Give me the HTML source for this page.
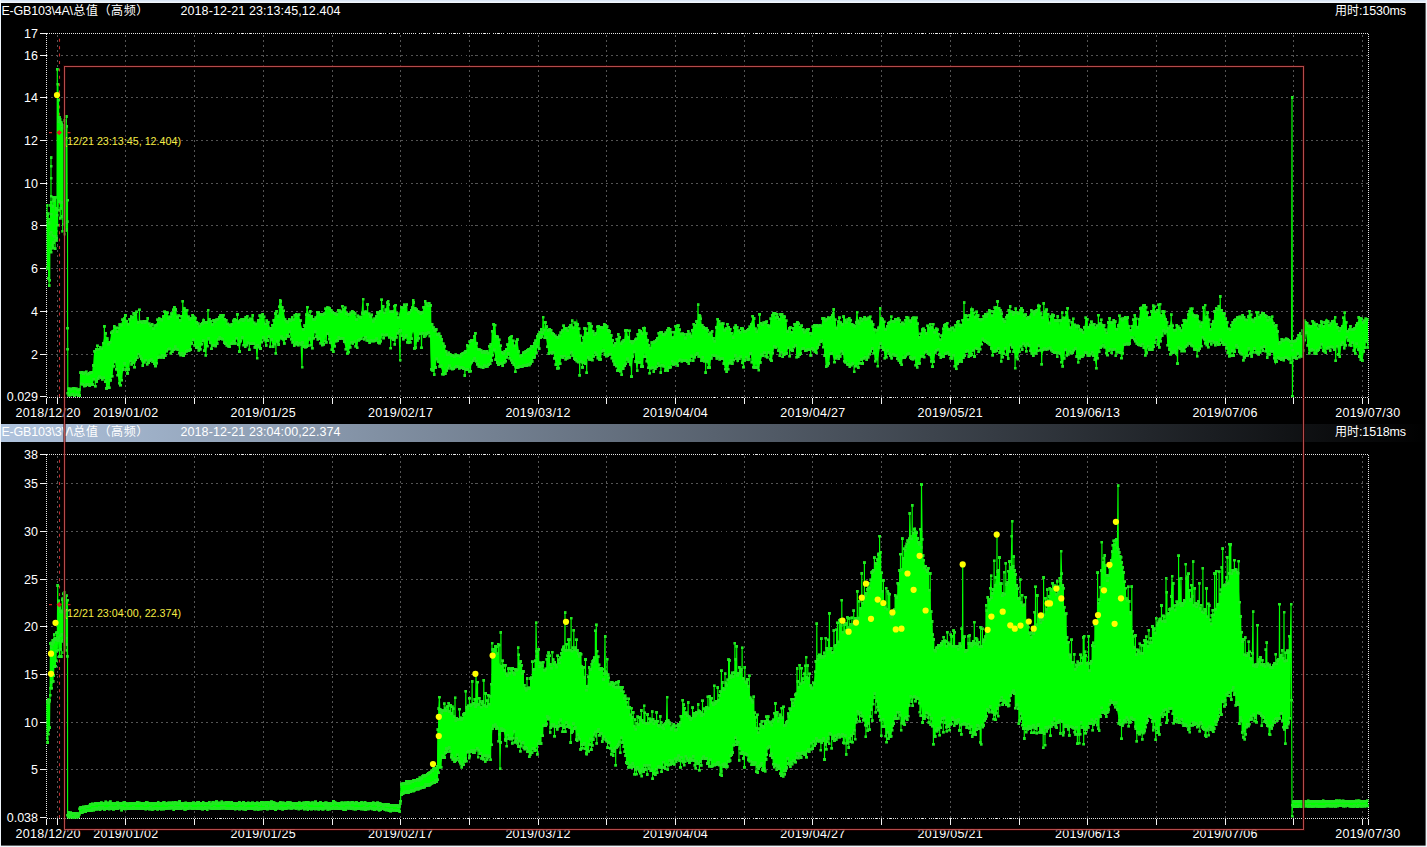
<!DOCTYPE html>
<html lang="zh"><head><meta charset="utf-8"><title>E-GB103 总值（高频）</title>
<style>html,body{margin:0;padding:0;background:#000;overflow:hidden}svg{display:block}text{font-family:"Liberation Sans","Noto Sans CJK SC",sans-serif;fill:#fff}.ax{font-size:12.5px}.hd{font-size:12.5px}.cj{font-size:12px}.an{font-size:10.7px;fill:#f4ec45}</style></head><body>
<svg width="1427" height="847" viewBox="0 0 1427 847">
<defs><linearGradient id="hg" x1="0" y1="0" x2="1" y2="0"><stop offset="0" stop-color="#b0c4de"/><stop offset="1" stop-color="#000"/></linearGradient><linearGradient id="tg" x1="0" y1="0" x2="0" y2="1"><stop offset="0" stop-color="#d3e1f2"/><stop offset="1" stop-color="#f6f9fd"/></linearGradient><marker id="m" markerWidth="3" markerHeight="3" refX="1.5" refY="1.5" markerUnits="userSpaceOnUse"><rect width="3" height="3" fill="#22e822"/></marker><clipPath id="c1"><rect x="46" y="33" width="1323.5" height="364.5"/></clipPath><clipPath id="c2"><rect x="46" y="454" width="1323.5" height="364.5"/></clipPath></defs>
<rect width="1427" height="847" fill="#000"/>
<path d="M57.5 34.5V397.5 M125.5 34.5V397.5 M194.5 34.5V397.5 M263.5 34.5V397.5 M332.5 34.5V397.5 M400.5 34.5V397.5 M469.5 34.5V397.5 M538.5 34.5V397.5 M606.5 34.5V397.5 M675.5 34.5V397.5 M744.5 34.5V397.5 M812.5 34.5V397.5 M881.5 34.5V397.5 M950.5 34.5V397.5 M1019.5 34.5V397.5 M1087.5 34.5V397.5 M1156.5 34.5V397.5 M1225.5 34.5V397.5 M1293.5 34.5V397.5 M1362.5 34.5V397.5 M45.5 55.5H1368.5 M45.5 97.5H1368.5 M45.5 140.5H1368.5 M45.5 183.5H1368.5 M45.5 225.5H1368.5 M45.5 268.5H1368.5 M45.5 311.5H1368.5 M45.5 354.5H1368.5" stroke="#545454" stroke-width="1" stroke-dasharray="2 3" fill="none" shape-rendering="crispEdges"/>
<path d="M46.5 33.5H1368.5 M46.5 397.5H1368.5 M46.5 33.5V397.5 M1368.5 33.5V397.5" stroke="#e6e6e6" stroke-width="1" stroke-dasharray="1 1" fill="none" shape-rendering="crispEdges"/>
<path d="M40 33.5H46.5 M40 55.5H46.5 M40 97.5H46.5 M40 140.5H46.5 M40 183.5H46.5 M40 225.5H46.5 M40 268.5H46.5 M40 311.5H46.5 M40 354.5H46.5 M40 396.5H46.5 M46.5 397.5V403.5 M57.5 397.5V403.5 M125.5 397.5V403.5 M194.5 397.5V403.5 M263.5 397.5V403.5 M332.5 397.5V403.5 M400.5 397.5V403.5 M469.5 397.5V403.5 M538.5 397.5V403.5 M606.5 397.5V403.5 M675.5 397.5V403.5 M744.5 397.5V403.5 M812.5 397.5V403.5 M881.5 397.5V403.5 M950.5 397.5V403.5 M1019.5 397.5V403.5 M1087.5 397.5V403.5 M1156.5 397.5V403.5 M1225.5 397.5V403.5 M1293.5 397.5V403.5 M1362.5 397.5V403.5 M1368.5 397.5V403.5" stroke="#f2f2f2" stroke-width="1" fill="none" shape-rendering="crispEdges"/>
<rect x="0" y="424" width="1427" height="18" fill="url(#hg)"/>
<path d="M57.5 455.5V818.5 M125.5 455.5V818.5 M194.5 455.5V818.5 M263.5 455.5V818.5 M332.5 455.5V818.5 M400.5 455.5V818.5 M469.5 455.5V818.5 M538.5 455.5V818.5 M606.5 455.5V818.5 M675.5 455.5V818.5 M744.5 455.5V818.5 M812.5 455.5V818.5 M881.5 455.5V818.5 M950.5 455.5V818.5 M1019.5 455.5V818.5 M1087.5 455.5V818.5 M1156.5 455.5V818.5 M1225.5 455.5V818.5 M1293.5 455.5V818.5 M1362.5 455.5V818.5 M45.5 483.5H1368.5 M45.5 531.5H1368.5 M45.5 579.5H1368.5 M45.5 626.5H1368.5 M45.5 674.5H1368.5 M45.5 722.5H1368.5 M45.5 769.5H1368.5" stroke="#545454" stroke-width="1" stroke-dasharray="2 3" fill="none" shape-rendering="crispEdges"/>
<path d="M46.5 454.5H1368.5 M46.5 818.5H1368.5 M46.5 454.5V818.5 M1368.5 454.5V818.5" stroke="#e6e6e6" stroke-width="1" stroke-dasharray="1 1" fill="none" shape-rendering="crispEdges"/>
<path d="M40 454.5H46.5 M40 483.5H46.5 M40 531.5H46.5 M40 579.5H46.5 M40 626.5H46.5 M40 674.5H46.5 M40 722.5H46.5 M40 769.5H46.5 M40 817.5H46.5 M46.5 818.5V824.5 M57.5 818.5V824.5 M125.5 818.5V824.5 M194.5 818.5V824.5 M263.5 818.5V824.5 M332.5 818.5V824.5 M400.5 818.5V824.5 M469.5 818.5V824.5 M538.5 818.5V824.5 M606.5 818.5V824.5 M675.5 818.5V824.5 M744.5 818.5V824.5 M812.5 818.5V824.5 M881.5 818.5V824.5 M950.5 818.5V824.5 M1019.5 818.5V824.5 M1087.5 818.5V824.5 M1156.5 818.5V824.5 M1225.5 818.5V824.5 M1293.5 818.5V824.5 M1362.5 818.5V824.5 M1368.5 818.5V824.5" stroke="#f2f2f2" stroke-width="1" fill="none" shape-rendering="crispEdges"/>
<text x="38" y="37.8" text-anchor="end" class="ax">17</text>
<text x="38" y="59.8" text-anchor="end" class="ax">16</text>
<text x="38" y="101.8" text-anchor="end" class="ax">14</text>
<text x="38" y="144.8" text-anchor="end" class="ax">12</text>
<text x="38" y="187.8" text-anchor="end" class="ax">10</text>
<text x="38" y="229.8" text-anchor="end" class="ax">8</text>
<text x="38" y="272.8" text-anchor="end" class="ax">6</text>
<text x="38" y="315.8" text-anchor="end" class="ax">4</text>
<text x="38" y="358.8" text-anchor="end" class="ax">2</text>
<text x="38" y="400.8" text-anchor="end" class="ax">0.029</text>
<text x="15.5" y="417" textLength="65" lengthAdjust="spacing" class="ax">2018/12/20</text>
<text x="93.2" y="417" textLength="65" lengthAdjust="spacing" class="ax">2019/01/02</text>
<text x="230.6" y="417" textLength="65" lengthAdjust="spacing" class="ax">2019/01/25</text>
<text x="368.0" y="417" textLength="65" lengthAdjust="spacing" class="ax">2019/02/17</text>
<text x="505.4" y="417" textLength="65" lengthAdjust="spacing" class="ax">2019/03/12</text>
<text x="642.8" y="417" textLength="65" lengthAdjust="spacing" class="ax">2019/04/04</text>
<text x="780.2" y="417" textLength="65" lengthAdjust="spacing" class="ax">2019/04/27</text>
<text x="917.6" y="417" textLength="65" lengthAdjust="spacing" class="ax">2019/05/21</text>
<text x="1055.0" y="417" textLength="65" lengthAdjust="spacing" class="ax">2019/06/13</text>
<text x="1192.4" y="417" textLength="65" lengthAdjust="spacing" class="ax">2019/07/06</text>
<text x="1335.2" y="417" textLength="65" lengthAdjust="spacing" class="ax">2019/07/30</text>
<text x="1.5" y="15" class="hd"><tspan textLength="71.5" lengthAdjust="spacing">E-GB103\4A\</tspan><tspan class="cj" dx="0.5" textLength="75" lengthAdjust="spacing">总值（高频）</tspan></text>
<text x="180.5" y="15" textLength="160" lengthAdjust="spacing" class="hd">2018-12-21 23:13:45,12.404</text>
<text x="1335" y="15" class="hd"><tspan class="cj">用时</tspan><tspan textLength="47" lengthAdjust="spacing">:1530ms</tspan></text>
<text x="38" y="458.8" text-anchor="end" class="ax">38</text>
<text x="38" y="487.8" text-anchor="end" class="ax">35</text>
<text x="38" y="535.8" text-anchor="end" class="ax">30</text>
<text x="38" y="583.8" text-anchor="end" class="ax">25</text>
<text x="38" y="630.8" text-anchor="end" class="ax">20</text>
<text x="38" y="678.8" text-anchor="end" class="ax">15</text>
<text x="38" y="726.8" text-anchor="end" class="ax">10</text>
<text x="38" y="773.8" text-anchor="end" class="ax">5</text>
<text x="38" y="821.8" text-anchor="end" class="ax">0.038</text>
<text x="15.5" y="838" textLength="65" lengthAdjust="spacing" class="ax">2018/12/20</text>
<text x="93.2" y="838" textLength="65" lengthAdjust="spacing" class="ax">2019/01/02</text>
<text x="230.6" y="838" textLength="65" lengthAdjust="spacing" class="ax">2019/01/25</text>
<text x="368.0" y="838" textLength="65" lengthAdjust="spacing" class="ax">2019/02/17</text>
<text x="505.4" y="838" textLength="65" lengthAdjust="spacing" class="ax">2019/03/12</text>
<text x="642.8" y="838" textLength="65" lengthAdjust="spacing" class="ax">2019/04/04</text>
<text x="780.2" y="838" textLength="65" lengthAdjust="spacing" class="ax">2019/04/27</text>
<text x="917.6" y="838" textLength="65" lengthAdjust="spacing" class="ax">2019/05/21</text>
<text x="1055.0" y="838" textLength="65" lengthAdjust="spacing" class="ax">2019/06/13</text>
<text x="1192.4" y="838" textLength="65" lengthAdjust="spacing" class="ax">2019/07/06</text>
<text x="1335.2" y="838" textLength="65" lengthAdjust="spacing" class="ax">2019/07/30</text>
<text x="1.5" y="436" class="hd"><tspan textLength="71.5" lengthAdjust="spacing">E-GB103\3V\</tspan><tspan class="cj" dx="0.5" textLength="75" lengthAdjust="spacing">总值（高频）</tspan></text>
<text x="180.5" y="436" textLength="160" lengthAdjust="spacing" class="hd">2018-12-21 23:04:00,22.374</text>
<text x="1335" y="436" class="hd"><tspan class="cj">用时</tspan><tspan textLength="47" lengthAdjust="spacing">:1518ms</tspan></text>
<path d="M59.5 38.8V397 M59.5 459.8V818" stroke="#c22c2c" stroke-width="1.1" stroke-dasharray="3 4.4" fill="none"/>
<g clip-path="url(#c1)">
<polygon points="68.0,389.2 68.7,389.2 69.4,389.2 70.1,389.2 70.8,389.2 71.5,389.2 72.2,389.2 72.9,389.2 73.6,389.1 74.3,389.1 75.0,389.2 75.7,389.2 76.4,389.1 77.1,389.1 77.8,389.1 78.5,389.0 79.2,389.0 79.9,389.1 80.6,372.6 81.3,372.8 82.0,373.1 82.7,373.4 83.4,373.7 84.1,373.5 84.8,373.1 85.5,372.6 86.2,372.2 86.9,372.7 87.6,373.3 88.3,373.8 89.0,374.1 89.7,373.6 90.4,373.0 91.1,372.5 91.8,372.3 92.5,372.3 93.2,365.3 93.9,353.4 94.6,352.1 95.3,350.6 96.0,349.1 96.7,348.0 97.4,348.5 98.1,348.9 98.8,349.3 99.5,349.5 100.2,349.4 100.9,349.0 101.6,348.6 102.3,346.0 103.0,342.8 103.7,339.6 104.4,336.6 105.1,336.7 105.8,336.8 106.5,336.9 107.2,337.4 107.9,338.5 108.6,340.2 109.3,342.0 110.0,340.5 110.7,337.3 111.4,334.1 112.1,330.8 112.8,329.4 113.5,328.1 114.2,326.9 114.9,326.1 115.6,327.3 116.3,328.4 117.0,329.5 117.7,329.4 118.4,328.1 119.1,326.8 119.8,325.5 120.5,324.3 121.2,323.2 121.9,322.1 122.6,320.9 123.3,319.0 124.0,317.1 124.7,315.2 125.4,315.3 126.1,318.5 126.8,321.6 127.5,324.7 128.2,324.1 128.9,321.9 129.6,319.6 130.3,317.3 131.0,317.4 131.7,317.4 132.4,317.5 133.1,317.1 133.8,315.5 134.5,313.9 135.2,312.3 135.9,313.3 136.6,316.3 137.3,319.3 138.0,322.3 138.7,322.5 139.4,322.1 140.1,321.7 140.8,321.4 141.5,322.1 142.2,322.8 142.9,323.4 143.6,323.3 144.3,322.2 145.0,321.1 145.7,319.9 146.4,320.4 147.1,321.3 147.8,322.3 148.5,323.2 149.2,324.0 149.9,324.7 150.6,325.5 151.3,326.1 152.0,326.4 152.7,326.8 153.4,327.2 154.1,326.7 154.8,325.6 155.5,324.5 156.2,323.4 156.9,322.8 157.6,322.1 158.3,321.5 159.0,320.9 159.7,320.4 160.4,319.9 161.1,319.4 161.8,318.6 162.5,317.5 163.2,316.3 163.9,315.2 164.6,314.3 165.3,313.4 166.0,312.5 166.7,311.8 167.4,313.2 168.1,314.5 168.8,315.8 169.5,316.4 170.2,315.8 170.9,315.1 171.6,314.5 172.3,312.8 173.0,310.7 173.7,308.5 174.4,306.3 175.1,308.5 175.8,311.2 176.5,313.8 177.2,316.3 177.9,318.0 178.6,319.7 179.3,321.3 180.0,321.1 180.7,319.1 181.4,317.1 182.1,315.1 182.8,312.9 183.5,310.6 184.2,308.3 184.9,306.4 185.6,308.8 186.3,311.2 187.0,313.6 187.7,315.6 188.4,316.9 189.1,318.2 189.8,319.5 190.5,319.4 191.2,318.7 191.9,318.1 192.6,317.5 193.3,316.9 194.0,316.2 194.7,315.6 195.4,315.9 196.1,319.2 196.8,322.4 197.5,325.7 198.2,327.3 198.9,327.6 199.6,327.9 200.3,328.1 201.0,325.8 201.7,322.9 202.4,320.0 203.1,317.7 203.8,318.7 204.5,320.0 205.2,321.3 205.9,321.9 206.6,321.5 207.3,321.0 208.0,320.6 208.7,320.6 209.4,320.9 210.1,321.2 210.8,321.5 211.5,322.2 212.2,322.8 212.9,323.4 213.6,323.4 214.3,322.3 215.0,321.3 215.7,320.3 216.4,319.7 217.1,319.2 217.8,318.6 218.5,318.1 219.2,317.6 219.9,317.1 220.6,316.6 221.3,316.2 222.0,316.4 222.7,316.5 223.4,316.7 224.1,317.3 224.8,318.3 225.5,319.4 226.2,320.5 226.9,321.9 227.6,323.4 228.3,324.9 229.0,326.4 229.7,325.5 230.4,324.7 231.1,323.8 231.8,323.1 232.5,322.5 233.2,322.0 233.9,321.5 234.6,321.3 235.3,321.2 236.0,321.2 236.7,321.2 237.4,320.8 238.1,320.3 238.8,319.8 239.5,319.6 240.2,320.6 240.9,321.7 241.6,322.7 242.3,322.5 243.0,321.1 243.7,319.6 244.4,318.1 245.1,317.3 245.8,316.8 246.5,316.3 247.2,315.9 247.9,317.2 248.6,318.5 249.3,319.8 250.0,320.1 250.7,318.8 251.4,317.5 252.1,316.1 252.8,317.4 253.5,320.2 254.2,322.9 254.9,326.1 255.6,324.8 256.3,322.8 257.0,320.9 257.7,319.3 258.4,319.5 259.1,319.6 259.8,319.8 260.5,319.1 261.2,317.6 261.9,316.2 262.6,314.8 263.3,316.6 264.0,319.2 264.7,321.8 265.4,324.0 266.1,322.9 266.8,321.9 267.5,320.8 268.2,321.1 268.9,323.6 269.6,326.1 270.3,328.6 271.0,328.4 271.7,327.1 272.4,325.7 273.1,324.4 273.8,321.3 274.5,318.3 275.2,315.3 275.9,313.3 276.6,313.9 277.3,314.5 278.0,315.2 278.7,313.3 279.4,309.4 280.1,305.6 280.8,301.9 281.5,303.7 282.2,306.5 282.9,309.4 283.6,312.2 284.3,314.9 285.0,317.7 285.7,320.4 286.4,321.9 287.1,321.6 287.8,321.2 288.5,320.9 289.2,320.4 289.9,319.9 290.6,319.4 291.3,318.8 292.0,318.8 292.7,318.8 293.4,318.8 294.1,318.4 294.8,317.2 295.5,316.0 296.2,314.8 296.9,314.7 297.6,315.5 298.3,316.2 299.0,316.9 299.7,319.5 300.4,322.3 301.1,325.1 301.8,327.5 302.5,328.4 303.2,329.2 303.9,330.0 304.6,327.4 305.3,320.8 306.0,314.3 306.7,307.7 307.4,308.0 308.1,310.5 308.8,313.0 309.5,315.4 310.2,315.8 310.9,316.2 311.6,316.5 312.3,317.0 313.0,317.9 313.7,318.7 314.4,319.6 315.1,318.6 315.8,316.6 316.5,314.5 317.2,312.5 317.9,312.6 318.6,313.0 319.3,313.4 320.0,313.8 320.7,314.5 321.4,315.2 322.1,315.8 322.8,315.4 323.5,313.8 324.2,312.3 324.9,310.8 325.6,310.1 326.3,309.6 327.0,309.1 327.7,308.7 328.4,309.0 329.1,309.3 329.8,309.6 330.5,310.1 331.2,311.0 331.9,311.9 332.6,312.8 333.3,313.4 334.0,313.9 334.7,314.4 335.4,314.8 336.1,314.2 336.8,313.5 337.5,312.9 338.2,312.4 338.9,312.4 339.6,312.4 340.3,312.4 341.0,311.9 341.7,310.9 342.4,309.9 343.1,308.9 343.8,308.7 344.5,308.7 345.2,308.7 345.9,309.0 346.6,311.5 347.3,314.0 348.0,316.6 348.7,317.4 349.4,315.8 350.1,314.3 350.8,312.7 351.5,312.2 352.2,312.2 352.9,312.2 353.6,312.2 354.3,313.5 355.0,314.9 355.7,316.3 356.4,317.4 357.1,317.5 357.8,317.7 358.5,317.8 359.2,317.8 359.9,317.6 360.6,317.4 361.3,317.2 362.0,315.9 362.7,314.5 363.4,313.1 364.1,311.9 364.8,311.9 365.5,311.8 366.2,311.8 366.9,312.3 367.6,313.4 368.3,314.4 369.0,315.5 369.7,316.1 370.4,316.6 371.1,317.0 371.8,317.5 372.5,318.5 373.2,319.5 373.9,320.5 374.6,320.5 375.3,318.4 376.0,316.3 376.7,314.1 377.4,313.2 378.1,313.0 378.8,312.9 379.5,312.7 380.2,312.0 380.9,311.2 381.6,310.4 382.3,310.1 383.0,312.1 383.7,314.1 384.4,316.1 385.1,314.9 385.8,310.4 386.5,305.9 387.2,301.3 387.9,302.8 388.6,306.0 389.3,309.1 390.0,312.1 390.7,312.5 391.4,312.9 392.1,313.3 392.8,312.6 393.5,309.9 394.2,307.2 394.9,304.5 395.6,306.5 396.3,310.9 397.0,315.4 397.7,319.9 398.4,317.2 399.1,314.1 399.8,311.0 400.5,308.6 401.2,308.6 401.9,308.6 402.6,308.6 403.3,308.0 404.0,306.8 404.7,305.6 405.4,304.4 406.1,306.4 406.8,309.1 407.5,311.8 408.2,314.1 408.9,313.3 409.6,312.5 410.3,311.6 411.0,310.6 411.7,309.3 412.4,307.9 413.1,306.6 413.8,306.7 414.5,307.6 415.2,308.4 415.9,309.3 416.6,309.7 417.3,310.1 418.0,310.4 418.7,310.9 419.4,311.7 420.1,312.5 420.8,313.2 421.5,312.9 422.2,311.6 422.9,310.3 423.6,309.0 424.3,307.5 425.0,306.0 425.7,304.4 426.4,303.3 427.1,304.2 427.8,305.1 428.5,306.1 429.2,305.8 429.9,303.8 430.6,316.3 431.3,323.7 432.0,324.3 432.7,326.1 433.4,328.0 434.1,329.8 434.8,331.0 435.5,332.1 436.2,333.2 436.9,333.6 437.6,332.4 438.3,332.4 439.0,334.1 439.7,335.6 440.4,336.8 441.1,338.1 441.8,339.4 442.5,340.9 443.2,342.5 443.9,344.1 444.6,346.1 445.3,349.5 446.0,351.9 446.7,353.9 447.4,354.6 448.1,354.3 448.8,354.2 449.5,354.3 450.2,355.1 450.9,355.4 451.6,355.7 452.3,356.0 453.0,355.9 453.7,355.8 454.4,355.6 455.1,355.5 455.8,355.1 456.5,354.8 457.2,354.5 457.9,354.8 458.6,355.5 459.3,356.3 460.0,357.0 460.7,356.0 461.4,354.9 462.1,353.8 462.8,352.9 463.5,352.8 464.2,352.7 464.9,352.6 465.6,352.7 466.3,352.2 467.0,350.5 467.7,349.0 468.4,346.9 469.1,344.6 469.8,342.3 470.5,340.2 471.2,339.0 471.9,339.0 472.6,339.1 473.3,338.8 474.0,338.0 474.7,337.2 475.4,337.7 476.1,340.5 476.8,343.8 477.5,346.8 478.2,349.6 478.9,350.1 479.6,350.9 480.3,351.3 481.0,351.1 481.7,351.5 482.4,352.0 483.1,352.4 483.8,352.3 484.5,351.7 485.2,351.2 485.9,350.7 486.6,351.2 487.3,351.9 488.0,352.5 488.7,349.8 489.4,347.8 490.1,346.4 490.8,345.7 491.5,343.6 492.2,338.2 492.9,332.6 493.6,326.9 494.3,325.7 495.0,326.4 495.7,332.0 496.4,337.5 497.1,337.3 497.8,337.1 498.5,337.1 499.2,338.7 499.9,343.1 500.6,347.1 501.3,350.4 502.0,352.4 502.7,354.0 503.4,353.8 504.1,352.1 504.8,351.0 505.5,350.1 506.2,349.3 506.9,348.3 507.6,346.1 508.3,343.6 509.0,340.8 509.7,338.7 510.4,337.7 511.1,336.9 511.8,337.4 512.5,339.3 513.2,341.6 513.9,343.9 514.6,346.1 515.3,343.7 516.0,341.4 516.7,339.1 517.4,340.3 518.1,345.8 518.8,350.3 519.5,354.0 520.2,355.7 520.9,357.2 521.6,356.4 522.3,355.0 523.0,354.1 523.7,353.1 524.4,352.1 525.1,351.3 525.8,351.0 526.5,350.8 527.2,350.6 527.9,350.1 528.6,349.2 529.3,348.4 530.0,347.4 530.7,347.7 531.4,347.8 532.1,347.7 532.8,347.6 533.5,345.6 534.2,343.7 534.9,341.7 535.6,340.0 536.3,338.8 537.0,337.6 537.7,336.4 538.4,334.9 539.1,333.2 539.8,331.4 540.5,329.6 541.2,330.0 541.9,330.6 542.6,331.3 543.3,331.9 544.0,330.6 544.7,329.3 545.4,328.0 546.1,327.5 546.8,327.8 547.5,328.7 548.2,329.9 548.9,330.1 549.6,330.0 550.3,329.7 551.0,329.6 551.7,330.6 552.4,331.7 553.1,332.7 553.8,334.3 554.5,335.5 555.2,336.1 555.9,336.8 556.6,337.1 557.3,337.4 558.0,337.7 558.7,337.9 559.4,337.2 560.1,336.4 560.8,335.6 561.5,334.5 562.2,331.5 562.9,328.5 563.6,325.5 564.3,325.1 565.0,326.9 565.7,328.6 566.4,330.3 567.1,330.3 567.8,329.8 568.5,329.4 569.2,328.8 569.9,327.1 570.6,325.3 571.3,323.6 572.0,323.5 572.7,325.8 573.4,328.0 574.1,330.2 574.8,328.5 575.5,325.2 576.2,321.9 576.9,318.6 577.6,322.5 578.3,326.4 579.0,330.2 579.7,334.0 580.4,337.4 581.1,340.8 581.8,344.2 582.5,342.9 583.2,338.2 583.9,333.6 584.6,328.9 585.3,329.6 586.0,331.1 586.7,332.5 587.4,333.3 588.1,330.7 588.8,328.2 589.5,325.7 590.2,324.9 590.9,326.3 591.6,327.6 592.3,329.0 593.0,330.7 593.7,332.5 594.4,334.4 595.1,336.0 595.8,333.4 596.5,330.8 597.2,328.2 597.9,326.7 598.6,327.6 599.3,328.5 600.0,329.3 600.7,329.1 601.4,328.1 602.1,327.2 602.8,326.3 603.5,325.7 604.2,325.2 604.9,324.7 605.6,324.6 606.3,326.0 607.0,327.5 607.7,329.0 608.4,330.3 609.1,331.5 609.8,332.6 610.5,333.7 611.2,335.3 611.9,337.0 612.6,340.6 613.3,344.2 614.0,345.5 614.7,344.6 615.4,343.8 616.1,342.5 616.8,340.3 617.5,338.2 618.2,336.0 618.9,336.9 619.6,339.2 620.3,341.6 621.0,344.0 621.7,343.8 622.4,343.5 623.1,343.2 623.8,342.0 624.5,338.1 625.2,334.3 625.9,330.4 626.6,330.2 627.3,333.1 628.0,336.0 628.7,338.9 629.4,339.6 630.1,339.8 630.8,340.1 631.5,340.3 632.2,340.5 632.9,340.7 633.6,340.9 634.3,340.8 635.0,340.3 635.7,339.7 636.4,339.2 637.1,337.2 637.8,334.7 638.5,332.1 639.2,329.5 639.9,330.8 640.6,332.1 641.3,333.4 642.0,333.6 642.7,331.1 643.4,328.6 644.1,326.0 644.8,326.7 645.5,329.8 646.2,332.8 646.9,335.9 647.6,339.1 648.3,342.3 649.0,345.5 649.7,347.9 650.4,346.5 651.1,345.1 651.8,343.8 652.5,343.1 653.2,343.3 653.9,343.5 654.6,343.7 655.3,342.4 656.0,340.6 656.7,338.7 657.4,336.9 658.1,336.2 658.8,335.5 659.5,334.9 660.2,334.2 660.9,333.5 661.6,332.8 662.3,332.1 663.0,332.4 663.7,333.4 664.4,334.4 665.1,335.4 665.8,333.8 666.5,331.9 667.2,330.1 667.9,328.7 668.6,329.1 669.3,329.5 670.0,329.9 670.7,331.4 671.4,334.0 672.1,336.6 672.8,339.2 673.5,337.0 674.2,333.5 674.9,329.9 675.6,326.6 676.3,327.2 677.0,327.7 677.7,328.3 678.4,329.0 679.1,330.2 679.8,331.4 680.5,332.6 681.2,333.5 681.9,334.1 682.6,334.8 683.3,335.5 684.0,335.7 684.7,335.9 685.4,336.0 686.1,335.8 686.8,334.3 687.5,332.9 688.2,331.4 688.9,331.9 689.6,334.2 690.3,335.7 691.0,336.0 691.7,333.3 692.4,329.9 693.1,326.8 693.8,325.7 694.5,325.5 695.2,325.3 695.9,325.1 696.6,324.0 697.3,321.2 698.0,318.4 698.7,315.6 699.4,316.5 700.1,319.0 700.8,321.6 701.5,324.1 702.2,324.9 702.9,325.6 703.6,327.1 704.3,328.3 705.0,328.7 705.7,329.1 706.4,329.5 707.1,330.6 707.8,332.2 708.5,333.2 709.2,333.9 709.9,333.8 710.6,333.5 711.3,333.2 712.0,333.3 712.7,336.0 713.4,338.7 714.1,341.4 714.8,340.2 715.5,333.7 716.2,327.2 716.9,320.7 717.6,320.1 718.3,321.9 719.0,323.7 719.7,325.5 720.4,324.7 721.1,323.8 721.8,323.0 722.5,323.0 723.2,324.8 723.9,326.7 724.6,328.5 725.3,329.0 726.0,328.7 726.7,328.3 727.4,327.9 728.1,328.2 728.8,328.6 729.5,329.0 730.2,329.7 730.9,331.5 731.6,333.3 732.3,335.1 733.0,334.7 733.7,331.8 734.4,328.9 735.1,326.0 735.8,326.3 736.5,327.6 737.2,328.9 737.9,330.2 738.6,330.8 739.3,331.5 740.0,332.1 740.7,331.8 741.4,330.2 742.1,328.5 742.8,326.8 743.5,327.3 744.2,329.0 744.9,330.8 745.6,332.6 746.3,332.1 747.0,331.5 747.7,330.9 748.4,330.1 749.1,328.1 749.8,326.2 750.5,324.2 751.2,322.2 751.9,320.3 752.6,318.3 753.3,316.3 754.0,319.4 754.7,323.8 755.4,328.2 756.1,332.1 756.8,330.5 757.5,328.9 758.2,327.2 758.9,326.1 759.6,325.9 760.3,325.7 761.0,325.5 761.7,325.1 762.4,324.5 763.1,323.8 763.8,323.2 764.5,323.0 765.2,322.7 765.9,322.5 766.6,322.6 767.3,323.6 768.0,324.6 768.7,325.6 769.4,325.3 770.1,323.8 770.8,321.6 771.5,319.5 772.2,317.5 772.9,315.7 773.6,314.6 774.3,314.0 775.0,315.8 775.7,317.5 776.4,319.2 777.1,320.0 777.8,319.4 778.5,318.9 779.2,318.3 779.9,317.6 780.6,316.8 781.3,316.0 782.0,315.2 782.7,315.3 783.4,315.4 784.1,315.6 784.8,316.4 785.5,320.1 786.2,324.2 786.9,328.3 787.6,330.3 788.3,330.1 789.0,329.3 789.7,328.5 790.4,329.8 791.1,331.4 791.8,333.0 792.5,333.9 793.2,330.8 793.9,327.7 794.6,324.6 795.3,322.8 796.0,322.7 796.7,322.5 797.4,322.3 798.1,323.5 798.8,325.1 799.5,326.7 800.2,328.3 800.9,329.7 801.6,331.1 802.3,332.5 803.0,333.1 803.7,332.3 804.4,331.4 805.1,330.5 805.8,330.2 806.5,330.1 807.2,330.0 807.9,330.0 808.6,331.8 809.3,333.9 810.0,336.0 810.7,337.2 811.4,334.0 812.1,330.8 812.8,327.7 813.5,325.9 814.2,325.4 814.9,325.0 815.6,324.6 816.3,324.7 817.0,325.1 817.7,325.4 818.4,325.7 819.1,325.9 819.8,326.1 820.5,326.3 821.2,325.8 821.9,323.2 822.6,320.6 823.3,319.4 824.0,319.9 824.7,320.3 825.4,320.7 826.1,321.1 826.8,319.9 827.5,318.6 828.2,317.3 828.9,316.5 829.6,317.6 830.3,318.6 831.0,319.7 831.7,318.9 832.4,316.5 833.1,314.0 833.8,311.6 834.5,314.7 835.2,319.1 835.9,323.5 836.6,327.2 837.3,324.3 838.0,321.4 838.7,318.4 839.4,317.5 840.1,319.9 840.8,322.2 841.5,325.3 842.2,324.9 842.9,322.8 843.6,319.8 844.3,316.6 845.0,317.8 845.7,319.2 846.4,320.6 847.1,321.6 847.8,321.5 848.5,321.4 849.2,321.3 849.9,321.7 850.6,322.7 851.3,323.6 852.0,324.5 852.7,325.2 853.4,325.8 854.1,326.4 854.8,326.7 855.5,325.0 856.2,323.3 856.9,321.7 857.6,320.6 858.3,320.5 859.0,320.3 859.7,320.1 860.4,320.1 861.1,320.3 861.8,321.3 862.5,322.3 863.2,321.3 863.9,320.3 864.6,318.5 865.3,317.5 866.0,318.4 866.7,319.4 867.4,320.3 868.1,320.1 868.8,319.0 869.5,318.0 870.2,317.0 870.9,318.7 871.6,320.8 872.3,322.9 873.0,325.1 873.7,328.0 874.4,330.9 875.1,333.8 875.8,334.4 876.5,332.3 877.2,330.2 877.9,328.1 878.6,326.0 879.3,323.8 880.0,321.7 880.7,319.6 881.4,319.9 882.1,320.1 882.8,320.4 883.5,321.3 884.2,323.6 884.9,325.9 885.6,328.2 886.3,328.0 887.0,326.3 887.7,324.7 888.4,323.0 889.1,321.7 889.8,320.5 890.5,319.3 891.2,318.5 891.9,319.6 892.6,320.7 893.3,321.7 894.0,322.1 894.7,321.6 895.4,321.1 896.1,320.6 896.8,320.2 897.5,319.8 898.2,319.4 898.9,319.2 899.6,321.1 900.3,322.9 901.0,324.8 901.7,325.7 902.4,325.1 903.1,324.5 903.8,323.8 904.5,322.3 905.2,320.4 905.9,318.5 906.6,316.6 907.3,317.9 908.0,319.3 908.7,320.8 909.4,321.7 910.1,320.9 910.8,320.1 911.5,319.3 912.2,318.9 912.9,318.8 913.6,318.8 914.3,318.7 915.0,318.3 915.7,318.0 916.4,317.6 917.1,318.0 917.8,324.4 918.5,330.7 919.2,336.5 919.9,337.8 920.6,334.9 921.3,332.0 922.0,329.1 922.7,328.9 923.4,330.0 924.1,331.0 924.8,332.1 925.5,332.1 926.2,332.1 926.9,332.1 927.6,331.5 928.3,329.4 929.0,327.3 929.7,325.2 930.4,324.8 931.1,325.6 931.8,326.4 932.5,327.3 933.2,327.9 933.9,328.5 934.6,329.0 935.3,329.5 936.0,329.7 936.7,329.8 937.4,330.0 938.1,331.5 938.8,334.7 939.5,337.9 940.2,341.1 940.9,339.5 941.6,336.3 942.3,333.0 943.0,329.8 943.7,328.4 944.4,327.0 945.1,325.6 945.8,324.8 946.5,325.2 947.2,325.7 947.9,326.1 948.6,327.4 949.3,329.3 950.0,331.1 950.7,332.9 951.4,332.4 952.1,331.7 952.8,330.9 953.5,330.0 954.2,328.3 954.9,326.6 955.6,324.9 956.3,323.9 957.0,323.6 957.7,323.4 958.4,323.1 959.1,323.1 959.8,323.3 960.5,323.4 961.2,323.6 961.9,324.2 962.6,322.0 963.3,319.3 964.0,317.0 964.7,315.3 965.4,315.5 966.1,317.1 966.8,318.1 967.5,318.9 968.2,319.6 968.9,320.4 969.6,316.6 970.3,312.6 971.0,308.5 971.7,306.0 972.4,309.1 973.1,312.2 973.8,315.2 974.5,316.0 975.2,314.6 975.9,313.1 976.6,311.7 977.3,313.4 978.0,315.8 978.7,318.3 979.4,320.5 980.1,320.8 980.8,321.0 981.5,321.3 982.2,320.5 982.9,318.1 983.6,315.8 984.3,313.4 985.0,312.9 985.7,313.3 986.4,313.7 987.1,314.1 987.8,313.3 988.5,312.5 989.2,311.7 989.9,311.6 990.6,313.3 991.3,315.0 992.0,316.7 992.7,315.9 993.4,313.1 994.1,310.3 994.8,307.4 995.5,307.3 996.2,307.7 996.9,308.1 997.6,308.4 998.3,308.7 999.0,309.1 999.7,309.4 1000.4,310.5 1001.1,312.8 1001.8,315.1 1002.5,317.4 1003.2,319.4 1003.9,321.3 1004.6,323.2 1005.3,325.0 1006.0,322.1 1006.7,319.2 1007.4,316.3 1008.1,313.8 1008.8,312.4 1009.5,311.0 1010.2,309.7 1010.9,310.0 1011.6,311.5 1012.3,313.0 1013.0,314.5 1013.7,313.3 1014.4,311.8 1015.1,310.3 1015.8,309.3 1016.5,310.8 1017.2,312.3 1017.9,313.8 1018.6,313.9 1019.3,312.1 1020.0,310.4 1020.7,308.7 1021.4,309.3 1022.1,310.6 1022.8,312.0 1023.5,313.4 1024.2,314.3 1024.9,315.1 1025.6,316.0 1026.3,316.6 1027.0,316.6 1027.7,316.6 1028.4,316.7 1029.1,315.8 1029.8,314.3 1030.5,312.8 1031.2,311.3 1031.9,312.2 1032.6,313.3 1033.3,314.4 1034.0,315.1 1034.7,313.9 1035.4,312.7 1036.1,311.5 1036.8,309.8 1037.5,307.6 1038.2,305.3 1038.9,303.1 1039.6,305.8 1040.3,309.8 1041.0,313.9 1041.7,317.5 1042.4,316.0 1043.1,314.5 1043.8,313.0 1044.5,312.0 1045.2,311.6 1045.9,311.3 1046.6,310.9 1047.3,312.8 1048.0,315.9 1048.7,319.0 1049.4,322.1 1050.1,319.4 1050.8,317.3 1051.5,315.2 1052.2,314.3 1052.9,317.1 1053.6,318.8 1054.3,320.4 1055.0,320.7 1055.7,319.8 1056.4,318.9 1057.1,318.0 1057.8,319.7 1058.5,321.9 1059.2,324.2 1059.9,325.9 1060.6,323.1 1061.3,320.3 1062.0,317.4 1062.7,315.9 1063.4,316.2 1064.1,316.5 1064.8,316.8 1065.5,315.8 1066.2,314.4 1066.9,312.9 1067.6,311.5 1068.3,316.0 1069.0,320.5 1069.7,325.1 1070.4,327.7 1071.1,325.0 1071.8,322.4 1072.5,319.8 1073.2,320.2 1073.9,322.9 1074.6,325.7 1075.3,328.4 1076.0,329.1 1076.7,329.4 1077.4,329.7 1078.1,330.1 1078.8,330.3 1079.5,330.5 1080.2,330.8 1080.9,331.2 1081.6,332.0 1082.3,332.8 1083.0,333.5 1083.7,330.8 1084.4,326.8 1085.1,322.7 1085.8,318.8 1086.5,320.9 1087.2,323.1 1087.9,325.2 1088.6,326.4 1089.3,325.8 1090.0,325.2 1090.7,324.6 1091.4,324.4 1092.1,324.5 1092.8,324.6 1093.5,324.8 1094.2,325.4 1094.9,326.0 1095.6,326.7 1096.3,327.1 1097.0,326.2 1097.7,325.4 1098.4,324.5 1099.1,323.7 1099.8,322.9 1100.5,322.1 1101.2,321.4 1101.9,322.3 1102.6,323.8 1103.3,325.2 1104.0,326.7 1104.7,328.5 1105.4,330.2 1106.1,332.0 1106.8,331.8 1107.5,327.7 1108.2,323.6 1108.9,319.5 1109.6,318.9 1110.3,320.2 1111.0,321.5 1111.7,322.7 1112.4,321.8 1113.1,320.8 1113.8,319.7 1114.5,319.6 1115.2,322.7 1115.9,325.9 1116.6,329.1 1117.3,328.9 1118.0,325.6 1118.7,322.2 1119.4,318.9 1120.1,319.3 1120.8,320.0 1121.5,320.6 1122.2,321.0 1122.9,320.2 1123.6,320.0 1124.3,320.0 1125.0,320.0 1125.7,319.9 1126.4,319.9 1127.1,319.9 1127.8,321.9 1128.5,324.8 1129.2,327.7 1129.9,330.7 1130.6,329.6 1131.3,328.4 1132.0,327.2 1132.7,325.4 1133.4,321.8 1134.1,318.2 1134.8,314.6 1135.5,315.3 1136.2,319.4 1136.9,323.6 1137.6,327.7 1138.3,324.5 1139.0,319.8 1139.7,315.2 1140.4,311.0 1141.1,309.9 1141.8,308.8 1142.5,307.8 1143.2,307.3 1143.9,307.7 1144.6,308.2 1145.3,308.6 1146.0,310.3 1146.7,312.5 1147.4,314.7 1148.1,316.9 1148.8,317.2 1149.5,317.6 1150.2,318.0 1150.9,317.2 1151.6,313.6 1152.3,310.0 1153.0,306.5 1153.7,305.9 1154.4,308.3 1155.1,310.7 1155.8,313.2 1156.5,312.6 1157.2,311.9 1157.9,311.2 1158.6,310.9 1159.3,312.3 1160.0,313.7 1160.7,315.0 1161.4,315.2 1162.1,313.8 1162.8,312.4 1163.5,311.0 1164.2,312.0 1164.9,313.8 1165.6,315.6 1166.3,319.1 1167.0,322.8 1167.7,326.6 1168.4,327.9 1169.1,326.9 1169.8,324.5 1170.5,322.2 1171.2,319.8 1171.9,321.1 1172.6,324.6 1173.3,328.2 1174.0,331.7 1174.7,330.4 1175.4,328.6 1176.1,326.8 1176.8,325.5 1177.5,326.1 1178.2,326.7 1178.9,327.3 1179.6,327.9 1180.3,328.5 1181.0,329.1 1181.7,329.7 1182.4,327.4 1183.1,324.3 1183.8,321.3 1184.5,318.5 1185.2,319.6 1185.9,320.8 1186.6,320.3 1187.3,318.8 1188.0,315.9 1188.7,313.0 1189.4,311.1 1190.1,310.6 1190.8,310.4 1191.5,310.2 1192.2,310.0 1192.9,311.5 1193.6,313.1 1194.3,314.6 1195.0,315.9 1195.7,315.9 1196.4,316.0 1197.1,316.0 1197.8,316.9 1198.5,318.5 1199.2,320.2 1199.9,321.8 1200.6,322.4 1201.3,322.8 1202.0,323.1 1202.7,323.3 1203.4,321.7 1204.1,320.1 1204.8,318.5 1205.5,316.9 1206.2,315.3 1206.9,313.7 1207.6,312.1 1208.3,315.0 1209.0,320.0 1209.7,324.9 1210.4,329.9 1211.1,328.1 1211.8,326.2 1212.5,324.2 1213.2,322.0 1213.9,318.9 1214.6,315.8 1215.3,312.8 1216.0,310.8 1216.7,309.6 1217.4,308.5 1218.1,307.3 1218.8,307.7 1219.5,308.3 1220.2,309.0 1220.9,309.7 1221.6,310.8 1222.3,311.9 1223.0,313.0 1223.7,314.2 1224.4,315.5 1225.1,316.8 1225.8,318.1 1226.5,320.7 1227.2,323.9 1227.9,327.1 1228.6,330.3 1229.3,330.9 1230.0,329.3 1230.7,327.8 1231.4,326.2 1232.1,324.5 1232.8,322.8 1233.5,321.1 1234.2,320.2 1234.9,320.0 1235.6,319.7 1236.3,319.5 1237.0,318.8 1237.7,318.0 1238.4,317.3 1239.1,316.8 1239.8,317.2 1240.5,317.6 1241.2,318.0 1241.9,318.1 1242.6,317.7 1243.3,317.4 1244.0,317.1 1244.7,318.1 1245.4,319.4 1246.1,320.6 1246.8,321.6 1247.5,318.8 1248.2,315.9 1248.9,313.0 1249.6,312.0 1250.3,314.5 1251.0,317.0 1251.7,319.4 1252.4,320.2 1253.1,320.0 1253.8,319.8 1254.5,319.6 1255.2,318.3 1255.9,316.9 1256.6,315.5 1257.3,314.6 1258.0,315.6 1258.7,316.6 1259.4,317.7 1260.1,317.6 1260.8,316.4 1261.5,315.3 1262.2,314.1 1262.9,314.4 1263.6,314.9 1264.3,315.5 1265.0,316.1 1265.7,316.6 1266.4,317.2 1267.1,317.7 1267.8,318.2 1268.5,318.5 1269.2,318.7 1269.9,319.0 1270.6,319.0 1271.3,318.8 1272.0,318.6 1272.7,318.4 1273.4,320.8 1274.1,323.3 1274.8,325.7 1275.5,327.2 1276.2,325.7 1276.9,324.3 1277.6,329.1 1278.3,335.4 1279.0,342.0 1279.7,342.0 1280.4,341.9 1281.1,341.8 1281.8,341.6 1282.5,341.5 1283.2,341.3 1283.9,340.7 1284.6,340.1 1285.3,339.6 1286.0,339.2 1286.7,339.1 1287.4,339.0 1288.1,338.9 1288.8,339.7 1289.5,340.9 1290.2,342.0 1290.9,343.2 1290.9,360.0 1290.2,359.5 1289.5,359.1 1288.8,358.7 1288.1,358.3 1287.4,357.9 1286.7,357.6 1286.0,357.3 1285.3,357.5 1284.6,358.1 1283.9,358.8 1283.2,359.4 1282.5,359.1 1281.8,358.6 1281.1,358.2 1280.4,357.8 1279.7,357.9 1279.0,358.0 1278.3,357.3 1277.6,357.6 1276.9,358.9 1276.2,362.0 1275.5,365.1 1274.8,363.1 1274.1,359.4 1273.4,355.7 1272.7,352.2 1272.0,351.9 1271.3,351.7 1270.6,351.5 1269.9,351.7 1269.2,352.7 1268.5,353.8 1267.8,354.8 1267.1,354.0 1266.4,352.1 1265.7,350.1 1265.0,348.2 1264.3,347.9 1263.6,347.9 1262.9,347.9 1262.2,348.1 1261.5,349.7 1260.8,351.3 1260.1,352.9 1259.4,353.8 1258.7,354.1 1258.0,354.4 1257.3,354.7 1256.6,353.3 1255.9,351.5 1255.2,349.6 1254.5,348.1 1253.8,350.4 1253.1,352.7 1252.4,355.0 1251.7,355.9 1251.0,354.0 1250.3,352.2 1249.6,350.4 1248.9,350.6 1248.2,352.0 1247.5,353.3 1246.8,354.7 1246.1,354.9 1245.4,354.9 1244.7,355.0 1244.0,355.1 1243.3,355.2 1242.6,355.4 1241.9,355.5 1241.2,355.0 1240.5,353.8 1239.8,352.7 1239.1,351.5 1238.4,350.3 1237.7,349.1 1237.0,347.9 1236.3,347.0 1235.6,348.5 1234.9,350.0 1234.2,351.5 1233.5,352.4 1232.8,352.5 1232.1,352.5 1231.4,352.6 1230.7,353.6 1230.0,354.9 1229.3,356.3 1228.6,355.9 1227.9,352.7 1227.2,349.5 1226.5,346.4 1225.8,344.1 1225.1,344.2 1224.4,344.3 1223.7,344.4 1223.0,343.9 1222.3,343.1 1221.6,342.3 1220.9,341.4 1220.2,342.4 1219.5,343.7 1218.8,345.1 1218.1,346.1 1217.4,345.4 1216.7,344.6 1216.0,343.9 1215.3,343.4 1214.6,343.2 1213.9,343.0 1213.2,342.8 1212.5,342.1 1211.8,341.2 1211.1,340.3 1210.4,339.4 1209.7,340.9 1209.0,342.3 1208.3,343.8 1207.6,344.7 1206.9,344.3 1206.2,343.9 1205.5,343.5 1204.8,342.4 1204.1,340.9 1203.4,339.4 1202.7,337.9 1202.0,340.3 1201.3,343.2 1200.6,346.1 1199.9,348.6 1199.2,349.4 1198.5,350.2 1197.8,351.0 1197.1,351.3 1196.4,351.0 1195.7,350.7 1195.0,350.4 1194.3,349.4 1193.6,348.3 1192.9,347.2 1192.2,346.1 1191.5,345.8 1190.8,345.6 1190.1,345.3 1189.4,344.4 1188.7,342.9 1188.0,342.5 1187.3,342.1 1186.6,344.3 1185.9,347.8 1185.2,349.7 1184.5,351.6 1183.8,351.1 1183.1,350.4 1182.4,349.7 1181.7,348.9 1181.0,348.1 1180.3,347.2 1179.6,346.3 1178.9,347.5 1178.2,350.5 1177.5,353.6 1176.8,356.6 1176.1,355.7 1175.4,353.7 1174.7,351.8 1174.0,350.1 1173.3,351.2 1172.6,352.3 1171.9,353.4 1171.2,353.6 1170.5,352.4 1169.8,351.2 1169.1,350.1 1168.4,347.6 1167.7,343.4 1167.0,338.0 1166.3,332.7 1165.6,331.8 1164.9,331.7 1164.2,331.7 1163.5,332.2 1162.8,334.3 1162.1,336.4 1161.4,338.5 1160.7,340.8 1160.0,343.3 1159.3,345.8 1158.6,348.3 1157.9,345.6 1157.2,341.9 1156.5,338.1 1155.8,335.5 1155.1,339.0 1154.4,342.5 1153.7,346.0 1153.0,348.7 1152.3,349.1 1151.6,349.4 1150.9,349.8 1150.2,349.4 1149.5,348.7 1148.8,348.0 1148.1,347.3 1147.4,349.4 1146.7,351.5 1146.0,353.6 1145.3,354.1 1144.6,350.6 1143.9,347.0 1143.2,343.5 1142.5,342.7 1141.8,344.0 1141.1,345.2 1140.4,346.4 1139.7,345.9 1139.0,345.0 1138.3,344.2 1137.6,343.1 1136.9,341.3 1136.2,339.4 1135.5,337.5 1134.8,336.3 1134.1,335.9 1133.4,335.4 1132.7,335.0 1132.0,336.6 1131.3,339.0 1130.6,341.4 1129.9,343.7 1129.2,343.6 1128.5,343.5 1127.8,343.5 1127.1,343.4 1126.4,343.5 1125.7,343.6 1125.0,343.7 1124.3,345.7 1123.6,348.9 1122.9,352.4 1122.2,357.9 1121.5,356.7 1120.8,354.9 1120.1,353.0 1119.4,350.2 1118.7,351.3 1118.0,352.4 1117.3,353.4 1116.6,353.3 1115.9,351.8 1115.2,350.2 1114.5,348.7 1113.8,348.2 1113.1,348.0 1112.4,347.8 1111.7,347.6 1111.0,348.3 1110.3,349.0 1109.6,349.7 1108.9,350.3 1108.2,350.9 1107.5,351.5 1106.8,352.1 1106.1,350.4 1105.4,347.5 1104.7,344.6 1104.0,341.7 1103.3,342.7 1102.6,343.8 1101.9,345.0 1101.2,346.2 1100.5,347.4 1099.8,348.7 1099.1,350.0 1098.4,352.8 1097.7,357.1 1097.0,361.3 1096.3,365.5 1095.6,363.8 1094.9,360.8 1094.2,357.7 1093.5,354.9 1092.8,353.5 1092.1,352.1 1091.4,350.7 1090.7,350.5 1090.0,352.2 1089.3,354.0 1088.6,355.7 1087.9,355.5 1087.2,354.5 1086.5,353.4 1085.8,352.4 1085.1,353.1 1084.4,353.7 1083.7,354.4 1083.0,355.1 1082.3,355.6 1081.6,356.2 1080.9,356.7 1080.2,357.6 1079.5,358.7 1078.8,359.8 1078.1,360.9 1077.4,358.2 1076.7,354.8 1076.0,351.4 1075.3,348.7 1074.6,349.8 1073.9,351.0 1073.2,352.1 1072.5,352.3 1071.8,351.5 1071.1,350.6 1070.4,349.7 1069.7,351.0 1069.0,353.3 1068.3,355.5 1067.6,357.6 1066.9,355.3 1066.2,353.0 1065.5,350.8 1064.8,350.7 1064.1,355.6 1063.4,360.5 1062.7,365.4 1062.0,365.3 1061.3,361.7 1060.6,358.1 1059.9,354.5 1059.2,354.0 1058.5,353.8 1057.8,353.7 1057.1,353.5 1056.4,353.3 1055.7,353.1 1055.0,352.8 1054.3,352.4 1053.6,351.8 1052.9,351.2 1052.2,350.4 1051.5,349.9 1050.8,349.5 1050.1,349.1 1049.4,349.0 1048.7,349.2 1048.0,349.4 1047.3,349.6 1046.6,349.7 1045.9,349.6 1045.2,349.5 1044.5,349.4 1043.8,350.4 1043.1,352.0 1042.4,353.6 1041.7,355.2 1041.0,352.8 1040.3,350.1 1039.6,347.5 1038.9,345.8 1038.2,347.7 1037.5,349.7 1036.8,351.6 1036.1,352.8 1035.4,353.1 1034.7,353.4 1034.0,353.8 1033.3,354.1 1032.6,354.4 1031.9,354.7 1031.2,354.7 1030.5,351.8 1029.8,349.0 1029.1,346.2 1028.4,344.9 1027.7,346.4 1027.0,347.9 1026.3,349.4 1025.6,348.8 1024.9,347.2 1024.2,345.6 1023.5,344.1 1022.8,344.9 1022.1,345.9 1021.4,346.8 1020.7,348.0 1020.0,350.0 1019.3,351.9 1018.6,353.9 1017.9,355.2 1017.2,356.0 1016.5,356.8 1015.8,357.6 1015.1,355.8 1014.4,353.5 1013.7,351.1 1013.0,349.0 1012.3,347.9 1011.6,346.9 1010.9,345.8 1010.2,346.8 1009.5,350.7 1008.8,354.7 1008.1,358.6 1007.4,357.6 1006.7,354.6 1006.0,351.6 1005.3,348.6 1004.6,350.4 1003.9,352.2 1003.2,354.1 1002.5,355.0 1001.8,353.8 1001.1,352.6 1000.4,351.3 999.7,350.4 999.0,349.8 998.3,349.2 997.6,348.6 996.9,348.9 996.2,349.3 995.5,349.6 994.8,350.2 994.1,351.4 993.4,352.6 992.7,353.9 992.0,353.3 991.3,350.6 990.6,347.9 989.9,345.2 989.2,343.9 988.5,343.2 987.8,342.6 987.1,341.9 986.4,341.9 985.7,341.9 985.0,342.0 984.3,341.9 983.6,341.6 982.9,341.3 982.2,340.9 981.5,342.4 980.8,344.9 980.1,347.5 979.4,350.1 978.7,349.9 978.0,349.5 977.3,349.0 976.6,348.7 975.9,348.9 975.2,349.2 974.5,349.4 973.8,349.9 973.1,350.7 972.4,351.5 971.7,352.3 971.0,352.9 970.3,353.4 969.6,354.0 968.9,354.4 968.2,353.1 967.5,351.9 966.8,350.7 966.1,350.2 965.4,351.0 964.7,352.7 964.0,355.4 963.3,357.8 962.6,360.0 961.9,361.9 961.2,362.2 960.5,361.8 959.8,361.4 959.1,361.0 958.4,361.4 957.7,364.4 957.0,367.4 956.3,370.4 955.6,369.5 954.9,365.1 954.2,360.7 953.5,356.3 952.8,355.9 952.1,356.4 951.4,357.0 950.7,357.3 950.0,355.5 949.3,353.6 948.6,351.8 947.9,351.1 947.2,352.3 946.5,353.4 945.8,354.5 945.1,354.7 944.4,354.3 943.7,354.0 943.0,353.6 942.3,354.5 941.6,355.4 940.9,356.3 940.2,356.4 939.5,354.3 938.8,352.1 938.1,349.9 937.4,349.8 936.7,351.2 936.0,352.6 935.3,353.9 934.6,356.6 933.9,359.4 933.2,362.3 932.5,364.4 931.8,362.6 931.1,360.7 930.4,358.8 929.7,356.8 929.0,354.6 928.3,352.4 927.6,350.1 926.9,350.6 926.2,352.0 925.5,353.5 924.8,354.9 924.1,354.8 923.4,354.6 922.7,354.5 922.0,355.0 921.3,357.0 920.6,359.1 919.9,361.1 919.2,363.0 918.5,364.3 917.8,365.4 917.1,366.5 916.4,364.9 915.7,363.1 915.0,361.2 914.3,359.6 913.6,359.2 912.9,358.9 912.2,358.5 911.5,357.7 910.8,356.2 910.1,354.8 909.4,353.4 908.7,353.7 908.0,354.6 907.3,355.4 906.6,356.2 905.9,355.4 905.2,354.5 904.5,353.7 903.8,354.0 903.1,356.6 902.4,359.2 901.7,361.7 901.0,362.1 900.3,361.1 899.6,360.2 898.9,359.2 898.2,358.3 897.5,357.4 896.8,356.5 896.1,355.6 895.4,354.6 894.7,353.7 894.0,352.8 893.3,353.4 892.6,355.7 891.9,357.9 891.2,360.2 890.5,358.5 889.8,355.9 889.1,353.3 888.4,351.0 887.7,353.4 887.0,355.8 886.3,358.1 885.6,358.6 884.9,355.8 884.2,353.1 883.5,350.4 882.8,348.4 882.1,346.8 881.4,345.1 880.7,343.5 880.0,347.4 879.3,351.4 878.6,355.5 877.9,358.7 877.2,359.3 876.5,359.8 875.8,360.4 875.1,358.8 874.4,355.5 873.7,352.2 873.0,348.9 872.3,349.3 871.6,350.4 870.9,351.6 870.2,352.8 869.5,354.4 868.8,356.0 868.1,357.6 867.4,358.1 866.7,357.1 866.0,356.1 865.3,355.1 864.6,356.1 863.9,357.8 863.2,359.5 862.5,361.2 861.8,361.1 861.1,360.9 860.4,360.8 859.7,361.1 859.0,362.7 858.3,364.3 857.6,365.9 856.9,366.1 856.2,365.4 855.5,364.6 854.8,363.9 854.1,363.9 853.4,364.1 852.7,364.2 852.0,364.3 851.3,364.3 850.6,364.4 849.9,364.4 849.2,364.1 848.5,363.2 847.8,362.4 847.1,361.6 846.4,361.8 845.7,362.4 845.0,362.9 844.3,363.3 843.6,358.2 842.9,353.3 842.2,349.8 841.5,348.8 840.8,352.2 840.1,354.4 839.4,356.6 838.7,357.2 838.0,356.9 837.3,356.5 836.6,356.2 835.9,357.5 835.2,359.0 834.5,360.6 833.8,361.1 833.1,357.6 832.4,354.1 831.7,350.5 831.0,350.7 830.3,354.7 829.6,358.6 828.9,362.6 828.2,364.1 827.5,364.8 826.8,365.5 826.1,365.7 825.4,360.1 824.7,354.5 824.0,348.8 823.3,345.5 822.6,343.9 821.9,340.5 821.2,337.6 820.5,339.6 819.8,342.6 819.1,345.5 818.4,348.5 817.7,349.7 817.0,350.7 816.3,351.8 815.6,352.5 814.9,351.9 814.2,351.2 813.5,350.6 812.8,350.3 812.1,350.2 811.4,350.1 810.7,350.1 810.0,349.9 809.3,349.8 808.6,349.6 807.9,349.5 807.2,349.8 806.5,350.0 805.8,350.2 805.1,350.0 804.4,349.0 803.7,348.1 803.0,347.1 802.3,348.1 801.6,350.0 800.9,351.9 800.2,353.8 799.5,354.8 798.8,355.8 798.1,356.8 797.4,356.6 796.7,352.8 796.0,349.0 795.3,345.2 794.6,344.4 793.9,346.0 793.2,347.6 792.5,349.2 791.8,348.4 791.1,347.2 790.4,345.9 789.7,345.1 789.0,346.5 788.3,347.9 787.6,349.6 786.9,351.2 786.2,352.5 785.5,353.7 784.8,354.8 784.1,354.7 783.4,354.2 782.7,353.6 782.0,353.1 781.3,353.4 780.6,353.6 779.9,353.8 779.2,353.4 778.5,351.3 777.8,349.3 777.1,347.3 776.4,346.6 775.7,346.8 775.0,347.1 774.3,347.3 773.6,350.1 772.9,353.4 772.2,358.2 771.5,361.9 770.8,360.0 770.1,358.1 769.4,354.7 768.7,353.0 768.0,353.6 767.3,354.2 766.6,354.8 765.9,354.1 765.2,353.0 764.5,351.9 763.8,350.9 763.1,353.2 762.4,355.5 761.7,357.7 761.0,360.2 760.3,362.9 759.6,365.6 758.9,368.4 758.2,368.3 757.5,366.7 756.8,365.1 756.1,363.4 755.4,364.5 754.7,365.7 754.0,366.9 753.3,367.1 752.6,363.2 751.9,359.3 751.2,355.4 750.5,354.6 749.8,356.9 749.1,359.2 748.4,361.4 747.7,360.6 747.0,358.9 746.3,357.2 745.6,355.9 744.9,358.7 744.2,361.6 743.5,364.4 742.8,365.0 742.1,361.5 741.4,358.1 740.7,354.7 740.0,355.2 739.3,357.8 738.6,360.3 737.9,362.9 737.2,361.4 736.5,359.7 735.8,358.1 735.1,357.2 734.4,358.8 733.7,360.3 733.0,361.9 732.3,362.4 731.6,362.0 730.9,361.6 730.2,361.2 729.5,362.8 728.8,364.8 728.1,366.8 727.4,368.6 726.7,368.6 726.0,368.6 725.3,368.5 724.6,367.3 723.9,364.3 723.2,361.4 722.5,358.4 721.8,357.7 721.1,357.9 720.4,358.1 719.7,358.4 719.0,358.5 718.3,358.7 717.6,358.8 716.9,358.8 716.2,358.0 715.5,357.3 714.8,356.6 714.1,356.1 713.4,356.0 712.7,355.8 712.0,355.6 711.3,358.4 710.6,361.8 709.9,365.2 709.2,367.8 708.5,366.5 707.8,365.0 707.1,362.7 706.4,361.3 705.7,361.1 705.0,360.9 704.3,360.7 703.6,360.4 702.9,360.2 702.2,360.8 701.5,361.4 700.8,359.9 700.1,358.4 699.4,356.9 698.7,355.4 698.0,354.1 697.3,352.7 696.6,351.3 695.9,352.5 695.2,355.3 694.5,358.1 693.8,361.0 693.1,358.8 692.4,358.2 691.7,358.0 691.0,358.2 690.3,360.5 689.6,361.3 688.9,361.0 688.2,361.0 687.5,361.2 686.8,361.4 686.1,361.6 685.4,361.5 684.7,361.3 684.0,361.1 683.3,360.9 682.6,360.0 681.9,359.1 681.2,358.1 680.5,358.2 679.8,359.9 679.1,361.5 678.4,363.2 677.7,363.7 677.0,363.5 676.3,363.3 675.6,363.0 674.9,363.4 674.2,363.7 673.5,364.1 672.8,364.5 672.1,365.1 671.4,365.6 670.7,366.1 670.0,367.0 669.3,368.1 668.6,369.2 667.9,370.3 667.2,370.4 666.5,370.3 665.8,370.2 665.1,369.9 664.4,368.1 663.7,366.4 663.0,364.6 662.3,363.5 661.6,363.4 660.9,363.4 660.2,363.3 659.5,362.9 658.8,362.5 658.1,362.0 657.4,361.5 656.7,363.9 656.0,366.4 655.3,368.9 654.6,370.4 653.9,369.2 653.2,368.0 652.5,366.8 651.8,366.7 651.1,367.7 650.4,368.6 649.7,369.4 649.0,367.9 648.3,366.0 647.6,364.0 646.9,362.0 646.2,359.0 645.5,356.0 644.8,353.1 644.1,353.5 643.4,358.3 642.7,363.1 642.0,367.9 641.3,367.4 640.6,364.8 639.9,362.2 639.2,359.7 638.5,362.5 637.8,365.3 637.1,368.1 636.4,368.4 635.7,362.9 635.0,357.3 634.3,351.8 633.6,352.7 632.9,358.1 632.2,363.5 631.5,368.9 630.8,367.5 630.1,365.2 629.4,362.9 628.7,360.9 628.0,360.9 627.3,360.9 626.6,360.9 625.9,361.8 625.2,363.9 624.5,366.1 623.8,368.2 623.1,369.1 622.4,369.6 621.7,370.1 621.0,370.6 620.3,370.4 619.6,370.3 618.9,370.2 618.2,369.6 617.5,368.1 616.8,366.7 616.1,365.2 615.4,364.7 614.7,364.6 614.0,364.6 613.3,362.8 612.6,359.9 611.9,357.2 611.2,356.1 610.5,355.1 609.8,354.8 609.1,354.5 608.4,354.3 607.7,354.5 607.0,355.3 606.3,356.1 605.6,356.9 604.9,354.7 604.2,351.8 603.5,348.8 602.8,346.4 602.1,350.4 601.4,354.5 600.7,358.5 600.0,360.9 599.3,360.5 598.6,360.0 597.9,359.6 597.2,358.2 596.5,356.4 595.8,354.6 595.1,352.7 594.4,354.6 593.7,356.6 593.0,358.7 592.3,360.1 591.6,359.5 590.9,358.9 590.2,358.4 589.5,358.1 588.8,358.1 588.1,358.1 587.4,358.1 586.7,359.2 586.0,360.4 585.3,361.6 584.6,362.8 583.9,363.3 583.2,363.8 582.5,364.3 581.8,364.2 581.1,363.2 580.4,362.1 579.7,361.1 579.0,361.1 578.3,361.6 577.6,362.0 576.9,362.5 576.2,361.7 575.5,361.0 574.8,360.2 574.1,359.0 573.4,357.0 572.7,355.0 572.0,352.9 571.3,352.8 570.6,354.1 569.9,355.5 569.2,356.8 568.5,357.3 567.8,357.7 567.1,358.1 566.4,358.3 565.7,357.9 565.0,357.4 564.3,356.9 563.6,356.9 562.9,357.3 562.2,357.8 561.5,358.2 560.8,359.8 560.1,362.0 559.4,364.1 558.7,366.2 558.0,365.7 557.3,365.2 556.6,364.7 555.9,363.5 555.2,360.7 554.5,358.0 553.8,354.7 553.1,352.9 552.4,352.7 551.7,352.4 551.0,352.0 550.3,352.5 549.6,353.0 548.9,353.2 548.2,352.2 547.5,346.9 546.8,342.3 546.1,338.8 545.4,336.6 544.7,336.2 544.0,335.8 543.3,335.4 542.6,335.3 541.9,335.9 541.2,336.5 540.5,337.4 539.8,340.0 539.1,342.6 538.4,344.9 537.7,347.4 537.0,350.3 536.3,353.1 535.6,355.9 534.9,357.3 534.2,357.9 533.5,358.6 532.8,359.3 532.1,360.8 531.4,362.3 530.7,363.4 530.0,363.8 529.3,364.2 528.6,364.5 527.9,364.9 527.2,365.0 526.5,365.0 525.8,365.1 525.1,365.2 524.4,365.2 523.7,365.2 523.0,365.3 522.3,365.5 521.6,366.3 520.9,366.8 520.2,365.9 519.5,365.4 518.8,365.7 518.1,366.6 517.4,368.3 516.7,369.0 516.0,368.6 515.3,368.3 514.6,367.9 513.9,366.0 513.2,364.1 512.5,362.2 511.8,360.2 511.1,358.2 510.4,356.8 509.7,355.9 509.0,355.7 508.3,355.9 507.6,356.2 506.9,356.7 506.2,358.3 505.5,360.0 504.8,361.4 504.1,362.8 503.4,364.3 502.7,364.8 502.0,364.7 501.3,364.5 500.6,363.8 499.9,363.1 499.2,362.3 498.5,362.1 497.8,362.5 497.1,363.1 496.4,363.6 495.7,359.5 495.0,355.4 494.3,352.4 493.6,351.1 492.9,353.9 492.2,356.9 491.5,360.3 490.8,362.4 490.1,363.8 489.4,364.9 488.7,365.9 488.0,366.6 487.3,366.3 486.6,366.1 485.9,365.8 485.2,365.7 484.5,365.6 483.8,365.5 483.1,365.7 482.4,366.1 481.7,366.6 481.0,367.1 480.3,367.2 479.6,367.0 478.9,366.6 478.2,366.2 477.5,364.8 476.8,363.0 476.1,360.8 475.4,359.2 474.7,359.8 474.0,360.9 473.3,362.1 472.6,363.3 471.9,364.5 471.2,365.7 470.5,366.9 469.8,368.0 469.1,368.8 468.4,369.4 467.7,369.9 467.0,370.4 466.3,370.6 465.6,371.0 464.9,370.6 464.2,369.3 463.5,367.9 462.8,366.6 462.1,366.6 461.4,366.9 460.7,367.2 460.0,367.5 459.3,367.2 458.6,366.9 457.9,366.7 457.2,366.5 456.5,366.5 455.8,366.5 455.1,366.5 454.4,366.9 453.7,367.5 453.0,368.2 452.3,368.8 451.6,368.3 450.9,367.8 450.2,367.3 449.5,367.0 448.8,367.5 448.1,368.2 447.4,369.1 446.7,370.0 446.0,370.9 445.3,372.0 444.6,373.6 443.9,374.0 443.2,373.3 442.5,371.5 441.8,369.8 441.1,368.3 440.4,366.9 439.7,365.6 439.0,364.2 438.3,362.6 437.6,361.2 436.9,360.0 436.2,362.1 435.5,365.6 434.8,369.2 434.1,372.7 433.4,372.0 432.7,371.2 432.0,370.4 431.3,369.4 430.6,354.9 429.9,333.8 429.2,332.4 428.5,332.7 427.8,334.3 427.1,335.9 426.4,337.6 425.7,336.2 425.0,334.4 424.3,332.6 423.6,331.1 422.9,331.5 422.2,331.8 421.5,332.2 420.8,332.9 420.1,334.0 419.4,335.1 418.7,336.2 418.0,338.5 417.3,341.3 416.6,344.1 415.9,346.7 415.2,342.5 414.5,338.3 413.8,334.1 413.1,331.8 412.4,333.6 411.7,335.4 411.0,337.2 410.3,339.0 409.6,340.8 408.9,342.6 408.2,344.4 407.5,342.6 406.8,340.3 406.1,338.1 405.4,336.5 404.7,337.6 404.0,338.8 403.3,340.0 402.6,338.9 401.9,335.3 401.2,331.7 400.5,328.1 399.8,328.2 399.1,329.3 398.4,330.5 397.7,331.8 397.0,334.8 396.3,337.8 395.6,340.8 394.9,342.2 394.2,340.6 393.5,339.0 392.8,337.4 392.1,336.7 391.4,336.5 390.7,336.3 390.0,336.1 389.3,336.2 388.6,336.3 387.9,336.4 387.2,336.4 386.5,336.2 385.8,336.1 385.1,335.9 384.4,336.0 383.7,336.2 383.0,336.4 382.3,336.6 381.6,338.0 380.9,339.7 380.2,341.4 379.5,342.9 378.8,342.4 378.1,341.8 377.4,341.3 376.7,341.1 376.0,341.7 375.3,342.2 374.6,342.7 373.9,342.3 373.2,341.4 372.5,340.6 371.8,339.7 371.1,340.1 370.4,340.5 369.7,340.9 369.0,341.0 368.3,340.0 367.6,338.9 366.9,337.9 366.2,337.2 365.5,336.9 364.8,336.6 364.1,336.2 363.4,336.7 362.7,337.4 362.0,338.1 361.3,338.7 360.6,338.8 359.9,339.0 359.2,339.1 358.5,340.2 357.8,342.7 357.1,345.2 356.4,347.6 355.7,346.7 355.0,344.3 354.3,342.0 353.6,339.7 352.9,340.7 352.2,341.8 351.5,342.9 350.8,344.3 350.1,346.6 349.4,348.9 348.7,351.2 348.0,351.5 347.3,350.3 346.6,349.1 345.9,348.0 345.2,346.1 344.5,344.1 343.8,342.1 343.1,340.4 342.4,339.7 341.7,339.1 341.0,338.4 340.3,338.3 339.6,338.9 338.9,339.4 338.2,339.9 337.5,340.3 336.8,340.5 336.1,340.8 335.4,341.1 334.7,344.1 334.0,347.0 333.3,350.0 332.6,351.2 331.9,348.8 331.2,346.4 330.5,344.0 329.8,341.5 329.1,339.0 328.4,336.4 327.7,333.9 327.0,334.5 326.3,335.4 325.6,336.3 324.9,337.6 324.2,340.2 323.5,342.8 322.8,345.3 322.1,345.7 321.4,343.9 320.7,342.0 320.0,340.2 319.3,339.7 318.6,339.6 317.9,339.5 317.2,339.3 316.5,337.2 315.8,335.0 315.1,332.8 314.4,332.9 313.7,336.9 313.0,340.9 312.3,344.9 311.6,345.2 310.9,343.6 310.2,342.0 309.5,340.4 308.8,341.7 308.1,343.1 307.4,344.5 306.7,345.7 306.0,346.1 305.3,346.6 304.6,347.0 303.9,346.5 303.2,345.0 302.5,343.6 301.8,342.1 301.1,342.1 300.4,342.5 299.7,342.8 299.0,343.2 298.3,343.6 297.6,344.0 296.9,344.4 296.2,344.4 295.5,344.0 294.8,343.6 294.1,343.2 293.4,342.5 292.7,341.6 292.0,340.7 291.3,339.7 290.6,337.0 289.9,334.3 289.2,331.7 288.5,330.5 287.8,333.0 287.1,335.4 286.4,337.9 285.7,339.5 285.0,340.4 284.3,341.2 283.6,342.1 282.9,341.5 282.2,340.6 281.5,339.7 280.8,339.2 280.1,340.6 279.4,342.4 278.7,344.2 278.0,344.8 277.3,343.6 276.6,342.3 275.9,341.1 275.2,341.8 274.5,343.2 273.8,344.6 273.1,346.0 272.4,344.2 271.7,342.3 271.0,340.4 270.3,338.9 269.6,338.5 268.9,338.1 268.2,337.6 267.5,338.6 266.8,340.5 266.1,342.3 265.4,344.2 264.7,342.5 264.0,340.4 263.3,338.3 262.6,337.1 261.9,339.9 261.2,342.8 260.5,345.6 259.8,346.6 259.1,345.7 258.4,344.7 257.7,343.8 257.0,344.8 256.3,345.0 255.6,345.2 254.9,345.1 254.2,343.8 253.5,343.5 252.8,343.6 252.1,343.7 251.4,344.0 250.7,344.3 250.0,344.5 249.3,344.6 248.6,344.6 247.9,344.5 247.2,344.5 246.5,344.9 245.8,345.4 245.1,345.8 244.4,345.7 243.7,343.5 243.0,341.3 242.3,339.2 241.6,339.8 240.9,343.1 240.2,346.3 239.5,349.6 238.8,347.7 238.1,344.5 237.4,341.3 236.7,338.5 236.0,339.2 235.3,339.9 234.6,340.6 233.9,341.3 233.2,342.0 232.5,342.7 231.8,343.4 231.1,344.0 230.4,344.7 229.7,345.3 229.0,346.0 228.3,345.3 227.6,344.6 226.9,343.9 226.2,343.2 225.5,342.6 224.8,342.0 224.1,341.4 223.4,340.7 222.7,340.0 222.0,339.2 221.3,338.4 220.6,338.3 219.9,338.4 219.2,338.4 218.5,338.7 217.8,340.7 217.1,342.8 216.4,344.8 215.7,346.0 215.0,346.1 214.3,346.1 213.6,346.0 212.9,345.8 212.2,345.5 211.5,345.1 210.8,344.7 210.1,343.3 209.4,341.9 208.7,340.6 208.0,340.8 207.3,345.1 206.6,349.3 205.9,353.5 205.2,352.8 204.5,348.5 203.8,344.2 203.1,339.6 202.4,341.6 201.7,344.6 201.0,347.6 200.3,350.0 199.6,349.4 198.9,348.8 198.2,348.2 197.5,347.6 196.8,347.1 196.1,346.5 195.4,346.0 194.7,344.5 194.0,342.6 193.3,340.8 192.6,339.1 191.9,342.4 191.2,345.7 190.5,349.4 189.8,352.0 189.1,351.7 188.4,351.5 187.7,351.3 187.0,351.5 186.3,352.1 185.6,352.6 184.9,353.2 184.2,353.5 183.5,353.8 182.8,354.2 182.1,354.4 181.4,354.0 180.7,353.6 180.0,353.2 179.3,352.5 178.6,351.2 177.9,349.7 177.2,348.2 176.5,348.4 175.8,349.0 175.1,349.7 174.4,350.3 173.7,350.3 173.0,350.3 172.3,350.4 171.6,350.2 170.9,349.7 170.2,349.2 169.5,348.7 168.8,349.0 168.1,349.7 167.4,350.5 166.7,351.2 166.0,353.0 165.3,354.9 164.6,356.8 163.9,358.2 163.2,357.8 162.5,357.4 161.8,357.0 161.1,356.2 160.4,355.1 159.7,354.0 159.0,352.8 158.3,355.8 157.6,359.8 156.9,363.7 156.2,367.1 155.5,365.9 154.8,364.8 154.1,363.6 153.4,362.5 152.7,361.3 152.0,360.1 151.3,359.0 150.6,359.4 149.9,360.6 149.2,361.8 148.5,362.9 147.8,361.9 147.1,360.8 146.4,359.7 145.7,359.5 145.0,361.4 144.3,363.3 143.6,365.2 142.9,365.2 142.2,363.6 141.5,362.0 140.8,360.4 140.1,358.3 139.4,356.0 138.7,353.7 138.0,352.2 137.3,355.4 136.6,358.7 135.9,361.9 135.2,363.7 134.5,363.5 133.8,363.4 133.1,363.2 132.4,362.6 131.7,361.8 131.0,361.0 130.3,360.2 129.6,364.3 128.9,368.4 128.2,372.5 127.5,374.5 126.8,371.7 126.1,369.0 125.4,366.3 124.7,366.6 124.0,368.8 123.3,371.1 122.6,373.1 121.9,376.7 121.2,380.5 120.5,384.3 119.8,386.8 119.1,383.1 118.4,379.5 117.7,375.9 117.0,372.3 116.3,368.7 115.6,365.1 114.9,361.4 114.2,363.7 113.5,367.8 112.8,371.9 112.1,375.9 111.4,378.2 110.7,380.6 110.0,382.9 109.3,384.7 108.6,385.7 107.9,386.8 107.2,387.8 106.5,386.1 105.8,382.8 105.1,379.5 104.4,376.3 103.7,376.9 103.0,377.9 102.3,378.9 101.6,379.5 100.9,378.6 100.2,377.7 99.5,376.7 98.8,376.8 98.1,377.9 97.4,379.1 96.7,380.2 96.0,379.7 95.3,378.7 94.6,377.9 93.9,377.3 93.2,381.7 92.5,384.4 91.8,384.4 91.1,384.3 90.4,384.5 89.7,384.6 89.0,384.7 88.3,384.7 87.6,384.7 86.9,384.7 86.2,384.8 85.5,385.0 84.8,385.2 84.1,385.4 83.4,385.4 82.7,384.9 82.0,384.4 81.3,383.9 80.6,383.9 79.9,395.0 79.2,395.0 78.5,395.1 77.8,395.1 77.1,395.1 76.4,395.1 75.7,395.1 75.0,395.0 74.3,395.0 73.6,395.0 72.9,395.0 72.2,395.0 71.5,395.0 70.8,395.0 70.1,395.0 69.4,395.0 68.7,395.1 68.0,395.1" fill="#00ff00"/>
<polygon points="1293.0,340.2 1293.7,340.6 1294.4,341.0 1295.1,341.4 1295.8,341.2 1296.5,339.5 1297.2,337.6 1297.9,335.7 1298.6,335.4 1299.3,336.1 1300.0,336.9 1300.7,337.6 1301.4,336.7 1302.1,335.2 1302.8,331.6 1303.5,328.2 1304.2,325.6 1304.9,323.0 1305.6,322.9 1306.3,323.4 1307.0,324.0 1307.7,324.6 1308.4,325.5 1309.1,325.7 1309.8,325.8 1310.5,325.9 1311.2,325.8 1311.9,325.0 1312.6,324.3 1313.3,323.5 1314.0,323.3 1314.7,323.6 1315.4,323.9 1316.1,324.4 1316.8,325.4 1317.5,326.5 1318.2,327.6 1318.9,328.4 1319.6,326.6 1320.3,324.8 1321.0,323.1 1321.7,322.7 1322.4,324.3 1323.1,325.7 1323.8,326.4 1324.5,324.8 1325.2,322.5 1325.9,320.1 1326.6,317.9 1327.3,320.6 1328.0,323.2 1328.7,325.8 1329.4,326.8 1330.1,324.6 1330.8,323.2 1331.5,322.5 1332.2,321.5 1332.9,320.4 1333.6,319.4 1334.3,318.3 1335.0,320.1 1335.7,321.9 1336.4,323.8 1337.1,325.8 1337.8,328.3 1338.5,329.6 1339.2,330.6 1339.9,330.3 1340.6,329.0 1341.3,327.7 1342.0,326.5 1342.7,323.4 1343.4,320.2 1344.1,317.0 1344.8,315.2 1345.5,319.3 1346.2,324.6 1346.9,329.8 1347.6,331.7 1348.3,330.3 1349.0,329.0 1349.7,327.7 1350.4,328.2 1351.1,329.1 1351.8,330.0 1352.5,330.7 1353.2,330.0 1353.9,328.6 1354.6,327.2 1355.3,325.8 1356.0,324.7 1356.7,323.5 1357.4,322.3 1358.1,320.9 1358.8,319.5 1359.5,318.0 1360.2,316.8 1360.9,318.5 1361.6,320.3 1362.3,322.0 1363.0,322.8 1363.7,322.1 1364.4,321.3 1365.1,320.6 1365.8,319.8 1366.5,319.0 1367.2,318.2 1367.9,317.4 1367.9,345.5 1367.2,344.3 1366.5,343.1 1365.8,341.8 1365.1,342.6 1364.4,347.7 1363.7,352.8 1363.0,357.9 1362.3,359.5 1361.6,359.0 1360.9,358.6 1360.2,357.9 1359.5,355.2 1358.8,352.2 1358.1,349.3 1357.4,347.3 1356.7,348.2 1356.0,349.0 1355.3,349.8 1354.6,349.2 1353.9,347.3 1353.2,345.4 1352.5,343.6 1351.8,344.0 1351.1,344.6 1350.4,345.3 1349.7,345.4 1349.0,342.5 1348.3,339.6 1347.6,336.7 1346.9,337.0 1346.2,340.8 1345.5,344.5 1344.8,348.8 1344.1,348.0 1343.4,345.9 1342.7,343.7 1342.0,342.2 1341.3,346.3 1340.6,350.4 1339.9,354.5 1339.2,355.7 1338.5,352.8 1337.8,349.7 1337.1,346.0 1336.4,345.6 1335.7,346.4 1335.0,347.2 1334.3,348.0 1333.6,347.0 1332.9,346.0 1332.2,344.9 1331.5,344.6 1330.8,345.6 1330.1,346.8 1329.4,348.3 1328.7,348.5 1328.0,348.0 1327.3,347.4 1326.6,346.9 1325.9,348.6 1325.2,350.3 1324.5,352.0 1323.8,352.6 1323.1,350.1 1322.4,347.4 1321.7,344.8 1321.0,344.7 1320.3,346.4 1319.6,348.1 1318.9,349.8 1318.2,350.9 1317.5,352.0 1316.8,353.0 1316.1,353.6 1315.4,352.8 1314.7,351.6 1314.0,350.5 1313.3,349.7 1312.6,349.0 1311.9,348.4 1311.2,347.8 1310.5,348.7 1309.8,349.8 1309.1,351.0 1308.4,351.3 1307.7,345.7 1307.0,340.2 1306.3,334.6 1305.6,333.5 1304.9,338.1 1304.2,344.8 1303.5,351.1 1302.8,354.1 1302.1,356.2 1301.4,356.4 1300.7,356.3 1300.0,355.9 1299.3,355.5 1298.6,355.2 1297.9,355.2 1297.2,355.8 1296.5,356.3 1295.8,356.8 1295.1,357.2 1294.4,357.5 1293.7,357.9 1293.0,358.2" fill="#00ff00"/>
<polyline points="47.0,205.3 47.3,268.2 47.6,214.4 47.9,268.3 48.2,213.7 48.5,278.3 48.8,219.2 49.1,285.6 49.4,223.3 49.7,280.2 50.0,222.5 50.3,233.9 50.6,205.3 50.9,249.3 51.2,202.2 51.5,235.0 51.8,205.8 52.1,245.1 52.4,206.3 52.7,247.0 53.0,197.1 53.3,248.1 53.6,200.8 53.9,242.6 54.2,199.7 54.5,236.3 54.8,198.7 55.1,248.7 55.4,197.3 55.7,240.2 56.0,208.0 56.3,240.2 56.6,209.0 56.9,238.0 57.0,215.0 57.3,69.2 57.6,225.0 57.9,84.0 58.2,210.0 58.5,100.0 58.8,121.5 59.1,201.8 59.4,117.3 59.7,201.6 60.0,119.6 60.3,218.2 60.6,122.1 60.9,208.4 61.2,122.7 61.5,202.4 61.8,124.4 62.1,216.5 62.4,128.1 62.7,231.1 63.0,125.3 63.3,224.3 64.5,120.5 64.8,234.0 65.1,130.5 65.4,230.7 65.7,121.1 66.0,222.8 66.3,116.5 66.6,229.5 66.9,126.2 67.2,221.7 67.5,200.0 67.6,328.0 67.7,349.0 67.8,393.0 68.0,388.9 68.7,395.2 69.4,388.8 70.1,395.1 70.8,389.1 71.5,394.8 72.2,388.9 72.9,393.9 73.6,388.4 74.3,395.8 75.0,388.8 75.7,394.9 76.4,388.9 77.1,394.9 77.8,390.0 78.5,395.5 79.2,389.6 79.9,395.5 80.6,372.6 81.3,383.9 82.0,372.5 82.7,384.3 83.4,373.5 84.1,386.0 84.8,372.7 85.5,385.5 86.2,371.9 86.9,384.4 87.6,374.0 88.3,384.5 89.0,373.5 89.7,385.6 90.4,372.7 91.1,384.6 91.8,372.3 92.5,384.6 93.2,365.4 93.9,379.1 94.6,351.3 95.3,386.1 96.0,349.5 96.7,381.5 97.4,345.9 98.1,378.6 98.8,349.1 99.5,376.8 100.2,347.5 100.9,377.8 101.6,348.9 102.3,379.3 103.0,343.0 103.7,377.8 104.4,326.3 105.1,381.8 105.8,333.3 106.5,388.4 107.2,338.6 107.9,387.1 108.6,344.1 109.3,387.9 110.0,342.2 110.7,380.3 111.4,332.8 112.1,376.1 112.8,331.3 113.5,366.2 114.2,326.4 114.9,361.7 115.6,327.9 116.3,369.2 117.0,331.9 117.7,375.0 118.4,327.9 119.1,383.1 119.8,324.6 120.5,385.1 121.2,325.0 121.9,380.1 122.6,319.7 123.3,369.5 124.0,318.6 124.7,363.5 125.4,315.5 126.1,369.6 126.8,321.3 127.5,373.4 128.2,324.1 128.9,369.4 129.6,319.1 130.3,361.1 131.0,316.6 131.7,364.3 132.4,317.1 133.1,362.8 133.8,313.4 134.5,367.1 135.2,314.9 135.9,359.6 136.6,311.9 137.3,357.8 138.0,322.5 138.7,354.0 139.4,309.9 140.1,356.2 140.8,321.7 141.5,358.8 142.2,322.9 142.9,365.6 143.6,321.0 144.3,362.2 145.0,322.4 145.7,360.0 146.4,321.1 147.1,364.2 147.8,318.4 148.5,362.9 149.2,323.8 149.9,360.6 150.6,325.6 151.3,359.7 152.0,324.4 152.7,361.5 153.4,328.9 154.1,363.5 154.8,325.7 155.5,366.0 156.2,325.1 156.9,363.1 157.6,319.8 158.3,357.6 159.0,318.6 159.7,356.9 160.4,319.2 161.1,357.4 161.8,320.0 162.5,355.1 163.2,316.4 163.9,357.6 164.6,311.8 165.3,355.9 166.0,312.0 166.7,351.1 167.4,312.8 168.1,349.1 168.8,318.5 169.5,348.9 170.2,316.8 170.9,353.2 171.6,313.6 172.3,351.8 173.0,309.8 173.7,349.9 174.4,307.2 175.1,346.6 175.8,309.5 176.5,349.0 177.2,317.2 177.9,349.9 178.6,315.7 179.3,353.1 180.0,320.4 180.7,355.0 181.4,316.0 182.1,353.2 182.8,301.1 183.5,355.8 184.2,308.6 184.9,353.8 185.6,310.5 186.3,351.4 187.0,310.0 187.7,350.6 188.4,316.8 189.1,350.7 189.8,319.2 190.5,349.6 191.2,318.0 191.9,343.4 192.6,315.3 193.3,339.9 194.0,317.9 194.7,345.3 195.4,318.1 196.1,347.7 196.8,322.2 197.5,347.7 198.2,323.7 198.9,350.3 199.6,326.0 200.3,349.2 201.0,324.2 201.7,344.1 202.4,323.2 203.1,340.6 203.8,320.3 204.5,350.7 205.2,322.2 205.9,355.3 206.6,322.4 207.3,346.0 208.0,310.0 208.7,338.3 209.4,319.5 210.1,342.8 210.8,321.0 211.5,348.8 212.2,324.7 212.9,345.4 213.6,320.5 214.3,345.0 215.0,321.9 215.7,346.0 216.4,319.9 217.1,343.5 217.8,319.0 218.5,339.2 219.2,317.5 219.9,337.0 220.6,315.5 221.3,338.7 222.0,316.6 222.7,339.2 223.4,315.1 224.1,342.6 224.8,319.1 225.5,343.6 226.2,320.3 226.9,345.3 227.6,323.9 228.3,346.2 229.0,324.9 229.7,346.8 230.4,325.7 231.1,343.9 231.8,324.0 232.5,343.4 233.2,320.9 233.9,341.4 234.6,319.4 235.3,343.4 236.0,320.0 236.7,338.1 237.4,314.4 238.1,344.7 238.8,322.0 239.5,351.5 240.2,320.1 240.9,341.1 241.6,319.3 242.3,337.5 243.0,320.6 243.7,345.0 244.4,319.0 245.1,346.5 245.8,317.4 246.5,345.0 247.2,316.0 247.9,342.8 248.6,320.4 249.3,349.8 250.0,318.9 250.7,343.5 251.4,319.1 252.1,343.7 252.8,315.3 253.5,343.5 254.2,322.9 254.9,347.4 255.6,324.0 256.3,346.1 257.0,358.0 257.7,345.3 258.4,320.2 259.1,347.0 259.8,315.6 260.5,348.5 261.2,316.1 261.9,342.0 262.6,314.1 263.3,337.6 264.0,316.9 264.7,339.7 265.4,323.9 266.1,345.4 266.8,320.7 267.5,340.6 268.2,322.3 268.9,336.4 269.6,328.6 270.3,346.9 271.0,328.5 271.7,339.4 272.4,325.1 273.1,346.5 273.8,320.3 274.5,344.0 275.2,313.6 275.9,353.3 276.6,311.3 277.3,341.3 278.0,316.4 278.7,344.5 279.4,306.9 280.0,300.0 280.8,301.4 281.5,336.7 282.2,307.2 282.9,338.3 283.6,310.9 284.3,343.4 285.0,319.6 285.7,338.5 286.4,321.1 287.1,335.4 287.8,322.1 288.5,336.4 289.2,319.5 289.9,331.8 290.6,320.5 291.3,339.2 292.0,317.5 292.7,342.3 293.4,319.9 294.1,345.5 294.8,315.1 295.5,344.2 296.2,314.3 296.9,342.2 297.6,315.7 298.3,345.1 299.0,314.7 299.7,343.2 300.4,320.6 301.1,344.4 302.0,367.0 302.5,342.5 303.2,329.3 303.9,346.5 304.6,325.6 305.3,347.2 306.0,314.7 306.7,346.9 307.4,307.0 308.1,345.8 308.8,315.1 309.5,338.7 310.2,311.4 310.9,345.1 311.6,316.3 312.3,348.1 313.0,319.3 313.7,338.2 314.4,319.8 315.1,331.6 315.8,317.7 316.5,336.6 317.2,312.0 317.9,339.3 318.6,312.6 319.3,338.9 320.0,314.8 320.7,343.2 321.4,314.2 322.1,345.0 322.8,314.7 323.5,344.3 324.2,313.8 324.9,341.0 325.6,308.8 326.3,342.3 327.0,307.7 327.7,333.8 328.4,307.9 329.1,339.0 329.8,308.6 330.5,342.7 331.2,310.4 331.9,349.8 332.6,312.1 333.3,351.5 334.0,313.1 334.7,346.2 335.4,313.7 336.1,341.1 336.8,314.8 337.5,340.5 338.2,310.4 338.9,337.2 339.6,310.8 340.3,338.6 341.0,311.9 341.7,338.0 342.4,306.1 343.1,338.3 343.8,309.3 344.5,341.9 345.2,307.8 345.9,349.1 346.6,313.6 347.3,353.8 348.0,314.6 348.7,352.0 349.4,314.3 350.1,347.3 350.8,312.8 351.5,342.2 352.2,311.1 352.9,343.4 353.6,312.2 354.3,341.8 355.0,313.6 355.7,346.2 356.4,319.9 357.1,347.9 357.8,315.9 358.5,340.3 359.2,316.9 359.9,339.2 360.6,317.5 361.3,338.9 362.0,313.3 363.0,299.0 363.4,313.8 364.1,339.2 364.8,311.9 365.5,337.4 366.2,311.8 366.9,340.3 367.6,304.4 368.3,340.8 369.0,313.8 369.7,342.5 370.4,316.4 371.1,340.0 371.8,314.9 372.5,341.1 373.2,321.3 373.9,340.8 374.6,318.8 375.3,340.6 376.0,316.3 376.7,338.7 377.4,312.4 378.1,342.4 378.8,313.1 379.5,343.1 380.2,311.0 380.9,341.2 381.6,299.8 382.3,334.8 383.0,306.4 383.7,338.0 384.4,312.9 385.1,335.2 385.8,309.7 386.5,334.8 387.2,302.7 388.0,301.0 388.6,304.6 389.3,337.3 390.0,311.9 390.7,348.0 391.4,311.9 392.1,338.1 392.8,311.7 393.5,339.5 394.2,306.0 394.9,344.3 395.6,305.0 396.3,337.3 397.0,313.6 397.7,333.2 398.4,317.7 399.1,331.3 400.0,360.0 400.5,330.5 401.2,307.3 401.9,335.9 402.6,307.7 403.3,339.1 404.0,304.8 404.7,337.4 405.4,306.4 406.1,335.7 406.8,304.7 407.5,342.2 408.2,313.8 408.9,342.7 409.6,312.1 410.3,342.2 411.0,310.3 411.7,338.7 412.4,307.6 413.0,300.0 413.8,302.5 414.5,348.4 415.2,308.2 415.9,347.6 416.6,309.7 417.3,340.4 418.0,311.4 418.7,338.2 419.4,312.1 420.1,333.9 420.8,313.6 421.5,347.9 422.2,312.6 422.9,333.4 423.6,307.2 424.3,336.5 425.0,301.4 425.7,333.7 426.4,303.6 427.1,333.6 427.8,305.8 428.5,332.7 429.2,303.0 429.9,336.0 430.6,305.4 431.3,369.3 432.0,324.4 432.7,370.4 433.4,327.6 434.1,374.6 434.8,330.5 435.5,367.5 436.2,329.5 436.9,358.9 437.6,334.6 438.3,361.9 439.0,333.8 439.7,366.4 440.4,336.4 441.1,365.8 441.8,339.4 442.5,374.0 443.2,343.8 443.9,374.1 444.6,346.3 445.3,373.5 446.0,351.5 446.7,370.7 447.4,354.6 448.1,368.2 448.8,352.8 449.5,365.9 450.2,354.2 450.9,368.2 451.6,355.5 452.3,369.0 453.0,355.6 453.7,368.9 454.4,356.6 455.1,367.1 455.8,354.7 456.5,366.2 457.2,355.7 457.9,366.7 458.6,355.8 459.3,368.3 460.0,356.4 460.7,367.5 461.4,354.4 462.1,367.5 462.8,353.0 463.5,368.5 464.2,352.9 464.9,375.5 465.6,351.5 466.3,369.7 467.0,345.3 467.7,369.3 468.4,346.2 469.1,371.4 469.8,341.7 470.5,371.1 471.2,340.3 471.9,362.0 472.6,340.0 473.3,360.7 474.0,336.1 474.7,358.4 475.4,333.3 476.1,361.3 476.8,343.3 477.5,364.3 478.2,349.2 478.9,366.4 479.6,349.7 480.3,366.9 481.0,350.1 481.7,367.0 482.4,352.4 483.1,367.6 483.8,351.2 484.5,365.7 485.2,352.7 485.9,366.5 486.6,351.0 487.3,366.4 488.0,353.1 488.7,364.7 489.4,346.3 490.1,363.8 490.8,344.5 491.5,360.4 492.2,331.2 492.9,355.1 493.6,324.3 494.3,349.9 495.0,325.0 495.7,359.7 496.4,336.5 497.1,362.5 497.8,336.9 498.5,364.6 499.2,339.9 499.9,363.6 500.6,345.8 501.3,363.8 502.0,352.4 502.7,365.7 503.4,353.3 504.1,362.4 504.8,351.0 505.5,361.1 506.2,349.0 506.9,357.3 507.6,344.6 508.3,353.5 509.0,338.4 509.7,358.2 510.4,337.1 511.1,360.2 511.8,336.1 512.5,362.9 513.2,340.9 513.9,364.5 514.6,345.9 515.3,371.9 516.0,341.8 516.7,367.9 517.4,339.6 518.1,367.4 518.8,351.3 519.5,366.6 520.2,356.0 520.9,366.7 521.6,355.4 522.3,366.7 523.0,352.8 523.7,365.7 524.4,352.6 525.1,365.5 525.8,351.5 526.5,365.9 527.2,350.5 527.9,364.6 528.6,349.0 529.3,365.0 530.0,348.8 530.7,363.3 531.4,346.2 532.1,361.4 532.8,346.5 533.5,357.8 534.2,343.3 534.9,357.2 535.6,340.7 536.3,352.8 537.0,336.1 537.7,346.7 538.4,334.6 539.1,348.7 539.8,332.0 540.5,337.5 541.2,329.0 541.9,336.5 542.6,332.7 543.0,317.0 544.0,330.0 544.7,337.9 545.4,322.4 546.1,337.9 546.8,326.6 547.5,346.9 548.2,330.3 548.9,353.5 549.6,329.4 550.3,352.2 551.0,330.0 551.7,353.0 552.4,333.3 553.1,352.3 553.8,334.2 554.5,358.3 555.2,335.9 555.9,364.7 556.6,337.1 557.3,368.3 558.0,337.5 558.7,368.0 559.4,335.7 560.1,363.8 560.8,332.7 561.5,356.3 562.2,330.7 562.9,357.8 563.6,325.8 564.3,356.1 565.0,328.2 565.7,359.2 566.4,328.5 567.1,358.3 567.8,330.8 568.5,357.0 569.2,327.0 569.9,357.4 570.6,325.2 571.3,352.4 572.0,320.7 572.7,355.8 573.4,327.8 574.1,358.8 574.8,322.8 575.5,359.5 576.2,324.5 576.9,361.0 577.6,324.4 578.3,362.0 579.0,328.8 579.7,375.3 580.4,335.9 581.1,361.4 581.8,343.0 582.5,367.4 583.2,337.7 583.9,362.7 584.6,328.4 585.3,363.6 586.0,328.9 586.7,372.8 587.4,333.5 588.1,357.4 588.8,323.4 589.5,359.3 590.2,323.9 590.9,359.6 591.6,326.2 592.3,360.0 593.0,331.5 593.7,356.3 594.4,334.8 595.1,352.7 595.8,333.4 596.5,354.9 597.2,326.9 597.9,358.0 598.6,326.1 599.3,359.4 600.0,327.6 600.7,359.4 601.4,327.5 602.1,351.2 602.8,327.9 603.5,350.5 604.2,324.4 604.9,354.5 605.6,325.2 606.3,356.1 607.0,326.6 607.7,355.6 608.4,330.4 609.1,354.3 609.8,331.4 610.5,354.0 611.2,335.4 611.9,358.1 612.6,340.4 613.3,361.0 614.0,345.6 614.7,364.5 615.4,343.0 616.1,366.0 616.8,339.1 617.5,370.6 618.2,334.4 618.9,370.6 619.6,337.3 620.3,371.3 621.0,343.8 621.7,374.8 622.4,341.9 623.1,368.5 623.8,340.5 624.5,365.9 625.2,330.6 625.9,363.8 626.6,330.3 627.3,358.8 628.0,337.0 628.7,361.9 629.4,330.9 630.1,364.4 630.8,341.7 631.5,376.6 632.2,343.0 632.9,356.7 633.6,341.0 634.3,351.8 635.0,339.9 635.7,361.5 636.4,338.9 637.1,370.8 637.8,334.4 638.5,362.3 639.2,330.0 639.9,362.2 640.6,331.4 641.3,366.7 642.0,333.6 642.7,366.6 643.4,328.1 644.1,356.6 644.8,328.0 645.5,356.9 646.2,333.6 646.9,361.1 647.6,340.3 648.3,367.9 649.0,345.0 649.7,373.1 650.4,348.0 651.1,368.2 651.8,342.6 652.5,367.8 653.2,342.8 653.9,371.6 654.6,341.7 655.3,368.9 656.0,340.4 656.7,366.8 657.4,338.4 658.1,363.6 658.8,333.2 659.5,365.8 660.2,332.6 660.9,372.6 661.6,332.0 662.3,365.3 663.0,334.7 663.7,366.2 664.4,334.3 665.1,370.8 665.8,332.7 666.5,369.7 667.2,330.0 667.9,370.8 668.6,328.0 669.3,367.5 670.0,329.4 670.7,367.1 671.4,332.0 672.1,361.2 672.8,337.6 673.5,364.4 674.2,332.0 674.9,362.9 675.6,326.1 676.3,363.5 677.0,325.9 677.7,365.4 678.4,325.6 679.1,360.9 679.8,329.7 680.5,359.9 681.2,334.0 681.9,361.3 682.6,333.7 683.3,360.4 684.0,334.4 684.7,360.9 685.4,338.2 686.1,360.5 686.8,334.3 687.5,361.9 688.2,331.0 688.9,363.7 689.6,333.8 690.3,360.4 691.0,336.5 691.7,355.9 692.4,330.4 693.1,360.8 693.8,324.2 694.5,357.2 695.2,325.3 695.9,354.9 696.6,321.4 697.3,353.5 698.0,304.7 698.7,356.4 699.4,315.1 700.0,316.6 700.8,318.9 701.5,360.8 702.2,325.0 702.9,357.4 703.6,327.3 704.3,361.2 705.0,328.8 705.7,372.6 706.4,328.3 707.1,361.4 707.8,330.2 708.5,367.6 709.2,334.0 709.9,367.6 710.6,332.9 711.3,358.3 712.0,331.4 712.7,355.3 713.4,338.3 714.1,355.9 714.8,341.2 715.5,355.9 716.2,327.4 716.9,358.4 717.6,319.1 718.3,356.9 719.0,321.3 719.7,359.3 720.4,324.1 721.1,358.6 721.8,323.7 722.5,358.7 723.2,323.7 723.9,363.6 724.6,330.3 725.3,369.0 726.0,328.6 726.7,371.7 727.4,324.0 728.1,369.1 728.8,327.1 729.5,363.2 730.2,329.0 730.9,360.7 731.6,333.1 732.3,363.5 733.0,337.7 733.7,360.0 734.4,327.8 735.1,355.3 735.8,325.6 736.5,358.8 737.2,327.1 737.9,360.6 738.6,330.7 739.3,358.6 740.0,332.3 740.7,356.7 741.4,328.5 742.1,362.8 742.8,328.9 743.5,367.1 744.2,331.4 744.9,360.4 745.6,331.1 746.3,357.2 747.0,330.0 747.7,359.8 748.4,329.5 749.1,359.4 749.8,326.8 750.5,353.5 751.2,324.4 751.9,362.1 752.6,316.1 753.3,367.1 754.0,318.5 754.7,367.6 755.4,328.8 756.1,367.8 756.8,331.6 757.5,367.6 758.2,325.3 758.9,370.0 759.6,314.3 760.3,362.4 761.0,323.2 761.7,354.7 762.4,324.8 763.1,355.7 763.8,322.7 764.5,352.6 765.2,322.7 765.9,356.2 766.6,321.7 767.3,357.2 768.0,325.3 768.7,352.4 769.4,326.3 770.1,359.1 770.8,318.7 771.5,360.8 772.2,315.3 772.9,353.1 773.6,313.5 774.3,346.3 775.0,313.5 775.7,347.4 776.4,317.9 777.0,314.0 777.8,317.2 778.5,350.7 779.2,319.2 779.9,355.6 780.6,314.5 781.3,352.3 782.0,314.0 782.7,356.9 783.4,316.6 784.1,354.5 784.8,316.8 785.5,353.9 786.2,320.8 786.9,353.1 787.6,331.6 788.3,347.9 789.0,328.4 789.7,356.1 790.4,327.6 791.1,349.9 791.8,332.2 792.5,350.6 793.2,328.3 793.9,347.0 794.6,324.3 795.3,345.4 796.0,324.3 796.7,357.1 797.4,322.4 798.1,356.7 798.8,323.8 799.5,354.5 800.2,327.1 800.9,353.5 801.6,325.7 802.3,348.8 803.0,329.6 803.7,348.2 804.4,332.1 805.1,350.7 805.8,330.6 806.5,350.2 807.2,329.2 807.9,349.5 808.6,329.1 809.3,349.7 810.0,333.5 810.7,355.3 811.4,333.7 812.1,348.4 812.8,326.8 813.5,349.8 814.2,325.4 814.9,351.4 815.6,325.8 816.3,352.8 817.0,325.3 817.7,347.4 818.4,326.2 819.1,344.7 819.8,325.4 820.5,341.5 821.2,325.9 821.9,340.8 822.6,318.5 823.3,347.0 824.0,318.5 824.7,355.5 825.4,320.3 826.1,366.6 826.8,319.1 827.5,365.3 828.2,317.7 828.9,363.4 829.6,318.3 830.3,353.9 831.0,317.2 831.7,353.4 832.4,315.5 833.0,313.0 833.8,309.4 834.5,362.0 835.2,319.8 835.9,358.2 836.6,328.2 837.3,356.5 838.0,321.7 838.7,358.6 839.4,317.7 840.1,356.4 840.8,322.7 841.5,351.1 842.2,324.5 842.9,353.6 843.6,316.6 844.3,361.1 845.0,320.3 845.7,362.3 846.4,322.3 847.1,364.3 847.8,319.6 848.5,364.5 849.2,318.0 849.9,366.7 850.6,320.1 851.3,365.1 852.0,324.1 852.7,363.6 853.4,325.2 854.1,371.9 854.8,326.3 855.5,366.1 856.2,322.4 857.0,312.0 857.6,320.9 858.3,367.6 859.0,323.4 859.7,363.3 860.4,318.2 861.1,359.5 861.8,320.8 862.5,363.5 863.2,319.1 863.9,358.3 864.6,317.4 865.3,357.0 866.0,319.5 866.7,359.5 867.4,318.8 868.1,357.2 868.8,317.8 869.5,354.2 870.2,316.9 870.9,351.3 871.6,321.9 872.3,348.5 873.0,324.5 873.7,353.1 874.4,329.7 875.1,361.1 875.8,330.1 876.5,359.1 877.2,330.0 877.9,366.0 878.6,327.9 879.3,347.7 880.0,308.4 880.7,343.5 881.4,318.3 882.1,347.6 882.8,319.7 883.5,349.9 884.2,321.9 884.9,358.1 885.6,329.8 886.3,357.1 887.0,326.1 887.7,350.7 888.4,323.1 889.1,353.8 889.8,322.2 890.5,355.8 891.2,316.8 891.9,358.1 892.6,321.1 893.3,354.0 894.0,321.6 894.7,355.4 895.4,319.2 896.1,355.9 896.8,319.7 897.5,358.9 898.2,318.6 898.9,360.4 899.6,320.1 900.3,362.5 901.0,324.0 901.7,364.9 902.4,322.9 903.1,357.8 903.8,324.0 904.5,357.9 905.2,320.0 905.9,356.1 906.6,317.0 907.3,354.2 908.0,317.9 908.7,353.6 909.4,320.6 910.1,357.4 910.8,321.8 911.5,358.9 912.2,318.6 912.9,359.2 913.6,317.7 914.3,357.9 915.0,318.5 915.7,365.1 916.4,317.8 917.1,367.3 917.8,323.7 918.5,363.9 919.2,337.2 919.9,363.3 920.6,333.9 921.3,356.2 922.0,329.6 922.7,356.2 923.4,328.8 924.1,357.0 924.8,330.3 925.5,352.0 926.2,333.4 926.9,351.4 927.6,325.9 928.3,353.9 929.0,328.4 929.7,354.6 930.4,324.0 931.1,361.3 931.8,327.5 932.5,366.7 933.2,324.1 933.9,361.8 934.6,332.2 935.3,352.3 936.0,328.8 936.7,350.0 937.4,329.7 938.1,349.0 938.8,334.0 939.5,354.6 940.2,339.8 940.9,357.5 941.6,335.7 942.3,356.4 943.0,328.8 943.7,356.6 944.4,325.5 945.1,353.9 945.8,324.0 946.5,353.2 947.2,323.1 947.9,352.6 948.6,329.7 949.3,354.5 950.0,329.6 950.7,358.2 951.4,328.1 952.1,358.4 952.8,327.8 953.5,355.3 954.2,330.3 954.9,366.1 955.6,325.2 956.3,368.9 957.0,322.0 957.7,363.5 958.4,321.1 959.1,361.6 959.8,325.6 960.5,360.3 961.2,325.2 961.9,361.6 962.6,320.0 963.3,357.9 964.0,302.6 964.7,355.6 965.4,315.0 966.1,351.5 966.8,315.9 967.5,350.9 968.2,319.7 968.9,356.5 969.6,315.4 970.3,355.8 971.0,309.7 971.7,354.5 972.4,309.7 973.1,350.3 973.8,312.9 974.5,356.5 975.2,317.1 975.9,348.0 976.6,311.9 977.3,348.9 978.0,315.5 978.7,351.9 979.4,319.0 980.1,349.1 980.8,320.0 981.5,344.0 982.2,319.1 982.9,338.9 983.6,316.0 984.3,340.8 985.0,314.2 985.7,341.7 986.4,316.7 987.1,342.5 987.8,313.8 988.5,343.2 989.2,310.4 989.9,344.8 990.6,311.2 991.3,348.4 992.0,315.7 992.7,355.2 993.4,311.6 994.1,351.5 994.8,307.7 995.5,351.1 996.2,307.2 996.9,350.6 997.6,301.4 998.3,348.6 999.0,308.1 999.7,352.6 1000.4,310.3 1001.1,361.3 1001.8,313.7 1002.5,357.1 1003.2,319.2 1003.9,353.6 1004.6,321.5 1005.3,348.3 1006.0,317.2 1006.7,354.7 1007.4,315.4 1008.1,358.6 1008.8,310.1 1009.5,351.4 1010.0,306.5 1010.9,344.9 1011.6,311.8 1012.3,347.2 1013.0,314.6 1013.7,351.8 1014.4,312.5 1015.1,368.0 1015.8,308.7 1016.5,357.1 1017.2,312.5 1017.9,359.0 1018.6,313.6 1019.3,351.7 1020.0,310.0 1020.7,346.0 1021.4,308.2 1022.1,349.5 1022.8,310.5 1023.5,343.8 1024.2,315.8 1024.9,345.4 1025.6,314.6 1026.3,351.2 1027.0,318.6 1027.7,343.9 1028.4,317.3 1029.1,345.5 1029.8,317.1 1030.5,350.9 1031.2,310.2 1031.9,353.4 1032.6,311.7 1033.3,355.5 1034.0,314.3 1034.7,353.0 1035.4,311.5 1036.1,353.2 1036.8,310.3 1037.5,350.8 1038.2,305.8 1038.9,345.4 1039.6,306.0 1040.3,350.2 1041.0,313.6 1041.7,364.2 1042.4,317.8 1043.1,349.7 1043.8,303.4 1044.5,348.6 1045.2,311.8 1045.9,349.3 1046.6,309.7 1047.3,349.2 1048.0,314.1 1048.7,348.3 1049.4,323.0 1050.1,347.8 1050.8,316.6 1051.5,350.1 1052.2,314.8 1052.9,351.8 1053.6,315.5 1054.3,352.9 1055.0,320.4 1055.7,352.5 1056.4,320.5 1057.1,356.9 1057.8,316.5 1058.5,352.8 1059.2,320.6 1059.9,353.6 1060.6,320.6 1061.3,362.0 1062.0,312.7 1062.7,366.3 1063.4,318.6 1064.1,358.3 1064.8,318.2 1065.5,349.7 1066.2,312.4 1066.9,355.3 1067.6,308.2 1068.3,354.2 1069.0,320.6 1069.7,351.4 1070.4,327.8 1071.1,353.1 1071.8,322.2 1072.5,352.5 1073.2,318.9 1073.9,350.1 1074.6,324.9 1075.3,348.5 1076.0,327.0 1076.7,356.6 1077.4,325.8 1078.1,362.2 1078.8,326.5 1079.5,358.2 1080.2,329.6 1080.9,356.6 1081.6,330.4 1082.3,356.6 1083.0,332.5 1083.7,355.0 1084.4,327.4 1085.1,352.3 1085.8,317.8 1086.5,352.6 1087.2,319.3 1087.9,355.4 1088.6,327.1 1089.3,355.8 1090.0,324.9 1090.7,354.0 1091.4,321.8 1092.1,352.3 1092.8,324.6 1093.5,355.7 1094.2,324.1 1094.9,359.8 1095.6,327.7 1096.3,368.1 1097.0,325.7 1097.7,358.1 1098.4,315.0 1099.1,351.8 1099.8,323.7 1100.5,347.9 1101.2,319.9 1101.9,346.2 1102.6,325.1 1103.3,345.2 1104.0,325.4 1104.7,347.2 1105.4,329.8 1106.1,353.0 1106.8,332.9 1107.5,355.0 1108.2,322.5 1108.9,350.9 1109.6,318.3 1110.3,349.4 1111.0,322.8 1111.7,352.8 1112.4,322.7 1113.1,349.6 1113.8,320.3 1114.5,349.0 1115.2,321.6 1115.9,355.8 1116.6,329.2 1117.3,352.0 1118.0,325.5 1118.7,352.0 1119.4,315.8 1120.1,352.5 1120.8,318.8 1121.5,358.0 1122.2,320.0 1122.9,353.3 1123.6,318.6 1124.3,344.9 1125.0,317.2 1125.7,344.2 1126.4,318.5 1127.1,343.7 1127.8,317.5 1128.5,344.3 1129.2,326.0 1129.9,343.6 1130.6,330.1 1131.3,337.6 1132.0,326.1 1132.7,337.8 1133.4,319.7 1134.1,339.0 1134.8,315.0 1135.5,341.1 1136.2,318.9 1136.9,343.4 1137.6,327.3 1138.3,344.9 1139.0,319.1 1139.7,345.0 1140.4,308.5 1141.1,345.5 1141.8,307.9 1142.5,344.0 1143.2,305.7 1143.9,347.6 1144.6,305.0 1145.3,355.3 1146.0,307.2 1146.7,352.7 1147.4,312.6 1148.1,346.0 1148.8,317.8 1149.5,349.5 1150.2,317.5 1150.9,349.8 1151.6,311.5 1152.3,349.5 1153.0,305.7 1153.7,346.8 1154.4,306.8 1155.1,342.5 1155.8,311.9 1156.5,337.4 1157.2,310.4 1157.9,344.6 1158.6,304.9 1159.3,347.3 1160.0,304.0 1160.7,341.1 1161.4,315.6 1162.1,335.8 1162.8,311.5 1163.5,330.8 1164.2,311.7 1164.9,333.1 1165.6,319.3 1166.3,331.3 1167.0,322.2 1167.7,345.1 1168.4,328.1 1169.1,349.4 1169.8,326.4 1170.5,354.2 1171.2,314.7 1171.9,351.9 1172.6,325.8 1173.3,352.9 1174.0,330.2 1174.7,351.3 1175.4,330.0 1176.1,353.4 1176.8,325.3 1177.5,363.6 1178.2,326.7 1178.9,347.4 1179.6,328.3 1180.3,348.6 1181.0,330.8 1181.7,351.0 1182.4,325.0 1183.1,349.9 1183.8,320.5 1184.5,351.0 1185.2,320.5 1185.9,346.7 1186.6,321.1 1187.3,345.2 1188.0,314.6 1188.7,343.1 1189.4,311.1 1190.1,343.9 1190.8,308.9 1191.5,345.2 1192.2,308.8 1192.9,346.0 1193.6,315.2 1194.3,349.4 1195.0,316.8 1195.7,349.6 1196.4,315.7 1197.1,356.1 1197.8,316.3 1198.5,350.3 1199.2,321.9 1199.9,348.8 1200.6,326.4 1201.3,346.0 1202.0,322.7 1202.7,337.0 1203.4,307.6 1204.1,339.0 1205.0,305.0 1205.5,343.2 1206.2,317.7 1206.9,345.0 1207.6,312.6 1208.3,347.1 1209.0,319.9 1209.7,341.3 1210.4,329.4 1211.1,344.2 1211.8,324.2 1212.5,341.0 1213.2,321.6 1213.9,342.4 1214.6,311.5 1215.3,345.1 1216.0,308.2 1216.7,342.6 1217.4,309.2 1218.1,344.9 1218.8,306.2 1219.5,344.2 1220.2,296.5 1220.9,339.9 1221.6,310.0 1222.3,342.5 1223.0,313.1 1223.7,344.5 1224.4,313.6 1225.1,344.8 1225.8,318.7 1226.5,348.3 1227.2,322.2 1227.9,352.6 1228.6,328.9 1229.3,356.2 1230.0,329.5 1230.7,355.8 1231.4,325.0 1232.1,350.7 1232.8,322.4 1233.5,355.5 1234.2,320.6 1234.9,351.7 1235.6,319.7 1236.3,345.5 1237.0,317.6 1237.7,347.5 1238.4,317.7 1239.1,351.5 1239.8,316.9 1240.5,353.1 1241.2,318.0 1241.9,354.1 1242.6,315.5 1243.3,360.2 1244.0,317.1 1244.7,357.4 1245.4,319.8 1246.1,355.9 1246.8,320.0 1247.5,355.3 1248.2,316.6 1248.9,348.4 1249.6,311.0 1250.3,353.8 1251.0,314.8 1251.7,356.4 1252.4,319.9 1253.1,352.2 1253.8,321.8 1254.5,348.5 1255.2,318.5 1255.9,352.3 1256.6,312.0 1257.3,352.6 1258.0,312.1 1258.7,354.3 1259.4,317.2 1260.1,352.3 1260.8,315.0 1261.5,347.6 1262.2,313.1 1262.9,350.5 1263.6,313.4 1264.3,346.5 1265.0,315.5 1265.7,351.1 1266.4,316.5 1267.1,357.5 1267.8,320.3 1268.5,354.2 1269.2,317.1 1269.9,354.3 1270.6,319.0 1271.3,351.3 1272.0,316.8 1272.7,351.0 1273.4,323.0 1274.1,358.1 1274.8,326.0 1275.5,361.3 1276.2,325.4 1276.9,361.8 1277.6,331.4 1278.3,357.7 1279.0,343.4 1279.7,358.7 1280.4,342.2 1281.1,359.7 1281.8,339.4 1282.5,358.4 1283.2,340.8 1283.9,360.1 1284.6,339.9 1285.3,357.7 1286.0,338.8 1286.7,357.8 1287.4,339.1 1288.1,358.7 1288.8,340.1 1289.5,359.2 1290.2,341.3 1290.9,362.7 1291.6,345.0 1292.0,97.5 1292.4,396.0 1292.8,350.0 1293.0,341.3 1293.7,357.8 1294.4,341.1 1295.1,357.4 1295.8,340.7 1296.5,358.4 1297.2,338.8 1297.9,353.7 1298.6,335.1 1299.3,357.0 1300.0,333.4 1300.7,355.9 1301.4,336.4 1302.1,356.3 1302.8,330.7 1303.5,350.3 1304.2,320.7 1304.9,340.0 1305.6,322.2 1306.3,332.7 1307.0,323.3 1307.7,345.3 1308.4,325.9 1309.1,353.2 1309.8,326.4 1310.5,350.4 1311.2,326.0 1311.9,349.3 1312.6,321.1 1313.3,350.2 1314.0,322.9 1314.7,353.4 1315.4,324.8 1316.1,353.5 1316.8,324.0 1317.5,350.5 1318.2,328.8 1318.9,349.9 1319.6,325.6 1320.3,347.9 1321.0,321.6 1321.7,344.3 1322.4,322.4 1323.1,350.6 1323.8,326.2 1324.5,351.1 1325.2,322.5 1325.9,352.8 1326.6,320.9 1327.3,348.3 1328.0,321.6 1328.7,347.4 1329.4,325.2 1330.1,350.6 1330.8,323.7 1331.5,346.8 1332.2,321.2 1332.9,347.3 1333.6,321.0 1334.3,349.9 1335.0,317.2 1335.7,360.9 1336.4,324.0 1337.1,346.1 1337.8,327.4 1338.5,354.5 1339.2,330.8 1339.9,356.7 1340.6,328.2 1341.3,344.9 1342.0,326.2 1342.7,342.8 1343.4,317.8 1344.1,348.1 1344.8,312.7 1345.5,345.3 1346.2,322.2 1346.9,337.1 1347.6,331.1 1348.3,340.4 1349.0,329.7 1349.7,345.0 1350.4,326.3 1351.1,345.9 1351.8,329.6 1352.5,342.8 1353.2,329.7 1353.9,350.6 1354.6,328.3 1355.3,353.4 1356.0,325.3 1356.7,343.8 1357.4,323.5 1358.1,349.7 1358.8,317.4 1359.5,356.6 1360.2,318.5 1360.9,359.5 1361.6,318.9 1362.3,360.6 1363.0,322.4 1363.7,351.4 1364.4,320.8 1365.1,347.7 1365.8,318.8 1366.5,341.1 1367.2,319.1 1367.9,347.4" fill="none" stroke="#00ff00" stroke-width="1.15" stroke-linejoin="round" marker-start="url(#m)" marker-mid="url(#m)" marker-end="url(#m)"/>
<polyline points="51.0,252.0 51.0,232.0 51.0,214.0 51.0,196.0 51.0,178.0 51.0,166.0 51.0,157.6" fill="none" stroke="#00ff00" stroke-width="1.15" stroke-linejoin="round" marker-start="url(#m)" marker-mid="url(#m)" marker-end="url(#m)"/>
</g>
<g clip-path="url(#c2)">
<polygon points="68.0,813.1 68.9,813.1 69.8,813.1 70.7,813.1 71.6,813.1 72.5,813.1 73.4,813.0 74.3,813.0 75.2,813.1 76.1,813.1 77.0,813.1 77.9,813.1 78.8,813.0 79.7,809.5 80.6,807.9 81.5,807.7 82.4,807.5 83.3,807.3 84.2,807.1 85.1,806.8 86.0,806.6 86.9,806.3 87.8,806.1 88.7,805.8 89.6,805.6 90.5,805.3 91.4,805.0 92.3,804.7 93.2,804.4 94.1,804.2 95.0,803.9 95.9,803.6 96.8,803.3 97.7,803.3 98.6,803.3 99.5,803.3 100.4,803.4 101.3,803.4 102.2,803.4 103.1,803.4 104.0,803.3 104.9,803.4 105.8,803.4 106.7,803.4 107.6,803.4 108.5,803.4 109.4,803.4 110.3,803.4 111.2,803.4 112.1,803.4 113.0,803.4 113.9,803.4 114.8,803.4 115.7,803.4 116.6,803.4 117.5,803.3 118.4,803.3 119.3,803.3 120.2,803.3 121.1,803.3 122.0,803.3 122.9,803.3 123.8,803.3 124.7,803.4 125.6,803.3 126.5,803.3 127.4,803.3 128.3,803.3 129.2,803.3 130.1,803.4 131.0,803.4 131.9,803.4 132.8,803.4 133.7,803.4 134.6,803.4 135.5,803.4 136.4,803.4 137.3,803.4 138.2,803.4 139.1,803.3 140.0,803.3 140.9,803.3 141.8,803.3 142.7,803.4 143.6,803.3 144.5,803.3 145.4,803.2 146.3,803.2 147.2,803.3 148.1,803.3 149.0,803.4 149.9,803.4 150.8,803.3 151.7,803.3 152.6,803.3 153.5,803.3 154.4,803.3 155.3,803.3 156.2,803.3 157.1,803.4 158.0,803.4 158.9,803.3 159.8,803.3 160.7,803.3 161.6,803.3 162.5,803.3 163.4,803.3 164.3,803.3 165.2,803.3 166.1,803.3 167.0,803.4 167.9,803.3 168.8,803.3 169.7,803.3 170.6,803.3 171.5,803.3 172.4,803.3 173.3,803.3 174.2,803.3 175.1,803.4 176.0,803.4 176.9,803.4 177.8,803.4 178.7,803.3 179.6,803.3 180.5,803.3 181.4,803.3 182.3,803.3 183.2,803.3 184.1,803.3 185.0,803.3 185.9,803.4 186.8,803.4 187.7,803.4 188.6,803.4 189.5,803.4 190.4,803.4 191.3,803.4 192.2,803.4 193.1,803.4 194.0,803.4 194.9,803.4 195.8,803.4 196.7,803.4 197.6,803.3 198.5,803.3 199.4,803.3 200.3,803.2 201.2,803.3 202.1,803.3 203.0,803.3 203.9,803.3 204.8,803.3 205.7,803.3 206.6,803.3 207.5,803.3 208.4,803.3 209.3,803.3 210.2,803.3 211.1,803.4 212.0,803.4 212.9,803.4 213.8,803.3 214.7,803.3 215.6,803.3 216.5,803.3 217.4,803.4 218.3,803.4 219.2,803.3 220.1,803.3 221.0,803.3 221.9,803.3 222.8,803.3 223.7,803.3 224.6,803.3 225.5,803.3 226.4,803.3 227.3,803.3 228.2,803.2 229.1,803.2 230.0,803.2 230.9,803.2 231.8,803.3 232.7,803.3 233.6,803.3 234.5,803.3 235.4,803.4 236.3,803.4 237.2,803.4 238.1,803.4 239.0,803.4 239.9,803.4 240.8,803.3 241.7,803.3 242.6,803.3 243.5,803.3 244.4,803.3 245.3,803.3 246.2,803.3 247.1,803.3 248.0,803.3 248.9,803.3 249.8,803.3 250.7,803.3 251.6,803.4 252.5,803.4 253.4,803.4 254.3,803.4 255.2,803.4 256.1,803.4 257.0,803.3 257.9,803.3 258.8,803.3 259.7,803.2 260.6,803.2 261.5,803.2 262.4,803.2 263.3,803.2 264.2,803.2 265.1,803.3 266.0,803.3 266.9,803.3 267.8,803.3 268.7,803.3 269.6,803.4 270.5,803.4 271.4,803.4 272.3,803.4 273.2,803.4 274.1,803.4 275.0,803.3 275.9,803.3 276.8,803.3 277.7,803.3 278.6,803.4 279.5,803.4 280.4,803.4 281.3,803.3 282.2,803.3 283.1,803.3 284.0,803.3 284.9,803.3 285.8,803.3 286.7,803.3 287.6,803.3 288.5,803.3 289.4,803.4 290.3,803.4 291.2,803.3 292.1,803.3 293.0,803.3 293.9,803.3 294.8,803.3 295.7,803.3 296.6,803.3 297.5,803.3 298.4,803.4 299.3,803.4 300.2,803.4 301.1,803.4 302.0,803.4 302.9,803.4 303.8,803.4 304.7,803.3 305.6,803.3 306.5,803.3 307.4,803.2 308.3,803.2 309.2,803.3 310.1,803.3 311.0,803.3 311.9,803.3 312.8,803.3 313.7,803.3 314.6,803.3 315.5,803.3 316.4,803.4 317.3,803.3 318.2,803.3 319.1,803.3 320.0,803.3 320.9,803.3 321.8,803.3 322.7,803.3 323.6,803.3 324.5,803.3 325.4,803.3 326.3,803.4 327.2,803.4 328.1,803.4 329.0,803.3 329.9,803.3 330.8,803.3 331.7,803.3 332.6,803.3 333.5,803.3 334.4,803.3 335.3,803.2 336.2,803.3 337.1,803.3 338.0,803.3 338.9,803.3 339.8,803.3 340.7,803.4 341.6,803.3 342.5,803.3 343.4,803.3 344.3,803.3 345.2,803.3 346.1,803.3 347.0,803.3 347.9,803.3 348.8,803.3 349.7,803.3 350.6,803.3 351.5,803.3 352.4,803.3 353.3,803.3 354.2,803.3 355.1,803.3 356.0,803.3 356.9,803.3 357.8,803.3 358.7,803.3 359.6,803.3 360.5,803.3 361.4,803.3 362.3,803.3 363.2,803.3 364.1,803.4 365.0,803.4 365.9,803.4 366.8,803.4 367.7,803.4 368.6,803.3 369.5,803.3 370.4,803.3 371.3,803.5 372.2,803.6 373.1,803.8 374.0,803.9 374.9,803.9 375.8,804.0 376.7,804.0 377.6,804.2 378.5,804.3 379.4,804.5 380.3,804.6 381.2,804.6 382.1,804.7 383.0,804.8 383.9,804.9 384.8,805.0 385.7,805.2 386.6,805.2 387.5,805.2 388.4,805.2 389.3,805.3 390.2,805.4 391.1,805.5 392.0,805.5 392.9,805.6 393.8,805.6 394.7,805.7 395.6,805.7 396.5,805.8 397.4,805.9 398.3,805.9 399.2,806.0 400.1,803.8 401.0,784.4 401.9,784.2 402.8,784.0 403.7,783.7 404.6,783.4 405.5,783.2 406.4,782.9 407.3,782.6 408.2,782.3 409.1,782.1 410.0,781.8 410.9,781.5 411.8,781.2 412.7,780.9 413.6,780.7 414.5,780.5 415.4,780.3 416.3,779.9 417.2,779.6 418.1,779.2 419.0,778.8 419.9,778.6 420.8,778.3 421.7,778.0 422.6,777.5 423.5,776.8 424.4,776.2 425.3,775.6 426.2,775.1 427.1,774.5 428.0,773.9 428.9,773.2 429.8,772.5 430.7,771.8 431.6,771.1 432.5,770.5 433.4,769.9 434.3,769.2 435.2,768.6 436.1,768.0 437.0,767.4 437.9,732.9 438.8,710.5 439.7,711.0 440.6,711.3 441.5,711.6 442.4,711.8 443.3,711.9 444.2,712.0 445.1,712.0 446.0,711.7 446.9,711.1 447.8,710.5 448.7,710.2 449.6,712.1 450.5,714.0 451.4,716.0 452.3,716.3 453.2,716.3 454.1,716.2 455.0,717.1 455.9,718.9 456.8,720.7 457.7,722.2 458.6,721.8 459.5,721.4 460.4,721.0 461.3,721.0 462.2,720.7 463.1,719.0 464.0,716.8 464.9,714.2 465.8,711.6 466.7,709.4 467.6,709.2 468.5,709.0 469.4,708.9 470.3,708.0 471.2,707.0 472.1,705.9 473.0,706.0 473.9,707.1 474.8,708.2 475.7,708.9 476.6,708.0 477.5,707.0 478.4,706.1 479.3,706.4 480.2,706.9 481.1,707.3 482.0,707.5 482.9,707.3 483.8,706.7 484.7,706.3 485.6,706.8 486.5,707.2 487.4,707.6 488.3,707.0 489.2,706.2 490.1,705.3 491.0,693.8 491.9,673.7 492.8,655.9 493.7,655.5 494.6,654.9 495.5,654.3 496.4,653.7 497.3,656.4 498.2,659.6 499.1,662.9 500.0,663.9 500.9,665.3 501.8,666.7 502.7,668.2 503.6,670.1 504.5,672.1 505.4,674.0 506.3,676.1 507.2,675.5 508.1,674.0 509.0,672.9 509.9,672.2 510.8,671.6 511.7,671.3 512.6,672.6 513.5,674.0 514.4,675.3 515.3,674.5 516.2,672.9 517.1,671.3 518.0,669.8 518.9,668.4 519.8,667.0 520.7,665.7 521.6,669.3 522.5,675.1 523.4,681.0 524.3,684.8 525.2,688.3 526.1,688.7 527.0,688.1 527.9,688.8 528.8,689.4 529.7,689.7 530.6,688.8 531.5,688.0 532.4,684.8 533.3,678.9 534.2,673.1 535.1,667.2 536.0,660.9 536.9,660.4 537.8,659.8 538.7,659.8 539.6,661.7 540.5,663.5 541.4,665.3 542.3,667.5 543.2,669.7 544.1,671.9 545.0,671.8 545.9,669.7 546.8,667.6 547.7,666.0 548.6,665.9 549.5,665.9 550.4,665.8 551.3,665.0 552.2,664.1 553.1,663.2 554.0,663.4 554.9,664.5 555.8,665.6 556.7,666.1 557.6,665.1 558.5,663.5 559.4,662.0 560.3,659.2 561.2,656.3 562.1,653.5 563.0,651.7 563.9,650.7 564.8,649.6 565.7,648.9 566.6,649.7 567.5,650.9 568.4,652.2 569.3,651.4 570.2,650.5 571.1,649.6 572.0,649.5 572.9,649.9 573.8,650.2 574.7,650.9 575.6,652.3 576.5,653.6 577.4,655.0 578.3,655.0 579.2,656.9 580.1,660.3 581.0,663.2 581.9,665.7 582.8,668.3 583.7,671.7 584.6,677.0 585.5,682.4 586.4,687.7 587.3,686.6 588.2,681.4 589.1,676.1 590.0,671.8 590.9,668.0 591.8,664.1 592.7,661.2 593.6,660.2 594.5,659.3 595.4,658.3 596.3,658.8 597.2,660.7 598.1,662.6 599.0,665.3 599.9,668.4 600.8,671.5 601.7,673.9 602.6,674.6 603.5,675.4 604.4,675.8 605.3,676.2 606.2,676.6 607.1,677.0 608.0,678.7 608.9,681.0 609.8,683.4 610.7,685.1 611.6,685.2 612.5,685.4 613.4,685.1 614.3,686.6 615.2,688.2 616.1,689.7 617.0,690.6 617.9,691.2 618.8,691.8 619.7,691.8 620.6,690.8 621.5,691.1 622.4,692.6 623.3,694.1 624.2,695.6 625.1,697.1 626.0,700.2 626.9,704.0 627.8,707.6 628.7,710.4 629.6,712.7 630.5,715.0 631.4,717.4 632.3,720.7 633.2,724.0 634.1,727.0 635.0,726.8 635.9,725.9 636.8,725.0 637.7,724.6 638.6,724.9 639.5,725.3 640.4,725.6 641.3,724.9 642.2,724.1 643.1,723.4 644.0,723.4 644.9,723.8 645.8,724.1 646.7,723.9 647.6,722.8 648.5,721.7 649.4,720.7 650.3,721.2 651.2,721.7 652.1,722.2 653.0,722.4 653.9,722.7 654.8,723.0 655.7,723.8 656.6,725.4 657.5,727.1 658.4,728.6 659.3,728.4 660.2,728.3 661.1,728.2 662.0,727.6 662.9,727.0 663.8,726.3 664.7,725.5 665.6,725.0 666.5,724.5 667.4,724.0 668.3,724.8 669.2,725.7 670.1,726.5 671.0,727.2 671.9,727.8 672.8,728.4 673.7,729.1 674.6,729.6 675.5,730.0 676.4,730.2 677.3,728.1 678.2,726.0 679.1,723.8 680.0,722.5 680.9,721.3 681.8,720.2 682.7,719.1 683.6,718.2 684.5,717.3 685.4,716.5 686.3,716.9 687.2,717.2 688.1,717.5 689.0,717.7 689.9,717.9 690.8,718.1 691.7,717.9 692.6,717.3 693.5,716.8 694.4,716.2 695.3,715.6 696.2,715.1 697.1,714.6 698.0,714.4 698.9,714.3 699.8,714.3 700.7,714.3 701.6,714.3 702.5,714.4 703.4,714.2 704.3,712.2 705.2,710.2 706.1,708.2 707.0,708.2 707.9,708.9 708.8,709.6 709.7,709.5 710.6,708.5 711.5,707.6 712.4,706.6 713.3,705.8 714.2,705.0 715.1,704.2 716.0,703.4 716.9,702.4 717.8,700.5 718.7,698.1 719.6,695.2 720.5,692.3 721.4,689.9 722.3,690.2 723.2,690.5 724.1,690.8 725.0,689.0 725.9,686.7 726.8,684.4 727.7,682.4 728.6,680.4 729.5,678.4 730.4,677.2 731.3,677.1 732.2,677.0 733.1,676.9 734.0,676.3 734.9,675.5 735.8,674.7 736.7,674.4 737.6,674.4 738.5,674.4 739.4,674.3 740.3,674.0 741.2,675.4 742.1,677.6 743.0,678.8 743.9,679.7 744.8,680.7 745.7,682.1 746.6,684.0 747.5,685.9 748.4,688.1 749.3,691.9 750.2,695.6 751.1,699.6 752.0,703.2 752.9,706.3 753.8,709.4 754.7,714.5 755.6,721.5 756.5,728.4 757.4,734.4 758.3,732.7 759.2,730.1 760.1,727.4 761.0,728.0 761.9,729.1 762.8,730.2 763.7,730.6 764.6,728.6 765.5,725.6 766.4,722.7 767.3,720.2 768.2,718.7 769.1,721.4 770.0,723.0 770.9,724.5 771.8,725.9 772.7,727.2 773.6,725.0 774.5,722.9 775.4,720.8 776.3,718.9 777.2,717.1 778.1,717.4 779.0,718.3 779.9,718.8 780.8,719.2 781.7,720.1 782.6,721.3 783.5,722.5 784.4,724.5 785.3,727.5 786.2,726.6 787.1,725.6 788.0,722.5 788.9,719.2 789.8,715.8 790.7,712.8 791.6,710.3 792.5,707.9 793.4,705.1 794.3,701.1 795.2,697.2 796.1,693.3 797.0,691.5 797.9,690.1 798.8,687.9 799.7,685.4 800.6,684.4 801.5,684.3 802.4,683.8 803.3,682.2 804.2,680.5 805.1,678.9 806.0,678.6 806.9,679.6 807.8,682.2 808.7,684.8 809.6,687.4 810.5,689.9 811.4,692.5 812.3,690.7 813.2,685.7 814.1,680.7 815.0,674.8 815.9,668.8 816.8,662.8 817.7,660.6 818.6,659.7 819.5,658.8 820.4,658.2 821.3,658.5 822.2,658.7 823.1,659.0 824.0,657.9 824.9,656.8 825.8,655.9 826.7,654.2 827.6,651.4 828.5,648.6 829.4,647.2 830.3,649.7 831.2,652.2 832.1,654.7 833.0,652.1 833.9,649.2 834.8,645.8 835.7,644.3 836.6,644.2 837.5,644.0 838.4,643.0 839.3,639.7 840.2,636.4 841.1,633.1 842.0,633.0 842.9,633.1 843.8,633.2 844.7,632.5 845.6,631.5 846.5,630.5 847.4,630.0 848.3,630.5 849.2,630.8 850.1,631.0 851.0,629.5 851.9,627.8 852.8,626.2 853.7,625.0 854.6,623.9 855.5,622.6 856.4,621.3 857.3,619.8 858.2,617.4 859.1,614.8 860.0,611.9 860.9,609.0 861.8,606.1 862.7,603.7 863.6,601.6 864.5,599.5 865.4,597.0 866.3,594.0 867.2,591.7 868.1,589.3 869.0,587.1 869.9,584.4 870.8,581.7 871.7,578.8 872.6,575.9 873.5,572.9 874.4,570.0 875.3,568.0 876.2,566.1 877.1,562.7 878.0,559.3 878.9,558.6 879.8,567.3 880.7,576.2 881.6,585.3 882.5,594.4 883.4,600.6 884.3,603.1 885.2,605.6 886.1,608.1 887.0,609.2 887.9,610.2 888.8,611.3 889.7,614.2 890.6,618.0 891.5,621.8 892.4,619.4 893.3,615.3 894.2,611.3 895.1,607.2 896.0,602.4 896.9,597.5 897.8,592.7 898.7,587.4 899.6,582.6 900.5,577.7 901.4,572.7 902.3,567.2 903.2,561.8 904.1,556.6 905.0,552.2 905.9,547.8 906.8,543.4 907.7,541.6 908.6,541.0 909.5,540.3 910.4,538.7 911.3,538.1 912.2,538.3 913.1,538.4 914.0,537.4 914.9,536.3 915.8,535.3 916.7,536.9 917.6,540.7 918.5,545.0 919.4,548.1 920.3,549.0 921.2,550.0 922.1,553.8 923.0,559.2 923.9,562.8 924.8,566.3 925.7,568.7 926.6,570.7 927.5,572.7 928.4,580.8 929.3,591.0 930.2,601.3 931.1,611.5 932.0,621.5 932.9,635.7 933.8,649.8 934.7,652.0 935.6,650.7 936.5,649.5 937.4,648.6 938.3,648.4 939.2,648.1 940.1,647.8 941.0,645.7 941.9,643.6 942.8,641.7 943.7,642.7 944.6,644.7 945.5,646.6 946.4,647.5 947.3,647.0 948.2,646.4 949.1,645.9 950.0,645.9 950.9,646.0 951.8,646.1 952.7,646.6 953.6,647.2 954.5,647.9 955.4,648.4 956.3,648.8 957.2,649.1 958.1,649.4 959.0,648.6 959.9,647.9 960.8,647.1 961.7,647.7 962.6,648.7 963.5,649.7 964.4,650.7 965.3,651.7 966.2,652.6 967.1,653.2 968.0,650.5 968.9,647.8 969.8,645.2 970.7,645.2 971.6,646.0 972.5,646.8 973.4,646.5 974.3,644.8 975.2,643.2 976.1,641.9 977.0,643.2 977.9,644.5 978.8,645.8 979.7,646.5 980.6,647.0 981.5,646.6 982.4,645.2 983.3,642.6 984.2,640.0 985.1,636.5 986.0,625.8 986.9,615.2 987.8,604.5 988.7,600.9 989.6,599.3 990.5,597.7 991.4,596.1 992.3,593.7 993.2,591.3 994.1,588.6 995.0,584.3 995.9,580.5 996.8,578.0 997.7,576.9 998.6,580.1 999.5,583.3 1000.4,587.2 1001.3,591.8 1002.2,596.3 1003.1,599.5 1004.0,599.5 1004.9,594.4 1005.8,589.4 1006.7,586.6 1007.6,584.4 1008.5,582.1 1009.4,578.8 1010.3,574.3 1011.2,569.9 1012.1,565.7 1013.0,564.9 1013.9,568.2 1014.8,572.8 1015.7,579.5 1016.6,586.6 1017.5,593.7 1018.4,600.0 1019.3,604.0 1020.2,605.5 1021.1,606.6 1022.0,605.9 1022.9,605.1 1023.8,604.4 1024.7,607.2 1025.6,613.5 1026.5,621.3 1027.4,626.8 1028.3,630.2 1029.2,633.6 1030.1,636.7 1031.0,635.8 1031.9,634.9 1032.8,634.0 1033.7,632.7 1034.6,631.2 1035.5,629.7 1036.4,627.8 1037.3,625.6 1038.2,623.3 1039.1,621.6 1040.0,622.1 1040.9,622.6 1041.8,623.1 1042.7,621.4 1043.6,619.3 1044.5,617.2 1045.4,614.6 1046.3,610.9 1047.2,607.3 1048.1,603.5 1049.0,599.1 1049.9,594.8 1050.8,590.4 1051.7,589.3 1052.6,589.2 1053.5,589.1 1054.4,590.5 1055.3,593.1 1056.2,595.8 1057.1,597.8 1058.0,595.5 1058.9,590.9 1059.8,586.4 1060.7,582.7 1061.6,581.7 1062.5,589.6 1063.4,598.3 1064.3,607.5 1065.2,617.5 1066.1,629.6 1067.0,639.3 1067.9,649.0 1068.8,651.1 1069.7,654.8 1070.6,658.9 1071.5,662.9 1072.4,666.1 1073.3,668.1 1074.2,670.1 1075.1,671.0 1076.0,668.3 1076.9,665.6 1077.8,662.9 1078.7,663.8 1079.6,664.9 1080.5,666.1 1081.4,665.9 1082.3,664.7 1083.2,663.4 1084.1,662.9 1085.0,664.3 1085.9,665.8 1086.8,667.3 1087.7,668.7 1088.6,670.0 1089.5,671.4 1090.4,667.3 1091.3,662.1 1092.2,656.9 1093.1,652.1 1094.0,646.7 1094.9,637.7 1095.8,628.8 1096.7,621.4 1097.6,614.2 1098.5,607.6 1099.4,600.1 1100.3,591.6 1101.2,583.0 1102.1,575.7 1103.0,576.1 1103.9,576.5 1104.8,576.9 1105.7,576.8 1106.6,576.8 1107.5,576.7 1108.4,575.8 1109.3,571.1 1110.2,565.4 1111.1,560.0 1112.0,555.2 1112.9,550.5 1113.8,545.8 1114.7,541.2 1115.6,541.2 1116.5,543.4 1117.4,547.0 1118.3,551.3 1119.2,555.7 1120.1,559.1 1121.0,560.1 1121.9,566.0 1122.8,571.9 1123.7,579.1 1124.6,586.4 1125.5,593.6 1126.4,598.1 1127.3,602.7 1128.2,607.2 1129.1,611.6 1130.0,615.4 1130.9,621.6 1131.8,627.7 1132.7,633.8 1133.6,640.0 1134.5,646.8 1135.4,652.8 1136.3,655.7 1137.2,654.0 1138.1,653.5 1139.0,655.2 1139.9,656.9 1140.8,658.6 1141.7,655.8 1142.6,652.9 1143.5,650.1 1144.4,649.0 1145.3,649.0 1146.2,648.8 1147.1,648.2 1148.0,647.1 1148.9,646.1 1149.8,644.8 1150.7,642.8 1151.6,640.9 1152.5,638.9 1153.4,637.1 1154.3,634.5 1155.2,631.9 1156.1,628.8 1157.0,624.7 1157.9,622.0 1158.8,621.0 1159.7,620.7 1160.6,620.4 1161.5,620.2 1162.4,619.9 1163.3,619.7 1164.2,619.4 1165.1,619.0 1166.0,618.2 1166.9,617.6 1167.8,617.1 1168.7,615.4 1169.6,613.7 1170.5,612.1 1171.4,611.2 1172.3,610.6 1173.2,610.0 1174.1,609.1 1175.0,607.9 1175.9,606.7 1176.8,605.5 1177.7,604.2 1178.6,602.9 1179.5,601.6 1180.4,602.1 1181.3,603.4 1182.2,604.7 1183.1,605.1 1184.0,604.1 1184.9,603.1 1185.8,602.2 1186.7,602.3 1187.6,602.9 1188.5,603.8 1189.4,604.3 1190.3,604.6 1191.2,604.9 1192.1,605.4 1193.0,606.3 1193.9,607.3 1194.8,608.1 1195.7,607.5 1196.6,607.0 1197.5,606.4 1198.4,608.1 1199.3,610.6 1200.2,613.2 1201.1,615.1 1202.0,614.9 1202.9,614.6 1203.8,614.4 1204.7,614.3 1205.6,614.2 1206.5,614.2 1207.4,615.7 1208.3,617.7 1209.2,619.7 1210.1,621.7 1211.0,622.4 1211.9,621.4 1212.8,620.3 1213.7,616.2 1214.6,612.1 1215.5,608.1 1216.4,606.6 1217.3,605.6 1218.2,604.1 1219.1,601.8 1220.0,598.4 1220.9,595.0 1221.8,592.3 1222.7,590.7 1223.6,589.4 1224.5,588.3 1225.4,586.5 1226.3,584.4 1227.2,582.3 1228.1,580.5 1229.0,579.1 1229.9,577.7 1230.8,576.3 1231.7,574.5 1232.6,573.4 1233.5,572.5 1234.4,572.3 1235.3,573.1 1236.2,573.8 1237.1,574.1 1238.0,573.8 1238.9,589.6 1239.8,605.8 1240.7,621.5 1241.6,636.1 1242.5,650.7 1243.4,653.3 1244.3,655.4 1245.2,656.5 1246.1,656.9 1247.0,657.1 1247.9,657.3 1248.8,657.7 1249.7,658.9 1250.6,660.2 1251.5,661.4 1252.4,663.2 1253.3,665.2 1254.2,667.2 1255.1,667.8 1256.0,666.6 1256.9,665.4 1257.8,664.3 1258.7,664.1 1259.6,663.7 1260.5,663.2 1261.4,664.2 1262.3,665.6 1263.2,667.0 1264.1,667.5 1265.0,667.0 1265.9,666.5 1266.8,666.2 1267.7,667.2 1268.6,668.2 1269.5,669.3 1270.4,668.9 1271.3,667.7 1272.2,666.4 1273.1,666.0 1274.0,666.3 1274.9,666.6 1275.8,666.5 1276.7,664.2 1277.6,661.9 1278.5,659.6 1279.4,659.4 1280.3,659.5 1281.2,659.6 1282.1,660.0 1283.0,660.7 1283.9,661.4 1284.8,662.0 1285.7,661.8 1286.6,661.6 1287.5,661.4 1288.4,659.6 1289.3,657.6 1290.2,655.6 1290.2,715.8 1289.3,718.6 1288.4,721.4 1287.5,724.0 1286.6,726.0 1285.7,728.0 1284.8,729.2 1283.9,724.4 1283.0,719.1 1282.1,713.8 1281.2,711.8 1280.3,713.1 1279.4,714.3 1278.5,715.2 1277.6,716.4 1276.7,717.5 1275.8,718.7 1274.9,719.8 1274.0,721.0 1273.1,722.1 1272.2,723.7 1271.3,725.7 1270.4,727.8 1269.5,728.0 1268.6,726.4 1267.7,724.9 1266.8,723.4 1265.9,721.7 1265.0,720.0 1264.1,718.3 1263.2,717.0 1262.3,716.0 1261.4,715.0 1260.5,714.1 1259.6,713.6 1258.7,713.7 1257.8,713.9 1256.9,715.1 1256.0,716.4 1255.1,717.7 1254.2,717.9 1253.3,717.2 1252.4,716.5 1251.5,716.1 1250.6,717.6 1249.7,720.5 1248.8,723.3 1247.9,725.3 1247.0,727.2 1246.1,729.1 1245.2,731.3 1244.3,731.9 1243.4,728.9 1242.5,725.8 1241.6,719.9 1240.7,714.0 1239.8,708.5 1238.9,704.4 1238.0,700.3 1237.1,699.9 1236.2,698.1 1235.3,695.4 1234.4,692.6 1233.5,690.7 1232.6,690.6 1231.7,691.2 1230.8,693.2 1229.9,692.8 1229.0,692.2 1228.1,691.5 1227.2,692.3 1226.3,694.1 1225.4,695.9 1224.5,697.8 1223.6,700.0 1222.7,702.2 1221.8,704.5 1220.9,705.6 1220.0,708.4 1219.1,711.1 1218.2,715.0 1217.3,719.7 1216.4,722.3 1215.5,723.9 1214.6,725.0 1213.7,726.0 1212.8,727.1 1211.9,726.2 1211.0,725.1 1210.1,724.2 1209.2,724.7 1208.3,725.9 1207.4,727.2 1206.5,728.5 1205.6,729.1 1204.7,728.7 1203.8,728.3 1202.9,726.1 1202.0,723.8 1201.1,721.5 1200.2,720.8 1199.3,722.4 1198.4,724.3 1197.5,725.6 1196.6,725.3 1195.7,725.0 1194.8,724.7 1193.9,723.7 1193.0,722.7 1192.1,721.8 1191.2,722.5 1190.3,724.4 1189.4,726.2 1188.5,727.0 1187.6,725.9 1186.7,724.8 1185.8,723.6 1184.9,723.2 1184.0,722.8 1183.1,722.5 1182.2,721.7 1181.3,720.8 1180.4,719.9 1179.5,719.3 1178.6,719.7 1177.7,719.2 1176.8,718.7 1175.9,716.6 1175.0,714.5 1174.1,712.5 1173.2,710.8 1172.3,709.2 1171.4,707.6 1170.5,706.1 1169.6,705.7 1168.7,706.7 1167.8,707.6 1166.9,707.8 1166.0,707.9 1165.1,708.2 1164.2,709.6 1163.3,711.7 1162.4,713.7 1161.5,716.1 1160.6,719.4 1159.7,722.7 1158.8,726.0 1157.9,727.1 1157.0,726.7 1156.1,725.0 1155.2,723.2 1154.3,721.4 1153.4,719.8 1152.5,718.4 1151.6,717.4 1150.7,716.4 1149.8,715.4 1148.9,714.3 1148.0,717.6 1147.1,721.0 1146.2,725.1 1145.3,727.8 1144.4,729.1 1143.5,729.9 1142.6,729.6 1141.7,729.4 1140.8,729.2 1139.9,731.1 1139.0,733.0 1138.1,734.9 1137.2,732.8 1136.3,729.7 1135.4,725.5 1134.5,720.9 1133.6,718.1 1132.7,716.7 1131.8,715.5 1130.9,715.0 1130.0,714.4 1129.1,714.9 1128.2,715.9 1127.3,717.1 1126.4,718.2 1125.5,719.3 1124.6,720.1 1123.7,721.0 1122.8,721.8 1121.9,721.2 1121.0,720.6 1120.1,720.0 1119.2,720.6 1118.3,717.1 1117.4,712.3 1116.5,707.4 1115.6,702.3 1114.7,699.4 1113.8,700.9 1112.9,700.6 1112.0,700.3 1111.1,700.0 1110.2,702.8 1109.3,706.7 1108.4,710.6 1107.5,712.8 1106.6,713.0 1105.7,713.1 1104.8,713.2 1103.9,712.5 1103.0,711.8 1102.1,711.2 1101.2,713.1 1100.3,716.1 1099.4,719.1 1098.5,720.7 1097.6,720.0 1096.7,719.4 1095.8,718.9 1094.9,720.5 1094.0,722.3 1093.1,724.2 1092.2,724.1 1091.3,723.2 1090.4,722.4 1089.5,723.0 1088.6,724.1 1087.7,725.2 1086.8,726.2 1085.9,727.2 1085.0,728.1 1084.1,729.1 1083.2,728.0 1082.3,726.4 1081.4,724.7 1080.5,724.9 1079.6,727.6 1078.7,730.3 1077.8,732.5 1076.9,731.1 1076.0,729.6 1075.1,728.1 1074.2,726.8 1073.3,725.7 1072.4,724.5 1071.5,724.4 1070.6,725.8 1069.7,727.1 1068.8,728.2 1067.9,726.9 1067.0,725.1 1066.1,724.0 1065.2,723.5 1064.3,723.4 1063.4,723.2 1062.5,722.8 1061.6,722.1 1060.7,721.6 1059.8,721.2 1058.9,722.0 1058.0,722.8 1057.1,723.7 1056.2,722.9 1055.3,721.7 1054.4,720.5 1053.5,720.9 1052.6,723.2 1051.7,725.5 1050.8,727.4 1049.9,726.9 1049.0,726.4 1048.1,725.8 1047.2,727.0 1046.3,728.5 1045.4,730.1 1044.5,730.8 1043.6,730.8 1042.7,730.8 1041.8,730.4 1040.9,728.3 1040.0,726.2 1039.1,724.1 1038.2,723.9 1037.3,724.3 1036.4,724.6 1035.5,724.4 1034.6,723.8 1033.7,723.1 1032.8,722.6 1031.9,723.9 1031.0,725.1 1030.1,726.3 1029.2,726.1 1028.3,725.6 1027.4,725.1 1026.5,725.7 1025.6,727.5 1024.7,728.2 1023.8,726.6 1022.9,722.5 1022.0,718.5 1021.1,714.4 1020.2,712.3 1019.3,710.5 1018.4,707.8 1017.5,704.3 1016.6,700.5 1015.7,696.7 1014.8,693.0 1013.9,689.3 1013.0,689.4 1012.1,692.3 1011.2,694.9 1010.3,697.3 1009.4,699.8 1008.5,703.0 1007.6,704.4 1006.7,702.8 1005.8,701.2 1004.9,699.5 1004.0,697.9 1003.1,696.3 1002.2,693.7 1001.3,695.5 1000.4,698.7 999.5,701.7 998.6,704.4 997.7,707.1 996.8,710.6 995.9,715.6 995.0,716.3 994.1,714.9 993.2,713.4 992.3,711.9 991.4,710.4 990.5,709.5 989.6,708.6 988.7,707.6 987.8,707.8 986.9,711.6 986.0,715.7 985.1,719.9 984.2,721.6 983.3,723.1 982.4,724.5 981.5,726.0 980.6,727.3 979.7,726.7 978.8,726.2 977.9,726.0 977.0,725.9 976.1,725.8 975.2,726.5 974.3,727.4 973.4,728.2 972.5,728.2 971.6,727.6 970.7,727.0 969.8,726.3 968.9,725.3 968.0,724.4 967.1,723.5 966.2,722.9 965.3,722.4 964.4,722.0 963.5,722.1 962.6,722.5 961.7,723.0 960.8,723.4 959.9,723.5 959.0,723.4 958.1,723.1 957.2,722.0 956.3,720.9 955.4,719.7 954.5,719.3 953.6,719.3 952.7,719.2 951.8,719.5 950.9,720.6 950.0,721.7 949.1,722.9 948.2,723.2 947.3,723.4 946.4,723.7 945.5,722.4 944.6,720.2 943.7,717.9 942.8,716.3 941.9,717.7 941.0,719.9 940.1,722.0 939.2,724.1 938.3,726.1 937.4,728.2 936.5,730.0 935.6,731.6 934.7,733.2 933.8,733.3 932.9,727.9 932.0,722.5 931.1,719.1 930.2,717.2 929.3,715.3 928.4,713.4 927.5,711.5 926.6,711.8 925.7,712.2 924.8,712.9 923.9,714.8 923.0,716.6 922.1,713.7 921.2,707.5 920.3,703.4 919.4,699.4 918.5,696.9 917.6,695.5 916.7,695.0 915.8,695.8 914.9,695.5 914.0,695.3 913.1,695.0 912.2,696.7 911.3,698.4 910.4,700.6 909.5,704.1 908.6,707.5 907.7,710.8 906.8,714.0 905.9,716.7 905.0,719.5 904.1,722.2 903.2,720.4 902.3,718.0 901.4,715.6 900.5,713.6 899.6,711.8 898.7,710.0 897.8,707.5 896.9,709.5 896.0,711.4 895.1,713.3 894.2,718.6 893.3,723.9 892.4,729.2 891.5,733.3 890.6,732.9 889.7,732.5 888.8,732.1 887.9,731.6 887.0,731.1 886.1,730.6 885.2,727.8 884.3,724.8 883.4,721.7 882.5,720.2 881.6,719.5 880.7,718.8 879.8,717.0 878.9,713.1 878.0,707.6 877.1,701.6 876.2,698.0 875.3,694.8 874.4,692.7 873.5,698.2 872.6,703.0 871.7,707.8 870.8,712.9 869.9,718.5 869.0,724.2 868.1,723.0 867.2,723.3 866.3,723.6 865.4,723.7 864.5,722.1 863.6,719.7 862.7,717.2 861.8,715.4 860.9,714.4 860.0,713.5 859.1,712.6 858.2,712.2 857.3,713.3 856.4,719.6 855.5,724.6 854.6,729.0 853.7,731.9 852.8,732.2 851.9,733.4 851.0,734.7 850.1,736.0 849.2,738.0 848.3,739.9 847.4,741.1 846.5,740.4 845.6,738.9 844.7,737.5 843.8,736.4 842.9,735.5 842.0,734.6 841.1,733.9 840.2,734.3 839.3,734.7 838.4,735.2 837.5,735.9 836.6,736.8 835.7,737.6 834.8,737.7 833.9,736.6 833.0,736.2 832.1,735.9 831.2,735.2 830.3,734.5 829.4,733.8 828.5,735.8 827.6,738.7 826.7,741.6 825.8,743.3 824.9,742.8 824.0,742.2 823.1,741.5 822.2,741.0 821.3,740.4 820.4,739.8 819.5,739.6 818.6,739.6 817.7,739.5 816.8,739.9 815.9,741.0 815.0,742.2 814.1,743.3 813.2,743.2 812.3,743.1 811.4,743.0 810.5,744.0 809.6,745.4 808.7,746.8 807.8,747.9 806.9,748.6 806.0,749.5 805.1,750.4 804.2,750.9 803.3,751.5 802.4,752.0 801.5,752.2 800.6,752.3 799.7,752.4 798.8,753.5 797.9,755.5 797.0,757.5 796.1,759.2 795.2,759.5 794.3,759.7 793.4,760.0 792.5,760.8 791.6,761.6 790.7,762.5 789.8,762.5 788.9,761.6 788.0,760.6 787.1,760.3 786.2,764.5 785.3,768.8 784.4,772.2 783.5,772.3 782.6,771.6 781.7,770.9 780.8,770.1 779.9,769.1 779.0,768.2 778.1,767.3 777.2,766.4 776.3,765.5 775.4,764.6 774.5,762.9 773.6,761.1 772.7,759.3 771.8,755.8 770.9,752.3 770.0,748.9 769.1,745.7 768.2,743.9 767.3,749.3 766.4,756.8 765.5,761.6 764.6,765.7 763.7,767.8 762.8,766.7 761.9,766.4 761.0,766.0 760.1,765.9 759.2,767.1 758.3,768.3 757.4,769.3 756.5,767.8 755.6,765.7 754.7,763.6 753.8,762.1 752.9,761.2 752.0,760.4 751.1,759.5 750.2,758.7 749.3,757.9 748.4,757.0 747.5,755.6 746.6,754.2 745.7,752.7 744.8,751.9 743.9,751.7 743.0,751.6 742.1,751.1 741.2,748.9 740.3,746.5 739.4,743.9 738.5,741.7 737.6,739.7 736.7,737.6 735.8,736.8 734.9,739.5 734.0,742.2 733.1,745.1 732.2,748.8 731.3,752.5 730.4,756.3 729.5,758.6 728.6,760.6 727.7,762.6 726.8,762.9 725.9,762.4 725.0,761.9 724.1,761.7 723.2,762.7 722.3,763.8 721.4,764.8 720.5,763.8 719.6,762.5 718.7,761.2 717.8,760.7 716.9,760.9 716.0,761.1 715.1,761.4 714.2,762.1 713.3,762.8 712.4,763.5 711.5,762.3 710.6,760.8 709.7,759.2 708.8,758.8 707.9,759.2 707.0,759.7 706.1,759.8 705.2,758.9 704.3,758.0 703.4,757.0 702.5,758.1 701.6,759.4 700.7,760.8 699.8,761.4 698.9,761.3 698.0,761.3 697.1,761.1 696.2,760.3 695.3,759.4 694.4,758.6 693.5,758.2 692.6,757.9 691.7,757.5 690.8,757.8 689.9,758.4 689.0,759.0 688.1,759.2 687.2,758.3 686.3,757.4 685.4,756.5 684.5,757.6 683.6,759.0 682.7,760.4 681.8,760.3 680.9,759.3 680.0,758.3 679.1,757.6 678.2,757.8 677.3,758.1 676.4,758.3 675.5,758.9 674.6,759.6 673.7,760.2 672.8,760.5 671.9,760.7 671.0,760.8 670.1,761.4 669.2,763.3 668.3,765.2 667.4,767.1 666.5,765.7 665.6,764.0 664.7,762.3 663.8,762.6 662.9,763.7 662.0,764.9 661.1,765.7 660.2,765.7 659.3,765.8 658.4,765.8 657.5,767.3 656.6,768.9 655.7,770.5 654.8,770.4 653.9,769.2 653.0,768.1 652.1,767.0 651.2,766.1 650.3,765.2 649.4,764.3 648.5,764.6 647.6,764.9 646.7,765.2 645.8,765.8 644.9,766.5 644.0,767.2 643.1,768.0 642.2,769.0 641.3,770.0 640.4,771.0 639.5,769.3 638.6,767.5 637.7,765.7 636.8,765.4 635.9,766.1 635.0,766.8 634.1,767.3 633.2,766.4 632.3,765.4 631.4,764.4 630.5,764.8 629.6,765.1 628.7,765.5 627.8,764.1 626.9,760.2 626.0,755.8 625.1,751.5 624.2,747.4 623.3,743.3 622.4,739.2 621.5,737.5 620.6,737.9 619.7,740.9 618.8,742.9 617.9,744.4 617.0,745.9 616.1,747.3 615.2,748.4 614.3,749.6 613.4,750.8 612.5,751.7 611.6,749.5 610.7,747.4 609.8,745.3 608.9,743.2 608.0,741.2 607.1,739.6 606.2,739.1 605.3,738.5 604.4,737.9 603.5,736.1 602.6,735.2 601.7,734.2 600.8,733.4 599.9,732.5 599.0,731.7 598.1,731.1 597.2,731.1 596.3,731.1 595.4,731.8 594.5,733.9 593.6,736.1 592.7,738.3 591.8,740.0 590.9,741.4 590.0,742.7 589.1,744.7 588.2,747.7 587.3,750.7 586.4,751.3 585.5,748.2 584.6,745.2 583.7,742.2 582.8,741.1 581.9,740.8 581.0,740.5 580.1,739.7 579.2,738.1 578.3,737.0 577.4,736.3 576.5,733.4 575.6,730.5 574.7,727.7 573.8,726.7 572.9,726.6 572.0,726.5 571.1,726.3 570.2,725.9 569.3,725.6 568.4,725.2 567.5,724.7 566.6,724.2 565.7,724.1 564.8,723.9 563.9,723.4 563.0,722.8 562.1,722.4 561.2,722.2 560.3,722.0 559.4,721.8 558.5,723.2 557.6,724.6 556.7,725.3 555.8,725.2 554.9,724.9 554.0,724.5 553.1,723.9 552.2,723.1 551.3,722.3 550.4,721.5 549.5,720.4 548.6,719.3 547.7,718.2 546.8,719.5 545.9,721.5 545.0,723.6 544.1,726.1 543.2,727.6 542.3,729.2 541.4,731.0 540.5,734.8 539.6,738.6 538.7,742.4 537.8,744.9 536.9,747.0 536.0,749.1 535.1,749.2 534.2,748.8 533.3,748.5 532.4,748.4 531.5,749.7 530.6,750.7 529.7,751.7 528.8,751.1 527.9,750.0 527.0,748.9 526.1,748.0 525.2,746.9 524.3,744.9 523.4,743.0 522.5,742.0 521.6,741.1 520.7,740.0 519.8,739.8 518.9,739.8 518.0,739.8 517.1,738.7 516.2,736.2 515.3,733.6 514.4,733.1 513.5,734.8 512.6,736.4 511.7,738.1 510.8,737.4 509.9,736.2 509.0,734.9 508.1,735.2 507.2,737.3 506.3,738.7 505.4,737.4 504.5,734.4 503.6,731.4 502.7,728.5 501.8,727.9 500.9,727.8 500.0,727.8 499.1,728.2 498.2,727.5 497.3,726.8 496.4,726.2 495.5,725.8 494.6,725.4 493.7,725.1 492.8,723.6 491.9,735.7 491.0,749.6 490.1,757.1 489.2,756.8 488.3,756.4 487.4,756.0 486.5,755.7 485.6,755.4 484.7,755.2 483.8,755.1 482.9,755.1 482.0,755.1 481.1,754.6 480.2,753.4 479.3,752.3 478.4,751.2 477.5,750.3 476.6,749.4 475.7,748.6 474.8,747.8 473.9,747.1 473.0,746.4 472.1,746.9 471.2,748.7 470.3,750.5 469.4,752.1 468.5,752.5 467.6,752.9 466.7,753.3 465.8,755.7 464.9,758.4 464.0,761.1 463.1,762.4 462.2,762.5 461.3,761.3 460.4,759.9 459.5,758.2 458.6,756.6 457.7,755.0 456.8,756.2 455.9,757.9 455.0,759.5 454.1,759.3 453.2,757.3 452.3,755.3 451.4,753.1 450.5,750.5 449.6,748.6 448.7,746.6 447.8,748.7 446.9,751.4 446.0,754.1 445.1,755.6 444.2,756.0 443.3,756.5 442.4,757.6 441.5,761.3 440.6,765.0 439.7,768.7 438.8,769.2 437.9,774.5 437.0,780.9 436.1,781.1 435.2,781.3 434.3,781.6 433.4,781.9 432.5,782.5 431.6,783.0 430.7,783.5 429.8,783.9 428.9,784.2 428.0,784.6 427.1,785.0 426.2,785.5 425.3,786.0 424.4,786.4 423.5,786.8 422.6,787.1 421.7,787.5 420.8,787.7 419.9,788.0 419.0,788.2 418.1,788.5 417.2,788.8 416.3,789.1 415.4,789.4 414.5,789.6 413.6,789.9 412.7,790.1 411.8,790.4 410.9,790.8 410.0,791.1 409.1,791.3 408.2,791.6 407.3,791.8 406.4,792.1 405.5,792.4 404.6,792.7 403.7,793.1 402.8,793.3 401.9,793.6 401.0,793.8 400.1,809.0 399.2,810.6 398.3,810.5 397.4,810.4 396.5,810.4 395.6,810.3 394.7,810.2 393.8,810.2 392.9,810.2 392.0,810.2 391.1,810.1 390.2,810.0 389.3,810.0 388.4,809.9 387.5,809.8 386.6,809.8 385.7,809.7 384.8,809.6 383.9,809.6 383.0,809.5 382.1,809.4 381.2,809.3 380.3,809.3 379.4,809.2 378.5,809.1 377.6,809.0 376.7,809.0 375.8,808.8 374.9,808.7 374.0,808.6 373.1,808.6 372.2,808.5 371.3,808.5 370.4,808.4 369.5,808.4 368.6,808.4 367.7,808.4 366.8,808.4 365.9,808.4 365.0,808.4 364.1,808.3 363.2,808.3 362.3,808.3 361.4,808.3 360.5,808.3 359.6,808.3 358.7,808.3 357.8,808.3 356.9,808.3 356.0,808.3 355.1,808.4 354.2,808.3 353.3,808.3 352.4,808.3 351.5,808.4 350.6,808.4 349.7,808.4 348.8,808.4 347.9,808.3 347.0,808.3 346.1,808.3 345.2,808.3 344.3,808.3 343.4,808.3 342.5,808.3 341.6,808.3 340.7,808.3 339.8,808.3 338.9,808.3 338.0,808.3 337.1,808.3 336.2,808.3 335.3,808.3 334.4,808.3 333.5,808.3 332.6,808.3 331.7,808.3 330.8,808.3 329.9,808.3 329.0,808.4 328.1,808.4 327.2,808.4 326.3,808.3 325.4,808.4 324.5,808.4 323.6,808.4 322.7,808.4 321.8,808.4 320.9,808.4 320.0,808.3 319.1,808.3 318.2,808.3 317.3,808.3 316.4,808.3 315.5,808.4 314.6,808.4 313.7,808.4 312.8,808.4 311.9,808.3 311.0,808.3 310.1,808.3 309.2,808.3 308.3,808.3 307.4,808.3 306.5,808.3 305.6,808.3 304.7,808.3 303.8,808.3 302.9,808.4 302.0,808.4 301.1,808.4 300.2,808.4 299.3,808.3 298.4,808.3 297.5,808.3 296.6,808.3 295.7,808.3 294.8,808.3 293.9,808.3 293.0,808.3 292.1,808.3 291.2,808.4 290.3,808.4 289.4,808.4 288.5,808.4 287.6,808.4 286.7,808.4 285.8,808.4 284.9,808.4 284.0,808.4 283.1,808.4 282.2,808.4 281.3,808.3 280.4,808.3 279.5,808.3 278.6,808.3 277.7,808.3 276.8,808.3 275.9,808.4 275.0,808.4 274.1,808.4 273.2,808.4 272.3,808.4 271.4,808.4 270.5,808.3 269.6,808.3 268.7,808.3 267.8,808.3 266.9,808.3 266.0,808.3 265.1,808.3 264.2,808.3 263.3,808.4 262.4,808.4 261.5,808.3 260.6,808.3 259.7,808.3 258.8,808.3 257.9,808.3 257.0,808.3 256.1,808.3 255.2,808.3 254.3,808.3 253.4,808.3 252.5,808.3 251.6,808.3 250.7,808.3 249.8,808.3 248.9,808.3 248.0,808.3 247.1,808.3 246.2,808.3 245.3,808.3 244.4,808.3 243.5,808.3 242.6,808.3 241.7,808.3 240.8,808.3 239.9,808.4 239.0,808.4 238.1,808.4 237.2,808.3 236.3,808.3 235.4,808.2 234.5,808.3 233.6,808.3 232.7,808.3 231.8,808.3 230.9,808.4 230.0,808.4 229.1,808.4 228.2,808.4 227.3,808.4 226.4,808.4 225.5,808.4 224.6,808.4 223.7,808.4 222.8,808.3 221.9,808.3 221.0,808.3 220.1,808.3 219.2,808.3 218.3,808.3 217.4,808.3 216.5,808.3 215.6,808.3 214.7,808.3 213.8,808.3 212.9,808.3 212.0,808.3 211.1,808.3 210.2,808.3 209.3,808.3 208.4,808.3 207.5,808.3 206.6,808.3 205.7,808.4 204.8,808.3 203.9,808.3 203.0,808.3 202.1,808.3 201.2,808.3 200.3,808.3 199.4,808.3 198.5,808.4 197.6,808.4 196.7,808.4 195.8,808.3 194.9,808.3 194.0,808.3 193.1,808.3 192.2,808.4 191.3,808.4 190.4,808.4 189.5,808.4 188.6,808.4 187.7,808.4 186.8,808.4 185.9,808.4 185.0,808.4 184.1,808.4 183.2,808.4 182.3,808.4 181.4,808.4 180.5,808.4 179.6,808.4 178.7,808.4 177.8,808.4 176.9,808.4 176.0,808.4 175.1,808.4 174.2,808.4 173.3,808.3 172.4,808.4 171.5,808.4 170.6,808.4 169.7,808.4 168.8,808.4 167.9,808.4 167.0,808.4 166.1,808.4 165.2,808.4 164.3,808.4 163.4,808.4 162.5,808.3 161.6,808.3 160.7,808.3 159.8,808.3 158.9,808.3 158.0,808.4 157.1,808.4 156.2,808.3 155.3,808.3 154.4,808.3 153.5,808.3 152.6,808.3 151.7,808.3 150.8,808.3 149.9,808.3 149.0,808.3 148.1,808.4 147.2,808.4 146.3,808.4 145.4,808.4 144.5,808.4 143.6,808.4 142.7,808.3 141.8,808.3 140.9,808.3 140.0,808.4 139.1,808.4 138.2,808.4 137.3,808.4 136.4,808.4 135.5,808.4 134.6,808.4 133.7,808.4 132.8,808.4 131.9,808.4 131.0,808.4 130.1,808.4 129.2,808.4 128.3,808.4 127.4,808.4 126.5,808.4 125.6,808.4 124.7,808.4 123.8,808.4 122.9,808.4 122.0,808.4 121.1,808.3 120.2,808.3 119.3,808.3 118.4,808.3 117.5,808.3 116.6,808.3 115.7,808.4 114.8,808.4 113.9,808.3 113.0,808.3 112.1,808.3 111.2,808.3 110.3,808.3 109.4,808.3 108.5,808.3 107.6,808.3 106.7,808.3 105.8,808.3 104.9,808.4 104.0,808.4 103.1,808.4 102.2,808.4 101.3,808.4 100.4,808.4 99.5,808.3 98.6,808.3 97.7,808.3 96.8,808.4 95.9,808.7 95.0,809.0 94.1,809.3 93.2,809.6 92.3,810.0 91.4,810.2 90.5,810.5 89.6,810.7 88.7,810.9 87.8,811.0 86.9,811.2 86.0,811.4 85.1,811.6 84.2,811.8 83.3,812.0 82.4,812.2 81.5,812.4 80.6,812.5 79.7,814.0 78.8,817.2 77.9,817.2 77.0,817.2 76.1,817.2 75.2,817.2 74.3,817.2 73.4,817.2 72.5,817.2 71.6,817.2 70.7,817.2 69.8,817.2 68.9,817.2 68.0,817.3" fill="#00ff00"/>
<polygon points="1293.0,801.5 1294.0,801.5 1295.0,801.5 1296.0,801.5 1297.0,801.4 1298.0,801.4 1299.0,801.4 1300.0,801.4 1301.0,801.4 1302.0,801.4 1303.0,801.4 1304.0,801.4 1305.0,801.4 1306.0,801.4 1307.0,801.4 1308.0,801.4 1309.0,801.3 1310.0,801.4 1311.0,801.4 1312.0,801.4 1313.0,801.4 1314.0,801.4 1315.0,801.4 1316.0,801.3 1317.0,801.3 1318.0,801.3 1319.0,801.3 1320.0,801.3 1321.0,801.3 1322.0,801.3 1323.0,801.3 1324.0,801.3 1325.0,801.3 1326.0,801.3 1327.0,801.3 1328.0,801.3 1329.0,801.3 1330.0,801.3 1331.0,801.2 1332.0,801.2 1333.0,801.2 1334.0,801.2 1335.0,801.2 1336.0,801.2 1337.0,801.2 1338.0,801.2 1339.0,801.2 1340.0,801.2 1341.0,801.2 1342.0,801.2 1343.0,801.2 1344.0,801.2 1345.0,801.1 1346.0,801.1 1347.0,801.1 1348.0,801.1 1349.0,801.1 1350.0,801.1 1351.0,801.2 1352.0,801.2 1353.0,801.2 1354.0,801.1 1355.0,801.1 1356.0,801.1 1357.0,801.1 1358.0,801.1 1359.0,801.0 1360.0,801.0 1361.0,801.0 1362.0,801.0 1363.0,801.0 1364.0,801.0 1365.0,801.0 1366.0,801.0 1367.0,800.9 1367.0,805.8 1366.0,805.8 1365.0,805.8 1364.0,805.8 1363.0,805.9 1362.0,805.9 1361.0,805.9 1360.0,805.9 1359.0,805.9 1358.0,805.9 1357.0,805.9 1356.0,805.9 1355.0,805.9 1354.0,805.9 1353.0,805.9 1352.0,805.9 1351.0,805.9 1350.0,805.9 1349.0,805.9 1348.0,805.9 1347.0,805.9 1346.0,805.9 1345.0,806.0 1344.0,806.0 1343.0,806.0 1342.0,806.0 1341.0,805.9 1340.0,805.9 1339.0,806.0 1338.0,806.0 1337.0,806.0 1336.0,806.0 1335.0,806.0 1334.0,806.0 1333.0,806.0 1332.0,806.0 1331.0,806.0 1330.0,806.0 1329.0,806.0 1328.0,806.0 1327.0,806.1 1326.0,806.1 1325.0,806.1 1324.0,806.1 1323.0,806.1 1322.0,806.1 1321.0,806.1 1320.0,806.1 1319.0,806.1 1318.0,806.1 1317.0,806.1 1316.0,806.1 1315.0,806.1 1314.0,806.1 1313.0,806.1 1312.0,806.1 1311.0,806.1 1310.0,806.1 1309.0,806.2 1308.0,806.2 1307.0,806.2 1306.0,806.2 1305.0,806.2 1304.0,806.2 1303.0,806.2 1302.0,806.2 1301.0,806.2 1300.0,806.2 1299.0,806.2 1298.0,806.3 1297.0,806.3 1296.0,806.3 1295.0,806.3 1294.0,806.3 1293.0,806.3" fill="#00ff00"/>
<polyline points="46.8,702.5 47.1,738.9 47.4,701.4 47.7,742.5 48.0,699.7 48.3,734.0 48.6,703.0 48.9,730.0 49.2,701.3 49.5,727.6 49.8,700.0 50.1,695.0 50.4,643.4 50.7,688.0 51.0,647.9 51.3,682.3 51.6,642.9 51.9,688.1 52.2,644.3 52.5,675.2 52.8,640.1 53.1,681.4 53.4,642.0 53.7,675.5 54.0,634.6 54.3,666.7 54.6,639.5 54.9,666.6 55.2,638.5 55.5,666.0 55.8,638.7 56.1,660.9 56.4,632.8 56.7,651.0 57.0,632.7 57.3,640.0 57.7,585.5 58.0,650.0 58.3,640.4 58.6,600.9 58.9,637.6 59.2,608.8 59.5,656.6 59.8,607.7 60.1,635.9 60.4,611.4 60.7,649.4 61.0,610.8 61.3,656.6 61.6,612.0 61.9,634.3 62.2,599.9 62.5,641.3 62.8,598.7 63.1,640.0 63.4,593.8 63.7,652.7 64.0,609.4 64.3,644.5 64.6,592.4 64.9,636.3 65.2,612.6 65.5,650.2 65.8,596.1 66.1,638.1 66.4,595.7 66.7,644.5 67.0,610.5 67.3,656.3 67.5,600.0 67.6,815.0 68.0,812.2 68.5,817.1 68.9,812.6 69.4,817.5 69.8,813.0 70.3,816.4 70.7,812.7 71.2,817.3 71.6,813.4 72.1,817.4 72.5,813.3 73.0,817.5 73.4,813.4 73.9,818.7 74.3,813.2 74.8,818.0 75.2,813.5 75.7,816.6 76.1,813.7 76.6,817.6 77.0,813.6 77.5,817.6 77.9,813.7 78.4,816.6 78.8,814.0 79.3,814.2 79.7,808.9 80.2,812.9 80.6,807.5 81.1,812.9 81.5,807.7 82.0,812.7 82.4,807.4 82.9,812.0 83.3,806.9 83.8,811.3 84.2,808.1 84.7,811.1 85.1,806.9 85.6,811.7 86.0,806.6 86.5,810.3 86.9,806.6 87.4,810.5 87.8,806.9 88.3,810.4 88.7,806.0 89.2,810.9 89.6,805.9 90.1,810.6 90.5,804.3 91.0,810.2 91.4,804.0 91.9,810.3 92.3,803.9 92.8,808.8 93.2,804.6 93.7,810.2 94.1,804.6 94.6,809.4 95.0,803.1 95.5,808.5 95.9,803.0 96.4,808.0 96.8,803.0 97.3,809.3 97.7,803.6 98.2,808.9 98.6,803.3 99.1,807.5 99.5,803.1 100.0,809.5 100.4,803.6 100.9,808.7 101.3,802.7 101.8,807.3 102.2,803.2 102.7,807.4 103.1,803.3 103.6,808.6 104.0,803.5 104.5,809.4 104.9,803.1 105.4,808.4 105.8,801.9 106.3,808.9 106.7,803.2 107.2,808.8 107.6,802.9 108.1,808.5 108.5,803.5 109.0,809.0 109.4,803.9 109.9,807.5 110.3,801.7 110.8,808.5 111.2,804.0 111.7,807.1 112.1,803.6 112.6,808.5 113.0,803.3 113.5,809.3 113.9,803.7 114.4,807.8 114.8,803.3 115.3,808.4 115.7,803.0 116.2,808.6 116.6,803.0 117.1,807.7 117.5,802.7 118.0,808.5 118.4,804.5 118.9,807.9 119.3,803.7 119.8,807.2 120.2,803.2 120.7,807.5 121.1,803.6 121.6,810.1 122.0,803.9 122.5,807.8 122.9,803.8 123.4,808.7 123.8,802.7 124.3,808.6 124.7,802.6 125.2,809.0 125.6,803.1 126.1,808.3 126.5,803.6 127.0,807.9 127.4,804.3 127.9,808.5 128.3,804.0 128.8,808.6 129.2,803.6 129.7,808.3 130.1,803.4 130.6,808.9 131.0,803.2 131.5,808.7 131.9,803.0 132.4,808.7 132.8,803.4 133.3,807.1 133.7,803.2 134.2,808.7 134.6,803.1 135.1,808.3 135.5,803.5 136.0,808.6 136.4,803.6 136.9,808.5 137.3,802.0 137.8,808.8 138.2,803.4 138.7,808.0 139.1,802.9 139.6,808.0 140.0,803.5 140.5,808.6 140.9,803.1 141.4,807.8 141.8,803.4 142.3,808.2 142.7,803.4 143.2,808.7 143.6,803.5 144.1,808.7 144.5,803.6 145.0,808.9 145.4,804.3 145.9,809.1 146.3,802.5 146.8,808.4 147.2,802.6 147.7,808.3 148.1,803.1 148.6,808.1 149.0,803.0 149.5,809.1 149.9,803.9 150.4,807.3 150.8,803.9 151.3,808.7 151.7,803.4 152.2,809.4 152.6,804.0 153.1,809.0 153.5,804.1 154.0,808.6 154.4,803.0 154.9,808.9 155.3,803.2 155.8,808.9 156.2,803.7 156.7,808.3 157.1,803.5 157.6,809.3 158.0,802.4 158.5,808.0 158.9,804.0 159.4,808.8 159.8,803.3 160.3,808.3 160.7,804.0 161.2,809.2 161.6,803.1 162.1,808.1 162.5,803.1 163.0,808.2 163.4,802.7 163.9,809.1 164.3,802.6 164.8,808.9 165.2,803.9 165.7,808.4 166.1,804.1 166.6,808.0 167.0,803.3 167.5,808.4 167.9,803.7 168.4,808.0 168.8,802.8 169.3,807.6 169.7,803.3 170.2,808.4 170.6,803.2 171.1,807.4 171.5,802.8 172.0,807.5 172.4,803.6 172.9,808.2 173.3,802.7 173.8,809.6 174.2,804.1 174.7,808.7 175.1,802.5 175.6,807.6 176.0,802.8 176.5,807.5 176.9,803.4 177.4,808.6 177.8,803.7 178.3,808.8 178.7,802.8 179.2,807.2 179.6,801.3 180.1,808.7 180.5,803.3 181.0,808.5 181.4,804.2 181.9,807.6 182.3,804.0 182.8,807.4 183.2,803.0 183.7,808.3 184.1,803.1 184.6,809.2 185.0,803.2 185.5,809.2 185.9,802.9 186.4,808.2 186.8,803.5 187.3,808.6 187.7,803.5 188.2,808.8 188.6,803.3 189.1,807.2 189.5,804.0 190.0,808.1 190.4,803.4 190.9,807.5 191.3,803.6 191.8,808.4 192.2,803.1 192.7,808.5 193.1,802.7 193.6,808.2 194.0,803.4 194.5,808.2 194.9,803.0 195.4,808.2 195.8,803.6 196.3,808.1 196.7,803.6 197.2,808.6 197.6,802.4 198.1,807.8 198.5,802.5 199.0,808.5 199.4,803.2 199.9,808.5 200.3,803.3 200.8,808.9 201.2,803.1 201.7,807.6 202.1,803.3 202.6,809.2 203.0,802.5 203.5,808.9 203.9,803.5 204.4,808.3 204.8,803.1 205.3,807.5 205.7,803.6 206.2,808.6 206.6,803.3 207.1,809.6 207.5,803.0 208.0,807.8 208.4,803.0 208.9,808.0 209.3,802.3 209.8,807.9 210.2,804.1 210.7,808.2 211.1,804.3 211.6,808.4 212.0,803.7 212.5,808.8 212.9,802.0 213.4,808.8 213.8,803.3 214.3,807.2 214.7,802.7 215.2,808.6 215.6,803.5 216.1,808.4 216.5,801.6 217.0,808.4 217.4,803.3 217.9,808.7 218.3,803.8 218.8,808.8 219.2,802.9 219.7,808.6 220.1,803.1 220.6,808.0 221.0,803.5 221.5,807.4 221.9,801.8 222.4,808.3 222.8,803.9 223.3,808.0 223.7,803.6 224.2,807.5 224.6,802.8 225.1,808.3 225.5,803.9 226.0,808.4 226.4,802.2 226.9,808.5 227.3,803.3 227.8,808.0 228.2,802.4 228.7,808.5 229.1,802.6 229.6,808.0 230.0,803.2 230.5,808.9 230.9,803.4 231.4,808.6 231.8,802.3 232.3,807.8 232.7,803.6 233.2,808.5 233.6,803.1 234.1,808.5 234.5,803.6 235.0,809.1 235.4,803.0 235.9,808.6 236.3,804.5 236.8,808.3 237.2,803.4 237.7,808.6 238.1,803.5 238.6,808.8 239.0,802.5 239.5,809.1 239.9,802.7 240.4,807.8 240.8,803.5 241.3,808.3 241.7,803.9 242.2,808.7 242.6,803.0 243.1,809.0 243.5,802.5 244.0,807.9 244.4,803.9 244.9,809.0 245.3,804.4 245.8,809.4 246.2,803.1 246.7,808.6 247.1,803.5 247.6,808.1 248.0,802.9 248.5,808.6 248.9,803.8 249.4,808.2 249.8,803.4 250.3,808.4 250.7,803.8 251.2,808.1 251.6,803.8 252.1,808.5 252.5,802.8 253.0,808.7 253.4,803.9 253.9,808.3 254.3,803.6 254.8,809.3 255.2,803.8 255.7,807.9 256.1,803.0 256.6,807.6 257.0,802.7 257.5,809.1 257.9,803.3 258.4,809.3 258.8,803.3 259.3,808.7 259.7,804.4 260.2,808.3 260.6,803.2 261.1,809.0 261.5,802.2 262.0,808.2 262.4,802.5 262.9,808.7 263.3,804.7 263.8,808.9 264.2,803.4 264.7,808.9 265.1,802.6 265.6,808.4 266.0,802.8 266.5,806.3 266.9,802.7 267.4,809.1 267.8,802.1 268.3,808.1 268.7,803.1 269.2,808.3 269.6,802.6 270.1,807.6 270.5,804.3 271.0,808.8 271.4,801.7 271.9,807.1 272.3,803.8 272.8,808.2 273.2,802.5 273.7,808.5 274.1,802.8 274.6,807.4 275.0,804.3 275.5,809.7 275.9,803.6 276.4,808.6 276.8,803.8 277.3,807.6 277.7,804.4 278.2,808.0 278.6,804.2 279.1,808.0 279.5,803.6 280.0,808.5 280.4,802.1 280.9,808.1 281.3,803.3 281.8,807.8 282.2,803.6 282.7,809.3 283.1,802.8 283.6,808.2 284.0,803.2 284.5,808.3 284.9,803.1 285.4,808.4 285.8,803.0 286.3,808.7 286.7,803.8 287.2,808.0 287.6,802.5 288.1,807.3 288.5,803.9 289.0,807.7 289.4,802.8 289.9,808.1 290.3,802.7 290.8,808.0 291.2,804.7 291.7,808.3 292.1,803.2 292.6,808.0 293.0,803.0 293.5,806.6 293.9,803.2 294.4,807.8 294.8,803.3 295.3,808.1 295.7,803.3 296.2,808.4 296.6,803.2 297.1,807.9 297.5,803.9 298.0,807.9 298.4,803.7 298.9,809.0 299.3,802.7 299.8,808.0 300.2,803.2 300.7,808.4 301.1,803.6 301.6,807.9 302.0,803.9 302.5,807.1 302.9,803.5 303.4,808.0 303.8,802.7 304.3,809.1 304.7,804.5 305.2,808.4 305.6,804.1 306.1,808.0 306.5,802.2 307.0,807.5 307.4,802.3 307.9,809.8 308.3,802.3 308.8,808.8 309.2,803.8 309.7,808.6 310.1,803.5 310.6,808.0 311.0,803.1 311.5,809.1 311.9,802.9 312.4,808.8 312.8,802.8 313.3,808.7 313.7,803.8 314.2,808.0 314.6,804.0 315.1,809.0 315.5,801.8 316.0,808.5 316.4,803.5 316.9,808.4 317.3,804.1 317.8,808.0 318.2,803.4 318.7,809.3 319.1,803.8 319.6,808.0 320.0,802.5 320.5,808.9 320.9,802.7 321.4,808.3 321.8,803.6 322.3,809.1 322.7,803.5 323.2,809.1 323.6,803.2 324.1,808.0 324.5,804.3 325.0,808.2 325.4,802.9 325.9,807.6 326.3,802.9 326.8,807.8 327.2,804.3 327.7,809.4 328.1,803.6 328.6,807.6 329.0,803.3 329.5,809.1 329.9,803.3 330.4,808.4 330.8,804.2 331.3,808.5 331.7,803.6 332.2,808.5 332.6,803.7 333.1,807.5 333.5,801.4 334.0,808.0 334.4,802.3 334.9,808.9 335.3,802.9 335.8,808.4 336.2,803.1 336.7,807.4 337.1,803.4 337.6,808.8 338.0,803.0 338.5,808.8 338.9,803.2 339.4,808.5 339.8,803.5 340.3,808.4 340.7,804.1 341.2,807.8 341.6,802.9 342.1,808.4 342.5,802.9 343.0,809.0 343.4,804.0 343.9,809.6 344.3,803.8 344.8,808.8 345.2,802.7 345.7,809.6 346.1,803.1 346.6,807.6 347.0,803.4 347.5,807.7 347.9,802.2 348.4,808.3 348.8,803.2 349.3,808.1 349.7,804.0 350.2,807.0 350.6,802.7 351.1,808.6 351.5,803.0 352.0,808.2 352.4,802.1 352.9,807.8 353.3,802.9 353.8,809.0 354.2,803.2 354.7,808.7 355.1,803.9 355.6,809.2 356.0,802.2 356.5,808.2 356.9,802.6 357.4,808.8 357.8,803.2 358.3,808.0 358.7,803.5 359.2,808.8 359.6,804.0 360.1,808.6 360.5,803.3 361.0,809.0 361.4,802.6 361.9,808.3 362.3,802.8 362.8,808.2 363.2,803.3 363.7,809.2 364.1,803.4 364.6,807.7 365.0,802.5 365.5,809.5 365.9,803.0 366.4,808.8 366.8,804.4 367.3,808.4 367.7,803.6 368.2,809.0 368.6,803.8 369.1,808.5 369.5,803.7 370.0,807.7 370.4,803.1 370.9,807.9 371.3,803.2 371.8,808.8 372.2,804.2 372.7,809.0 373.1,802.7 373.6,808.6 374.0,803.4 374.5,809.7 374.9,803.5 375.4,808.8 375.8,803.3 376.3,809.0 376.7,804.3 377.2,808.5 377.6,802.7 378.1,809.2 378.5,805.7 379.0,810.2 379.4,803.3 379.9,809.9 380.3,803.8 380.8,809.5 381.2,804.8 381.7,808.7 382.1,804.1 382.6,808.9 383.0,806.2 383.5,808.9 383.9,804.7 384.4,809.2 384.8,805.1 385.3,809.9 385.7,804.4 386.2,810.0 386.6,804.8 387.1,809.4 387.5,805.6 388.0,809.8 388.4,804.0 388.9,810.6 389.3,805.7 389.8,810.4 390.2,805.4 390.7,811.1 391.1,805.3 391.6,809.4 392.0,805.4 392.5,810.2 392.9,805.8 393.4,810.2 393.8,805.6 394.3,810.0 394.7,805.5 395.2,810.0 395.6,805.6 396.1,810.4 396.5,805.0 397.0,810.6 397.4,805.3 397.9,810.4 398.3,806.7 398.8,810.7 399.2,806.0 399.7,811.4 400.1,803.9 400.6,801.1 401.0,784.4 401.5,794.6 401.9,783.9 402.4,793.7 402.8,783.9 403.3,793.2 403.7,783.8 404.2,791.9 404.6,783.7 405.1,792.5 405.5,783.0 406.0,792.7 406.4,781.4 406.9,791.4 407.3,783.5 407.8,792.4 408.2,781.9 408.7,792.4 409.1,781.5 409.6,791.2 410.0,783.0 410.5,791.7 410.9,781.3 411.4,790.1 411.8,781.2 412.3,790.5 412.7,781.6 413.2,791.0 413.6,780.1 414.1,790.9 414.5,780.2 415.0,789.8 415.4,780.3 415.9,789.0 416.3,780.0 416.8,788.1 417.2,779.0 417.7,789.1 418.1,779.0 418.6,789.0 419.0,780.3 419.5,788.0 419.9,777.7 420.4,788.1 420.8,779.0 421.3,787.7 421.7,778.2 422.2,787.3 422.6,776.1 423.1,787.5 423.5,775.7 424.0,786.8 424.4,776.2 424.9,787.0 425.3,775.3 425.8,784.5 426.2,775.0 426.7,785.6 427.1,774.3 427.6,784.4 428.0,773.4 428.5,785.2 428.9,773.7 429.4,785.1 429.8,772.6 430.3,784.3 430.7,772.0 431.2,783.8 431.6,770.9 432.1,783.0 432.5,770.9 433.0,782.2 433.4,768.9 433.9,782.0 434.3,768.3 434.8,782.5 435.2,768.2 435.7,780.2 436.1,768.2 436.6,781.6 437.0,766.4 437.5,779.8 437.9,729.6 438.4,772.7 438.8,708.6 439.4,697.0 439.7,709.5 440.2,767.1 440.6,709.9 441.1,767.1 441.5,712.9 442.0,757.8 442.4,710.6 442.9,755.9 443.3,710.9 443.8,757.7 444.2,703.7 444.7,757.5 445.1,708.7 445.6,752.5 446.0,710.6 446.5,748.6 446.9,706.9 447.4,751.9 447.8,706.2 448.3,749.0 448.7,703.1 449.2,747.5 449.6,711.4 450.1,751.4 450.5,705.3 451.0,757.1 451.4,713.5 451.9,755.4 452.3,706.8 452.8,759.4 453.2,708.8 453.7,758.1 454.1,716.7 454.6,761.6 455.0,697.9 455.5,760.4 455.9,720.5 456.4,759.5 456.8,718.1 457.3,754.9 457.7,719.9 458.2,758.2 458.6,719.2 459.1,761.1 459.5,709.0 460.0,762.7 460.4,717.8 460.9,764.1 461.3,719.9 461.8,767.2 462.2,718.2 462.7,764.7 463.1,714.6 463.6,764.9 464.0,713.7 464.5,761.4 464.9,713.4 465.4,758.7 465.8,691.1 466.3,761.0 466.7,707.4 467.2,752.1 467.6,708.9 468.1,751.2 468.5,705.8 469.0,758.0 469.4,698.2 469.9,756.0 470.3,705.6 470.8,751.5 471.2,704.7 471.7,750.1 472.1,681.4 472.6,750.3 473.0,703.1 473.5,752.6 473.9,703.6 474.4,752.5 474.8,699.3 475.3,750.3 475.7,706.8 476.0,674.7 476.6,704.9 477.1,748.5 477.5,682.0 478.0,757.0 478.4,704.4 478.9,750.2 479.3,698.2 479.8,753.7 480.2,701.4 480.7,753.0 481.1,707.0 481.6,758.4 482.0,703.3 482.5,756.7 482.9,701.5 483.4,759.2 483.8,680.3 484.3,755.7 484.7,705.5 485.2,761.4 485.6,693.4 486.1,755.8 486.5,706.6 487.0,759.7 487.4,700.7 487.9,757.3 488.3,695.2 488.8,755.9 489.2,704.0 489.7,756.9 490.1,696.2 490.6,759.9 491.0,684.0 491.5,744.9 492.0,643.0 492.4,728.9 492.8,649.6 493.3,725.7 493.7,649.0 494.2,726.4 494.6,650.8 495.1,724.7 495.5,646.4 496.0,728.8 496.4,646.9 496.9,726.9 497.3,653.6 497.8,728.3 498.2,644.0 498.7,741.1 499.1,645.0 499.6,734.3 500.0,768.8 500.5,742.4 500.9,632.4 501.4,728.7 501.8,666.0 502.3,730.6 502.7,660.8 503.2,729.7 503.6,665.1 504.1,730.5 504.5,670.2 505.0,739.6 505.4,665.2 505.9,740.9 506.3,673.8 506.8,746.0 507.2,675.5 507.7,735.0 508.1,668.7 508.6,738.8 509.0,668.4 509.5,738.5 509.9,673.1 510.4,739.0 510.8,668.7 511.3,738.4 511.7,669.7 512.2,743.3 512.6,668.5 513.1,738.1 513.5,672.8 514.0,731.2 514.4,674.2 514.9,742.3 515.3,669.4 515.8,741.3 516.2,670.3 516.7,738.4 517.1,669.8 517.6,743.3 518.0,647.7 518.5,746.5 518.9,654.9 519.4,741.1 519.8,663.9 520.3,751.2 520.7,661.5 521.2,746.0 521.6,665.3 522.1,743.2 522.5,673.7 523.0,742.5 523.4,671.5 523.9,747.7 524.3,685.3 524.8,749.0 525.2,688.3 525.7,747.0 526.1,690.2 526.6,748.4 527.0,678.5 527.5,751.7 527.9,688.7 528.4,751.2 528.8,687.8 529.3,756.8 529.7,688.5 530.2,754.5 530.6,678.5 531.1,752.8 531.5,677.7 532.0,752.9 532.4,661.7 532.9,748.7 533.3,669.9 533.8,748.0 534.2,669.2 534.7,750.7 535.1,660.8 535.6,750.1 536.0,622.8 536.6,651.0 536.9,656.4 537.4,754.3 537.8,651.2 538.3,743.8 538.7,649.3 539.2,741.0 539.6,666.5 540.1,743.5 540.5,662.8 541.0,743.5 541.4,663.2 541.9,735.8 542.3,665.7 542.8,735.8 543.2,662.0 543.7,725.7 544.1,670.2 544.6,725.6 545.0,670.1 545.5,725.8 545.9,668.9 546.4,724.1 546.8,659.2 547.3,716.5 547.7,655.8 548.2,719.1 548.6,652.6 549.1,717.9 549.5,655.7 550.0,732.4 550.4,664.4 550.9,727.5 551.3,668.2 551.8,724.6 552.2,652.0 552.7,726.1 553.1,659.6 553.6,724.7 554.0,663.9 554.5,736.2 554.9,662.5 555.4,726.8 555.8,664.9 556.3,726.5 556.7,667.0 557.2,729.3 557.6,655.8 558.1,726.6 558.5,659.7 559.0,722.4 559.4,662.8 559.9,725.5 560.3,657.7 560.8,719.8 561.2,653.3 561.7,725.8 562.1,649.9 562.6,731.8 563.0,647.7 563.5,725.3 563.9,646.7 564.4,727.6 565.0,612.6 565.3,731.7 565.7,650.4 566.2,722.6 566.6,644.1 567.1,726.7 567.5,650.0 568.0,725.3 568.4,639.7 568.9,726.2 569.3,639.7 569.8,727.5 570.2,650.1 570.7,742.5 571.1,618.0 571.6,732.8 572.0,651.0 572.5,731.3 572.9,647.7 573.4,723.7 573.8,630.2 574.3,728.5 574.7,649.9 575.2,727.4 575.6,647.6 576.1,739.7 576.5,639.8 577.0,740.6 577.4,650.5 577.9,734.7 578.3,653.6 578.8,737.8 579.2,656.3 579.7,739.2 580.1,653.2 580.6,749.4 581.0,654.1 581.5,744.6 581.9,666.6 582.4,748.2 582.8,667.5 583.3,744.7 583.7,667.3 584.2,743.2 584.6,677.5 585.1,748.9 585.5,659.5 586.0,753.4 586.4,690.1 586.9,754.1 587.3,686.3 587.8,750.3 588.2,676.8 588.7,751.3 589.1,667.5 589.6,744.6 590.0,669.5 590.5,738.9 590.9,669.4 591.4,749.6 591.8,664.2 592.3,745.3 592.7,661.5 593.2,739.5 593.6,660.4 594.1,734.1 594.5,657.6 595.0,731.9 595.4,630.9 595.9,736.1 596.3,624.9 596.8,743.3 597.0,651.0 597.7,731.5 598.1,656.7 598.6,729.2 599.0,664.9 599.5,735.3 599.9,669.4 600.4,733.6 600.8,668.4 601.3,733.0 601.7,668.4 602.2,741.5 602.6,669.0 603.1,738.8 603.5,679.6 604.0,736.8 604.4,673.6 605.0,636.5 605.3,671.7 605.8,739.7 606.2,672.9 606.7,741.0 607.1,659.1 607.6,747.7 608.0,674.7 608.5,742.5 608.9,677.8 609.4,742.9 609.8,684.1 610.3,748.3 610.7,684.0 611.2,754.3 611.6,682.4 612.1,750.7 612.5,682.8 613.0,755.5 613.4,686.0 613.9,751.7 614.3,683.6 614.8,748.8 615.2,687.1 615.7,765.2 616.1,682.3 616.6,747.4 617.0,687.3 617.5,746.1 617.9,682.0 618.4,744.5 618.8,681.5 619.3,741.8 619.7,687.2 620.2,752.9 620.6,687.2 621.1,737.8 621.5,690.6 622.0,742.7 622.4,687.3 622.9,742.1 623.3,691.8 623.8,746.8 624.2,698.4 624.7,751.8 625.1,695.8 625.6,755.7 626.0,698.7 626.5,762.5 626.9,702.0 627.4,763.5 627.8,707.0 628.3,767.2 628.7,698.9 629.2,767.1 629.6,707.4 630.1,765.0 630.5,714.9 631.0,766.8 631.4,708.1 631.9,767.6 632.3,717.4 632.8,763.5 633.2,712.4 633.7,766.8 634.1,726.0 634.6,774.2 635.0,719.6 635.5,769.3 635.9,729.4 636.4,774.0 636.8,723.0 637.3,767.5 637.7,716.7 638.2,769.0 638.6,724.6 639.1,771.1 639.5,717.4 640.0,773.2 640.4,719.4 640.9,770.7 641.3,710.5 641.8,776.0 642.2,720.2 642.7,768.9 643.1,722.7 643.6,771.5 644.0,705.9 644.5,765.1 644.9,712.9 645.4,769.5 645.8,723.0 646.3,765.3 646.7,723.4 647.2,774.5 647.6,714.5 648.1,765.1 648.5,723.2 649.0,768.6 649.4,718.8 649.9,765.2 650.3,721.8 650.8,770.6 651.2,719.8 651.7,769.9 652.1,711.6 652.6,778.8 653.0,719.5 653.5,773.0 653.9,723.8 654.4,773.5 654.8,721.1 655.3,774.8 655.7,721.8 656.2,769.0 656.6,712.3 657.1,772.7 657.5,721.2 658.0,767.2 658.4,725.4 658.9,766.3 659.3,726.2 659.8,766.8 660.2,716.4 660.7,767.6 661.1,722.2 661.6,771.8 662.0,727.0 662.5,767.6 662.9,725.5 663.4,762.0 663.8,728.7 664.3,767.2 664.7,724.1 665.2,768.9 665.6,723.2 666.1,764.7 666.5,721.5 667.0,697.0 667.4,720.0 667.9,769.7 668.3,720.8 668.8,765.0 669.2,722.3 669.7,760.2 670.1,723.7 670.6,764.4 671.0,729.2 671.5,761.7 671.9,727.8 672.4,760.9 672.8,726.0 673.3,763.9 673.7,724.5 674.2,764.3 674.6,725.9 675.1,758.9 675.5,730.2 676.0,761.6 676.4,729.7 676.9,759.6 677.3,725.8 677.8,758.4 678.2,724.1 678.7,755.7 679.1,725.5 679.6,760.5 680.0,722.5 680.5,767.3 680.9,716.1 681.4,757.0 681.8,716.7 682.3,761.0 682.7,700.1 683.2,762.2 683.6,704.6 684.1,765.0 684.5,708.3 685.0,761.8 685.4,713.6 685.9,756.1 686.3,712.7 686.8,758.6 687.2,715.6 687.7,760.3 688.1,702.5 688.6,760.4 689.0,716.6 689.5,762.8 689.9,717.6 690.4,758.8 690.8,719.7 691.3,760.5 691.7,718.0 692.2,759.8 692.6,707.6 693.1,756.2 693.5,713.2 694.0,760.6 694.4,716.1 694.9,765.3 695.3,715.5 695.8,768.2 696.2,712.5 696.7,761.6 697.1,713.3 697.6,763.5 698.0,704.5 698.5,763.0 698.9,710.8 699.4,770.2 699.8,711.2 700.3,761.6 700.7,712.7 701.2,765.3 701.6,715.6 702.1,758.7 702.5,700.8 703.0,757.1 703.4,714.1 703.9,756.7 704.3,708.7 704.8,758.9 705.2,710.3 705.7,758.5 706.1,707.4 706.6,758.0 707.0,707.2 707.5,763.5 707.9,696.9 708.4,762.6 708.8,708.6 709.3,766.3 709.7,696.4 710.2,759.8 710.6,698.2 711.1,766.3 711.5,698.2 712.0,766.3 712.4,702.8 712.9,765.6 713.3,704.9 713.8,764.0 714.2,685.9 714.7,765.1 715.1,703.5 715.6,764.9 716.0,701.2 716.5,764.4 716.9,701.2 717.4,762.9 717.8,687.5 718.3,762.4 718.7,700.1 719.2,765.0 719.6,695.5 720.1,774.7 720.5,691.6 721.0,771.4 721.4,670.7 721.9,775.6 722.3,682.5 722.8,764.6 723.2,688.2 723.7,766.8 724.1,689.4 724.6,763.9 725.0,673.7 725.5,764.6 725.9,682.7 726.4,767.1 726.8,685.3 727.3,766.4 727.7,679.8 728.2,761.2 728.6,659.6 729.1,761.2 729.4,660.4 730.0,760.7 730.4,677.5 730.9,755.8 731.3,675.7 731.8,754.5 732.2,672.9 732.7,752.5 733.1,676.6 733.6,745.2 734.0,672.7 734.5,744.8 734.9,643.1 735.4,737.9 735.8,659.3 736.3,741.7 736.7,646.3 737.2,744.5 737.6,675.2 738.1,742.3 738.5,673.2 739.0,760.3 739.4,667.3 739.9,748.7 740.3,671.6 740.8,753.1 741.2,669.5 741.7,753.5 742.1,647.9 742.6,752.4 743.0,678.4 743.5,758.4 743.9,678.9 744.4,767.3 744.8,667.3 745.3,753.8 745.7,681.9 746.2,754.4 746.6,682.7 747.1,755.0 747.5,679.4 748.0,759.8 748.4,686.3 748.9,760.1 749.3,675.8 749.8,761.1 750.2,697.8 750.7,761.1 751.1,699.0 751.6,764.8 752.0,700.6 752.5,762.0 752.9,702.3 753.4,764.7 753.8,696.8 754.3,764.2 754.7,712.7 755.2,762.6 755.6,717.2 756.1,771.7 756.5,728.1 757.0,766.6 757.4,714.9 757.9,772.5 758.3,732.9 758.8,768.9 759.2,728.7 759.7,766.6 760.1,724.0 760.6,765.4 761.0,725.8 761.5,763.5 761.9,721.5 762.4,769.7 762.8,726.5 763.3,770.4 763.7,727.3 764.2,768.8 764.6,721.1 765.1,771.2 765.5,723.3 766.0,759.5 766.4,716.7 766.9,754.6 767.3,719.8 767.8,748.1 768.2,716.6 768.7,747.0 769.1,721.9 769.6,746.6 770.0,722.8 770.5,755.5 770.9,722.8 771.4,753.9 771.8,725.0 772.3,757.9 772.7,721.2 773.2,764.1 773.6,719.8 774.1,767.0 774.5,713.1 775.0,765.5 775.4,703.4 775.9,764.8 776.3,715.0 776.8,769.7 777.2,712.4 777.7,766.8 778.1,721.2 778.6,765.8 779.0,717.9 779.5,768.9 779.9,714.8 780.4,773.7 780.8,715.8 781.3,775.6 781.7,708.0 782.2,774.0 782.6,717.7 783.1,776.3 783.5,706.9 784.0,770.9 784.4,725.6 784.9,774.2 785.3,725.1 785.8,770.5 786.2,722.6 786.7,767.6 787.1,721.5 787.6,758.2 788.0,713.6 788.5,763.5 788.9,716.3 789.4,764.3 789.8,708.7 790.3,766.9 790.7,709.5 791.2,762.1 791.6,699.3 792.1,764.1 792.5,702.7 793.0,760.7 793.4,705.8 793.9,760.6 794.3,699.2 794.8,761.5 795.2,694.8 795.7,762.1 796.1,693.8 796.6,757.8 797.0,668.5 797.5,753.3 797.9,681.4 798.4,758.0 798.8,687.2 799.3,755.5 799.7,665.1 800.2,753.8 800.6,683.8 801.1,757.5 801.5,668.1 802.0,753.2 802.4,678.6 802.9,752.7 803.3,682.1 803.8,753.6 804.2,673.8 804.7,754.5 805.1,665.9 805.6,752.8 806.0,657.0 806.5,757.2 806.9,677.2 807.4,751.1 807.8,665.6 808.3,749.6 808.7,678.3 809.2,751.8 809.6,673.9 810.1,749.0 810.5,685.6 811.0,743.1 811.4,688.0 811.9,749.0 812.3,688.2 812.8,748.5 813.2,682.9 813.7,741.4 814.1,683.4 814.6,745.8 815.0,671.8 815.5,743.7 815.9,661.4 816.4,738.2 816.8,623.7 817.3,741.1 817.7,659.1 818.2,740.4 818.6,656.3 819.1,741.3 819.5,654.9 820.0,740.5 820.4,657.3 820.9,750.0 821.3,638.6 821.8,742.9 822.2,656.4 822.7,740.7 823.1,657.2 823.6,738.5 824.0,652.9 824.5,759.5 824.9,655.8 825.4,744.4 825.8,638.0 826.3,749.2 826.7,648.2 827.2,741.7 827.6,649.4 828.1,738.5 828.5,639.9 829.0,743.9 829.4,613.3 829.9,733.3 830.3,649.2 830.8,734.3 831.2,648.5 831.7,748.2 832.1,652.7 832.6,738.9 833.0,652.1 833.5,736.8 833.9,630.6 834.4,740.9 834.8,646.0 835.3,735.8 835.7,645.1 836.2,739.4 836.6,629.8 837.1,737.2 837.5,622.9 838.0,734.9 838.4,641.9 838.9,734.2 839.3,620.0 839.8,737.2 840.2,619.7 840.7,735.8 841.1,625.7 841.6,736.3 841.8,600.0 842.5,734.2 842.9,632.1 843.4,742.9 843.8,621.8 844.3,743.1 844.7,624.7 845.2,735.6 845.6,630.0 846.1,754.4 846.5,623.2 847.0,743.2 847.4,617.3 847.9,742.9 848.3,627.3 848.8,747.5 849.2,618.4 849.7,738.3 850.1,624.2 850.6,741.9 851.0,625.0 851.5,735.5 851.9,617.8 852.4,742.1 852.8,624.3 853.3,733.8 853.7,610.7 854.2,730.2 854.6,623.2 855.1,739.0 855.5,618.4 856.0,722.2 856.4,618.7 856.9,719.4 857.3,591.3 857.8,711.4 858.2,618.5 858.7,714.0 859.1,601.2 859.6,721.3 860.0,608.3 860.5,712.9 860.9,608.2 861.4,715.9 861.8,573.4 862.3,716.2 862.7,603.0 863.2,720.2 863.6,599.1 864.1,719.0 864.4,562.6 865.0,725.0 865.4,595.5 865.9,736.9 866.3,593.2 866.8,725.8 867.2,589.4 867.7,730.8 868.1,587.9 868.6,723.4 869.0,583.2 869.5,729.7 869.9,588.0 870.4,716.6 870.8,579.9 871.3,709.9 871.7,572.5 872.2,720.7 872.6,571.7 873.1,704.0 873.5,570.2 874.0,697.6 874.4,557.6 874.9,693.6 875.3,563.3 875.8,712.2 876.2,563.8 876.7,701.2 877.1,559.6 877.6,707.2 878.0,554.6 878.5,710.1 878.9,553.9 879.4,716.4 879.6,536.0 880.3,720.1 880.7,552.2 881.2,735.9 881.6,572.9 882.1,726.6 882.5,591.2 883.0,719.2 883.4,580.4 883.9,726.9 884.3,604.0 884.8,726.2 885.2,607.9 885.7,736.0 886.1,588.1 886.6,742.0 887.0,609.2 887.5,732.3 887.9,591.3 888.4,738.9 888.8,593.8 889.3,734.3 889.7,594.1 890.2,736.9 890.6,616.1 891.1,736.1 891.5,617.3 892.0,730.1 892.4,615.7 892.9,725.4 893.3,613.0 893.8,723.5 894.2,609.7 894.7,718.6 895.1,595.4 895.6,716.0 896.0,596.7 896.5,718.7 896.9,597.5 897.4,712.2 897.8,583.1 898.3,718.3 898.7,584.1 899.2,712.1 899.6,570.5 900.1,715.3 900.5,554.0 901.0,730.1 901.4,569.6 901.9,723.0 902.3,538.6 902.8,721.7 903.2,558.5 903.7,723.5 904.1,548.8 904.6,724.9 905.0,550.4 905.5,718.2 905.9,546.6 906.4,717.0 906.8,543.9 907.3,719.7 907.7,540.6 908.2,716.0 908.6,542.1 909.1,705.4 909.5,538.7 909.8,513.4 910.4,536.3 910.9,696.2 911.3,538.9 911.8,701.5 912.2,505.3 912.7,705.8 913.1,533.0 913.6,697.0 914.0,529.1 914.5,696.1 914.9,528.9 915.4,701.1 915.8,531.9 916.3,697.6 916.7,532.5 917.2,698.9 917.6,538.4 918.1,698.8 918.5,542.1 919.0,703.1 919.4,544.2 919.9,712.0 920.3,529.0 920.8,715.8 921.2,547.3 921.5,484.4 922.1,539.3 922.6,722.5 923.0,555.6 923.5,717.1 923.9,560.1 924.4,718.5 924.8,567.3 925.3,716.6 925.7,566.2 926.2,712.9 926.6,569.8 927.1,713.0 927.5,571.6 928.0,717.7 928.4,568.2 928.9,722.4 929.3,590.1 929.8,714.9 930.2,573.5 930.7,724.6 931.1,611.6 931.6,718.4 932.0,621.5 932.5,726.1 932.9,634.6 933.4,744.2 933.8,639.4 934.3,736.3 934.7,650.0 935.2,736.4 935.6,651.1 936.1,730.1 936.5,647.9 937.0,731.2 937.4,647.6 937.9,728.5 938.3,645.0 938.8,729.3 939.2,645.2 939.7,735.1 940.1,645.9 940.6,727.9 941.0,643.1 941.5,722.0 941.9,644.5 942.4,718.4 942.8,641.3 943.3,732.1 943.7,637.0 944.2,717.8 944.6,640.7 945.1,722.7 945.5,641.5 946.0,727.1 946.4,646.2 946.9,731.2 947.3,632.1 947.8,726.7 948.2,642.9 948.7,725.2 949.1,644.1 949.6,730.0 950.0,644.1 950.5,724.4 950.9,634.7 951.4,723.9 951.8,636.3 952.3,717.9 952.7,646.1 953.2,719.9 953.6,630.6 954.1,725.8 954.5,632.2 955.0,723.0 955.4,646.3 955.9,720.6 956.3,646.2 956.8,723.4 957.2,646.1 957.7,722.1 958.1,649.2 958.6,719.6 959.0,646.1 959.5,730.4 959.9,643.6 960.4,725.0 960.8,646.3 961.3,734.3 961.7,628.7 962.2,724.0 962.7,564.0 963.1,724.1 963.5,637.9 964.0,723.2 964.4,636.6 964.9,723.3 965.3,651.9 965.8,724.7 966.2,650.2 966.7,727.8 967.1,650.0 967.6,727.8 968.0,636.1 968.5,724.0 968.9,643.5 969.4,728.2 969.8,635.3 970.3,732.6 970.7,643.4 971.2,726.5 971.6,646.1 972.1,736.5 972.5,644.5 973.0,734.4 973.4,641.5 973.9,733.6 974.3,622.0 974.8,732.0 975.2,643.5 975.7,734.6 976.1,638.3 976.6,729.5 977.0,639.8 977.5,725.1 977.9,644.5 978.4,726.2 978.8,642.0 979.3,728.9 979.7,646.8 980.2,742.2 980.6,627.2 981.1,744.2 981.5,646.5 982.0,724.8 982.4,628.8 982.9,727.0 983.3,641.8 983.8,725.4 984.2,639.8 984.7,720.4 985.1,636.6 985.6,718.8 986.0,605.3 986.5,716.2 986.9,610.7 987.4,709.4 987.8,597.3 988.3,710.4 988.7,600.1 989.2,712.0 989.6,599.3 990.1,706.5 990.5,588.1 991.0,575.8 991.4,597.8 991.9,711.5 992.3,593.3 992.8,712.3 993.2,589.5 993.7,719.0 994.1,560.9 994.6,714.6 995.0,585.2 995.5,719.9 995.9,577.3 996.4,713.2 997.0,535.0 997.3,708.5 997.7,571.5 998.2,716.0 998.6,570.4 999.1,705.1 999.5,557.5 1000.0,700.9 1000.4,583.4 1000.9,700.2 1001.3,583.7 1001.8,697.3 1002.2,595.6 1002.7,704.5 1003.1,593.3 1003.6,700.3 1004.0,572.0 1004.5,701.5 1004.9,594.0 1005.4,702.8 1005.8,563.2 1006.3,704.9 1006.7,584.5 1007.2,704.2 1007.6,582.4 1008.1,706.0 1008.5,571.1 1009.0,705.4 1009.4,561.5 1009.9,700.8 1010.3,567.4 1010.8,695.4 1011.2,568.3 1011.8,536.0 1012.1,521.1 1012.6,692.5 1013.0,566.4 1013.5,690.8 1013.9,556.6 1014.4,693.7 1014.8,570.4 1015.3,708.1 1015.7,574.4 1016.2,705.4 1016.6,585.4 1017.1,704.7 1017.5,588.6 1018.0,708.9 1018.4,598.3 1018.9,723.9 1019.3,598.3 1019.8,720.8 1020.2,579.7 1020.7,713.8 1021.1,602.6 1021.6,718.5 1022.0,595.2 1022.5,725.1 1022.9,605.9 1023.4,728.5 1023.8,605.3 1024.3,738.5 1024.7,604.8 1025.2,728.8 1025.6,597.1 1026.1,732.0 1026.5,623.3 1027.0,728.8 1027.4,625.2 1027.9,729.3 1028.3,627.0 1028.8,726.3 1029.2,632.8 1029.7,728.6 1030.1,633.5 1030.6,726.7 1031.0,637.1 1031.5,732.9 1031.9,632.7 1032.4,727.4 1032.8,627.2 1033.3,725.2 1033.7,633.6 1034.2,732.6 1034.6,612.1 1035.1,727.5 1035.5,586.9 1036.0,728.5 1036.4,624.8 1036.9,733.1 1037.3,595.5 1037.8,725.9 1038.2,616.3 1038.7,724.5 1039.1,617.8 1039.6,732.3 1040.0,619.7 1040.5,732.2 1040.9,622.7 1041.4,729.9 1041.8,616.2 1042.3,732.5 1042.7,619.6 1043.2,747.9 1043.6,577.5 1044.1,733.5 1044.5,614.9 1045.0,745.0 1045.4,598.2 1045.9,727.5 1046.3,609.4 1046.8,731.3 1047.2,589.6 1047.7,728.4 1048.1,600.8 1048.6,727.1 1049.0,596.5 1049.5,726.9 1049.9,588.0 1050.4,735.8 1050.8,589.0 1051.3,726.4 1051.7,590.3 1052.2,722.7 1052.6,583.2 1053.1,724.7 1053.5,586.0 1054.0,718.6 1054.4,585.7 1054.9,723.1 1055.3,589.4 1055.8,726.3 1056.2,594.2 1056.7,727.8 1057.1,581.3 1057.6,722.7 1058.0,592.1 1058.5,722.2 1058.9,586.7 1059.4,720.7 1059.8,578.1 1060.3,733.4 1060.7,580.5 1061.0,551.0 1061.6,573.7 1062.1,721.7 1062.5,585.5 1063.0,735.1 1063.4,588.2 1063.9,732.4 1064.3,607.2 1064.8,726.6 1065.2,614.0 1065.7,725.1 1066.1,613.6 1066.6,726.9 1067.0,637.3 1067.5,725.8 1067.9,642.6 1068.4,729.3 1068.8,642.0 1069.3,735.4 1069.7,654.9 1070.2,726.8 1070.6,657.3 1071.1,726.9 1071.5,639.7 1072.0,727.2 1072.4,662.4 1072.9,727.2 1073.3,662.0 1073.8,728.2 1074.2,654.3 1074.7,732.0 1075.1,669.4 1075.6,734.4 1076.0,664.9 1076.5,727.0 1076.9,666.8 1077.4,743.7 1077.8,661.8 1078.3,734.4 1078.7,664.6 1079.2,743.0 1079.6,663.5 1080.1,734.1 1080.5,654.8 1081.0,722.2 1081.4,663.1 1081.9,727.4 1082.3,657.7 1082.8,727.4 1083.2,637.4 1083.7,744.0 1084.1,636.0 1084.6,729.3 1085.0,651.8 1085.5,733.1 1085.9,655.6 1086.4,729.8 1086.8,663.0 1087.3,726.9 1087.7,664.0 1088.2,727.4 1088.6,636.1 1089.1,723.3 1089.5,670.7 1090.0,723.4 1090.4,663.4 1090.9,723.4 1091.3,661.3 1091.8,719.8 1092.2,645.5 1092.7,730.1 1093.1,642.9 1093.6,724.4 1094.0,646.3 1094.5,721.2 1094.9,624.7 1095.4,722.4 1095.8,624.7 1096.3,719.1 1096.7,622.2 1097.2,725.0 1097.6,572.6 1098.1,728.9 1098.5,603.0 1099.0,730.6 1099.4,599.7 1099.9,716.2 1100.3,587.0 1100.8,716.5 1101.2,570.6 1101.7,707.9 1101.9,542.0 1102.6,712.5 1103.0,562.2 1103.5,712.8 1103.9,558.0 1104.4,711.7 1104.8,555.5 1105.3,713.5 1105.7,565.6 1106.2,716.6 1106.6,575.2 1107.1,712.6 1107.5,580.9 1108.0,711.8 1108.4,575.6 1108.9,709.6 1109.3,567.9 1109.8,704.2 1110.2,564.0 1110.7,700.7 1111.1,560.4 1111.6,702.1 1112.0,551.6 1112.5,702.4 1112.9,545.1 1113.4,702.3 1113.8,540.9 1114.3,704.2 1114.7,544.8 1115.2,707.1 1115.6,540.0 1116.1,702.5 1116.5,539.5 1117.0,709.4 1117.4,547.9 1118.0,485.7 1118.3,549.3 1118.8,723.4 1119.2,552.4 1119.7,720.4 1120.1,556.4 1120.6,724.6 1121.0,557.2 1121.5,738.8 1121.9,562.4 1122.4,725.7 1122.8,567.3 1123.3,723.0 1123.7,572.4 1124.2,720.4 1124.6,581.7 1125.1,721.9 1125.5,588.0 1126.0,722.0 1126.4,598.6 1126.9,717.7 1127.3,600.3 1127.8,719.8 1128.2,586.8 1128.7,726.1 1129.1,601.4 1129.6,722.2 1130.0,612.0 1130.5,722.0 1130.9,613.4 1131.4,717.7 1131.8,586.6 1132.3,719.0 1132.7,631.1 1133.2,719.6 1133.6,636.2 1134.1,719.5 1134.5,647.4 1135.0,726.8 1135.4,635.5 1135.9,728.9 1136.3,654.6 1136.8,741.2 1137.2,649.8 1137.7,732.6 1138.1,650.6 1138.6,732.2 1139.0,651.7 1139.5,734.1 1139.9,643.8 1140.4,732.3 1140.8,653.3 1141.3,731.4 1141.7,645.1 1142.2,739.3 1142.6,653.2 1143.1,733.0 1143.5,645.2 1144.0,732.0 1144.4,640.4 1144.9,730.8 1145.3,640.1 1145.8,727.0 1146.2,636.7 1146.7,722.4 1147.1,641.9 1147.6,720.6 1148.0,646.2 1148.5,716.2 1148.9,630.2 1149.4,715.8 1149.8,642.7 1150.3,716.8 1150.7,638.0 1151.2,717.8 1151.6,642.3 1152.1,721.7 1152.5,626.5 1153.0,730.1 1153.4,629.7 1153.9,727.4 1154.3,628.6 1154.8,721.1 1155.2,633.0 1155.7,739.8 1156.1,618.1 1156.6,728.5 1157.0,625.2 1157.5,732.7 1157.9,623.2 1158.4,731.8 1158.8,621.7 1159.3,734.4 1159.7,619.6 1160.2,724.8 1160.6,618.9 1161.1,714.9 1161.5,605.5 1162.0,713.4 1162.4,621.0 1162.9,716.9 1163.3,615.9 1163.8,710.7 1164.2,616.7 1164.7,714.6 1165.1,621.5 1165.6,709.7 1166.0,578.0 1166.5,722.9 1166.9,592.1 1167.4,720.2 1167.8,614.0 1168.3,711.8 1168.7,613.5 1169.2,708.2 1169.6,609.5 1170.1,708.7 1170.5,608.9 1171.0,708.3 1171.4,596.5 1172.0,576.0 1172.3,608.2 1172.8,713.9 1173.2,583.4 1173.7,723.1 1174.1,605.8 1174.6,720.1 1175.0,610.0 1175.5,721.5 1175.9,605.1 1176.4,718.1 1176.8,601.7 1177.3,722.0 1177.7,604.2 1178.2,721.6 1178.6,555.7 1179.1,722.7 1179.5,578.9 1180.0,722.5 1180.4,603.1 1181.0,578.0 1181.3,605.8 1181.8,719.3 1182.2,605.4 1182.7,723.1 1183.1,603.1 1183.6,725.8 1184.0,600.2 1184.5,725.6 1184.9,601.2 1185.4,724.7 1185.8,564.0 1186.3,725.8 1186.7,578.8 1187.2,726.1 1187.6,576.7 1188.1,729.6 1188.5,573.7 1189.0,728.8 1189.4,590.3 1189.9,732.0 1190.3,600.8 1190.8,725.3 1191.2,599.4 1191.5,585.0 1192.1,596.4 1192.6,725.3 1193.0,561.6 1193.5,722.7 1193.9,605.2 1194.4,724.5 1194.8,588.3 1195.3,723.4 1195.7,603.2 1196.2,723.0 1196.6,606.9 1197.1,727.0 1197.5,604.0 1198.0,726.0 1198.4,601.3 1198.9,725.5 1199.3,583.2 1199.8,731.2 1200.2,608.4 1200.7,722.3 1201.1,605.1 1201.6,724.1 1202.0,611.9 1202.5,727.1 1202.9,568.1 1203.4,728.7 1203.8,612.9 1204.3,729.4 1204.7,609.0 1205.2,735.4 1205.6,610.8 1206.1,736.9 1206.5,588.3 1207.0,730.2 1207.4,616.8 1207.9,728.9 1208.3,603.9 1208.8,735.0 1209.2,605.5 1209.7,726.7 1210.1,619.9 1210.6,729.6 1211.0,624.0 1211.5,727.5 1211.9,615.3 1212.4,730.0 1212.8,610.2 1213.3,731.9 1213.7,614.9 1214.2,728.6 1214.6,573.5 1215.1,721.2 1215.5,609.2 1216.0,724.8 1216.4,571.0 1216.9,721.5 1217.3,604.9 1217.8,719.6 1218.2,604.0 1218.7,716.3 1219.1,571.7 1219.6,709.3 1220.0,594.0 1220.5,712.7 1220.9,589.8 1221.4,714.6 1221.8,567.3 1222.3,701.4 1222.7,548.6 1223.2,701.9 1223.6,585.3 1224.1,706.3 1224.5,585.9 1225.0,700.4 1225.4,584.8 1225.9,704.7 1226.3,577.1 1226.8,694.2 1227.2,557.3 1227.7,695.9 1228.1,583.3 1228.6,692.7 1229.0,573.3 1229.4,544.0 1230.0,545.0 1230.4,696.0 1230.8,544.3 1231.3,699.6 1231.7,573.6 1232.2,690.3 1232.6,570.4 1233.1,687.5 1233.5,570.4 1234.0,694.9 1234.4,560.0 1234.9,693.1 1235.3,569.3 1235.8,705.3 1236.2,569.9 1236.7,702.5 1237.1,572.2 1237.6,702.6 1238.0,573.1 1238.5,704.6 1238.7,561.0 1239.4,723.6 1239.8,602.0 1240.3,717.6 1240.7,616.5 1241.2,720.5 1241.6,632.2 1242.1,732.4 1242.5,641.6 1243.0,737.3 1243.4,639.5 1243.9,731.0 1244.3,654.8 1244.8,739.2 1245.2,637.6 1245.7,734.3 1246.1,655.3 1246.6,727.0 1247.0,655.8 1247.5,724.0 1247.9,653.3 1248.4,726.0 1248.8,641.8 1249.3,724.0 1249.7,651.9 1250.2,719.7 1250.6,658.3 1251.1,716.4 1251.5,659.0 1252.0,719.3 1252.4,653.2 1253.0,611.7 1253.3,665.6 1253.8,714.6 1254.2,664.9 1254.7,721.0 1255.1,666.3 1255.6,717.7 1256.0,664.6 1256.5,722.2 1256.9,666.6 1257.5,625.0 1257.8,664.3 1258.3,712.7 1258.7,661.7 1259.2,713.2 1259.6,659.1 1260.1,713.3 1260.5,657.4 1261.0,715.4 1261.4,664.4 1261.9,725.9 1262.3,660.1 1262.8,716.1 1263.2,665.3 1263.7,717.5 1264.1,664.1 1264.6,721.7 1265.0,666.4 1265.5,721.0 1265.9,649.7 1266.4,722.9 1266.8,642.6 1267.3,725.6 1267.7,663.7 1268.2,726.0 1268.6,665.1 1269.1,734.1 1269.5,664.9 1270.0,734.9 1270.4,667.2 1270.9,726.4 1271.3,667.1 1271.8,728.4 1272.2,667.8 1272.7,725.2 1273.1,665.2 1273.6,721.3 1274.0,663.6 1274.5,722.4 1274.9,663.6 1275.4,719.0 1275.8,654.1 1276.3,718.6 1276.7,663.7 1277.2,720.7 1277.6,660.6 1278.1,718.1 1278.5,659.0 1279.0,718.5 1279.5,604.0 1279.9,718.1 1280.3,657.0 1280.8,713.3 1281.2,655.2 1281.7,713.0 1282.1,650.3 1282.6,720.8 1283.0,658.1 1283.5,727.0 1284.0,612.0 1284.4,729.3 1284.8,661.0 1285.3,743.8 1285.7,652.9 1286.2,726.6 1286.6,660.7 1287.1,727.9 1287.5,650.7 1288.0,724.1 1288.4,652.8 1288.9,722.2 1289.3,636.1 1289.8,718.1 1290.2,651.5 1291.0,604.0 1291.6,700.0 1292.0,816.0 1292.5,805.0 1293.0,801.7 1293.5,806.3 1294.0,801.4 1294.5,806.6 1295.0,801.1 1295.5,806.1 1296.0,801.7 1296.5,806.3 1297.0,801.4 1297.5,806.5 1298.0,801.7 1298.5,805.9 1299.0,801.3 1299.5,806.1 1300.0,801.5 1300.5,806.1 1301.0,801.8 1301.5,806.4 1302.0,801.3 1302.5,806.4 1303.0,801.4 1303.5,806.3 1304.0,801.3 1304.5,806.0 1305.0,801.4 1305.5,805.8 1306.0,801.8 1306.5,806.0 1307.0,801.9 1307.5,806.0 1308.0,800.9 1308.5,806.4 1309.0,801.4 1309.5,805.6 1310.0,801.4 1310.5,806.1 1311.0,801.3 1311.5,806.3 1312.0,801.4 1312.5,806.2 1313.0,801.2 1313.5,806.1 1314.0,801.0 1314.5,806.0 1315.0,801.6 1315.5,806.1 1316.0,801.3 1316.5,805.9 1317.0,801.4 1317.5,806.3 1318.0,801.2 1318.5,806.1 1319.0,801.1 1319.5,806.2 1320.0,801.3 1320.5,806.0 1321.0,801.7 1321.5,806.2 1322.0,801.5 1322.5,806.3 1323.0,800.8 1323.5,806.2 1324.0,801.3 1324.5,806.1 1325.0,801.2 1325.5,806.2 1326.0,801.3 1326.5,805.7 1327.0,801.2 1327.5,805.8 1328.0,801.0 1328.5,806.1 1329.0,801.1 1329.5,805.4 1330.0,801.3 1330.5,806.0 1331.0,801.1 1331.5,806.2 1332.0,801.0 1332.5,805.8 1333.0,801.1 1333.5,806.2 1334.0,801.3 1334.5,805.7 1335.0,801.0 1335.5,806.4 1336.0,800.7 1336.5,805.9 1337.0,801.1 1337.5,806.0 1338.0,800.8 1338.5,805.9 1339.0,801.2 1339.5,805.6 1340.0,800.8 1340.5,805.9 1341.0,801.2 1341.5,805.8 1342.0,801.2 1342.5,805.9 1343.0,800.9 1343.5,806.2 1344.0,801.3 1344.5,805.7 1345.0,801.0 1345.5,806.1 1346.0,801.0 1346.5,805.9 1347.0,801.1 1347.5,805.9 1348.0,801.2 1348.5,805.9 1349.0,801.3 1349.5,806.0 1350.0,801.4 1350.5,806.1 1351.0,801.1 1351.5,806.0 1352.0,801.1 1352.5,806.1 1353.0,801.1 1353.5,806.4 1354.0,801.1 1354.5,805.7 1355.0,801.2 1355.5,806.0 1356.0,800.9 1356.5,806.1 1357.0,801.2 1357.5,806.6 1358.0,800.9 1358.5,805.3 1359.0,800.9 1359.5,805.8 1360.0,801.5 1360.5,806.2 1361.0,801.2 1361.5,806.1 1362.0,801.0 1362.5,806.0 1363.0,801.4 1363.5,805.9 1364.0,801.1 1364.5,806.2 1365.0,801.1 1365.5,805.4 1366.0,801.0 1366.5,806.0 1367.0,800.9 1367.5,805.9" fill="none" stroke="#00ff00" stroke-width="1.15" stroke-linejoin="round" marker-start="url(#m)" marker-mid="url(#m)" marker-end="url(#m)"/>
</g>
<g fill="#ffff00"><circle cx="57" cy="95" r="3.1"/><circle cx="55.5" cy="622.8" r="3.1"/><circle cx="51" cy="653.7" r="3.1"/><circle cx="51" cy="673.8" r="3.1"/><circle cx="433" cy="764" r="3.1"/><circle cx="438.8" cy="736" r="3.1"/><circle cx="438.8" cy="716.8" r="3.1"/><circle cx="475.4" cy="673.8" r="3.1"/><circle cx="492.6" cy="655.6" r="3.1"/><circle cx="566" cy="621.8" r="3.1"/><circle cx="842.5" cy="620.7" r="3.1"/><circle cx="848.6" cy="631.7" r="3.1"/><circle cx="856" cy="622.6" r="3.1"/><circle cx="861.8" cy="597.7" r="3.1"/><circle cx="866" cy="583.7" r="3.1"/><circle cx="871" cy="618.8" r="3.1"/><circle cx="877.7" cy="599.6" r="3.1"/><circle cx="883.3" cy="603" r="3.1"/><circle cx="892.4" cy="612.4" r="3.1"/><circle cx="895.8" cy="629.4" r="3.1"/><circle cx="901.5" cy="628.7" r="3.1"/><circle cx="907.5" cy="573.5" r="3.1"/><circle cx="913.6" cy="589.8" r="3.1"/><circle cx="919.6" cy="555.8" r="3.1"/><circle cx="925.6" cy="610.5" r="3.1"/><circle cx="962.7" cy="564.4" r="3.1"/><circle cx="987.6" cy="629.8" r="3.1"/><circle cx="991.4" cy="616.6" r="3.1"/><circle cx="996.7" cy="534.6" r="3.1"/><circle cx="1002.7" cy="611.7" r="3.1"/><circle cx="1010.3" cy="625.3" r="3.1"/><circle cx="1014.8" cy="628.7" r="3.1"/><circle cx="1020.5" cy="625.6" r="3.1"/><circle cx="1028.8" cy="621.5" r="3.1"/><circle cx="1033.7" cy="628.7" r="3.1"/><circle cx="1040.9" cy="615.4" r="3.1"/><circle cx="1047.7" cy="603.4" r="3.1"/><circle cx="1050" cy="603.4" r="3.1"/><circle cx="1056.4" cy="588.6" r="3.1"/><circle cx="1061.3" cy="598.4" r="3.1"/><circle cx="1115.9" cy="521.8" r="3.1"/><circle cx="1109.5" cy="564.8" r="3.1"/><circle cx="1104" cy="590.3" r="3.1"/><circle cx="1121" cy="598.3" r="3.1"/><circle cx="1098" cy="615" r="3.1"/><circle cx="1095.5" cy="622" r="3.1"/><circle cx="1114.6" cy="623.8" r="3.1"/></g>
<path d="M49 132.6h3 M67.5 132.6h3" stroke="#c81e1e" stroke-width="1.3" fill="none"/><path d="M56.5 132.6l2.7 -2.7l2.7 2.7l-2.7 2.7z" fill="#d81e1e"/>
<path d="M49 604.6h3 M67.5 604.6h3" stroke="#c81e1e" stroke-width="1.3" fill="none"/><path d="M56.5 604.6l2.7 -2.7l2.7 2.7l-2.7 2.7z" fill="#d81e1e"/>
<text x="63.5" y="145" textLength="117.5" lengthAdjust="spacing" class="an">(12/21 23:13:45, 12.404)</text>
<text x="63.5" y="617" textLength="117.5" lengthAdjust="spacing" class="an">(12/21 23:04:00, 22.374)</text>
<rect x="64.5" y="66.5" width="1239" height="763" fill="none" stroke="#3a0000" stroke-width="3" opacity="0.55"/>
<rect x="64.5" y="66.5" width="1239" height="763" fill="none" stroke="#c25454" stroke-width="1" shape-rendering="crispEdges" opacity="0.9"/>
<rect x="0" y="0" width="1427" height="3" fill="url(#tg)"/>
<rect x="0" y="0" width="1" height="847" fill="#f0f5fb"/>
<rect x="1425.6" y="0" width="1.4" height="847" fill="#f0f5fb"/>
<rect x="0" y="845.6" width="1427" height="1.4" fill="#f0f5fb"/>
</svg></body></html>
